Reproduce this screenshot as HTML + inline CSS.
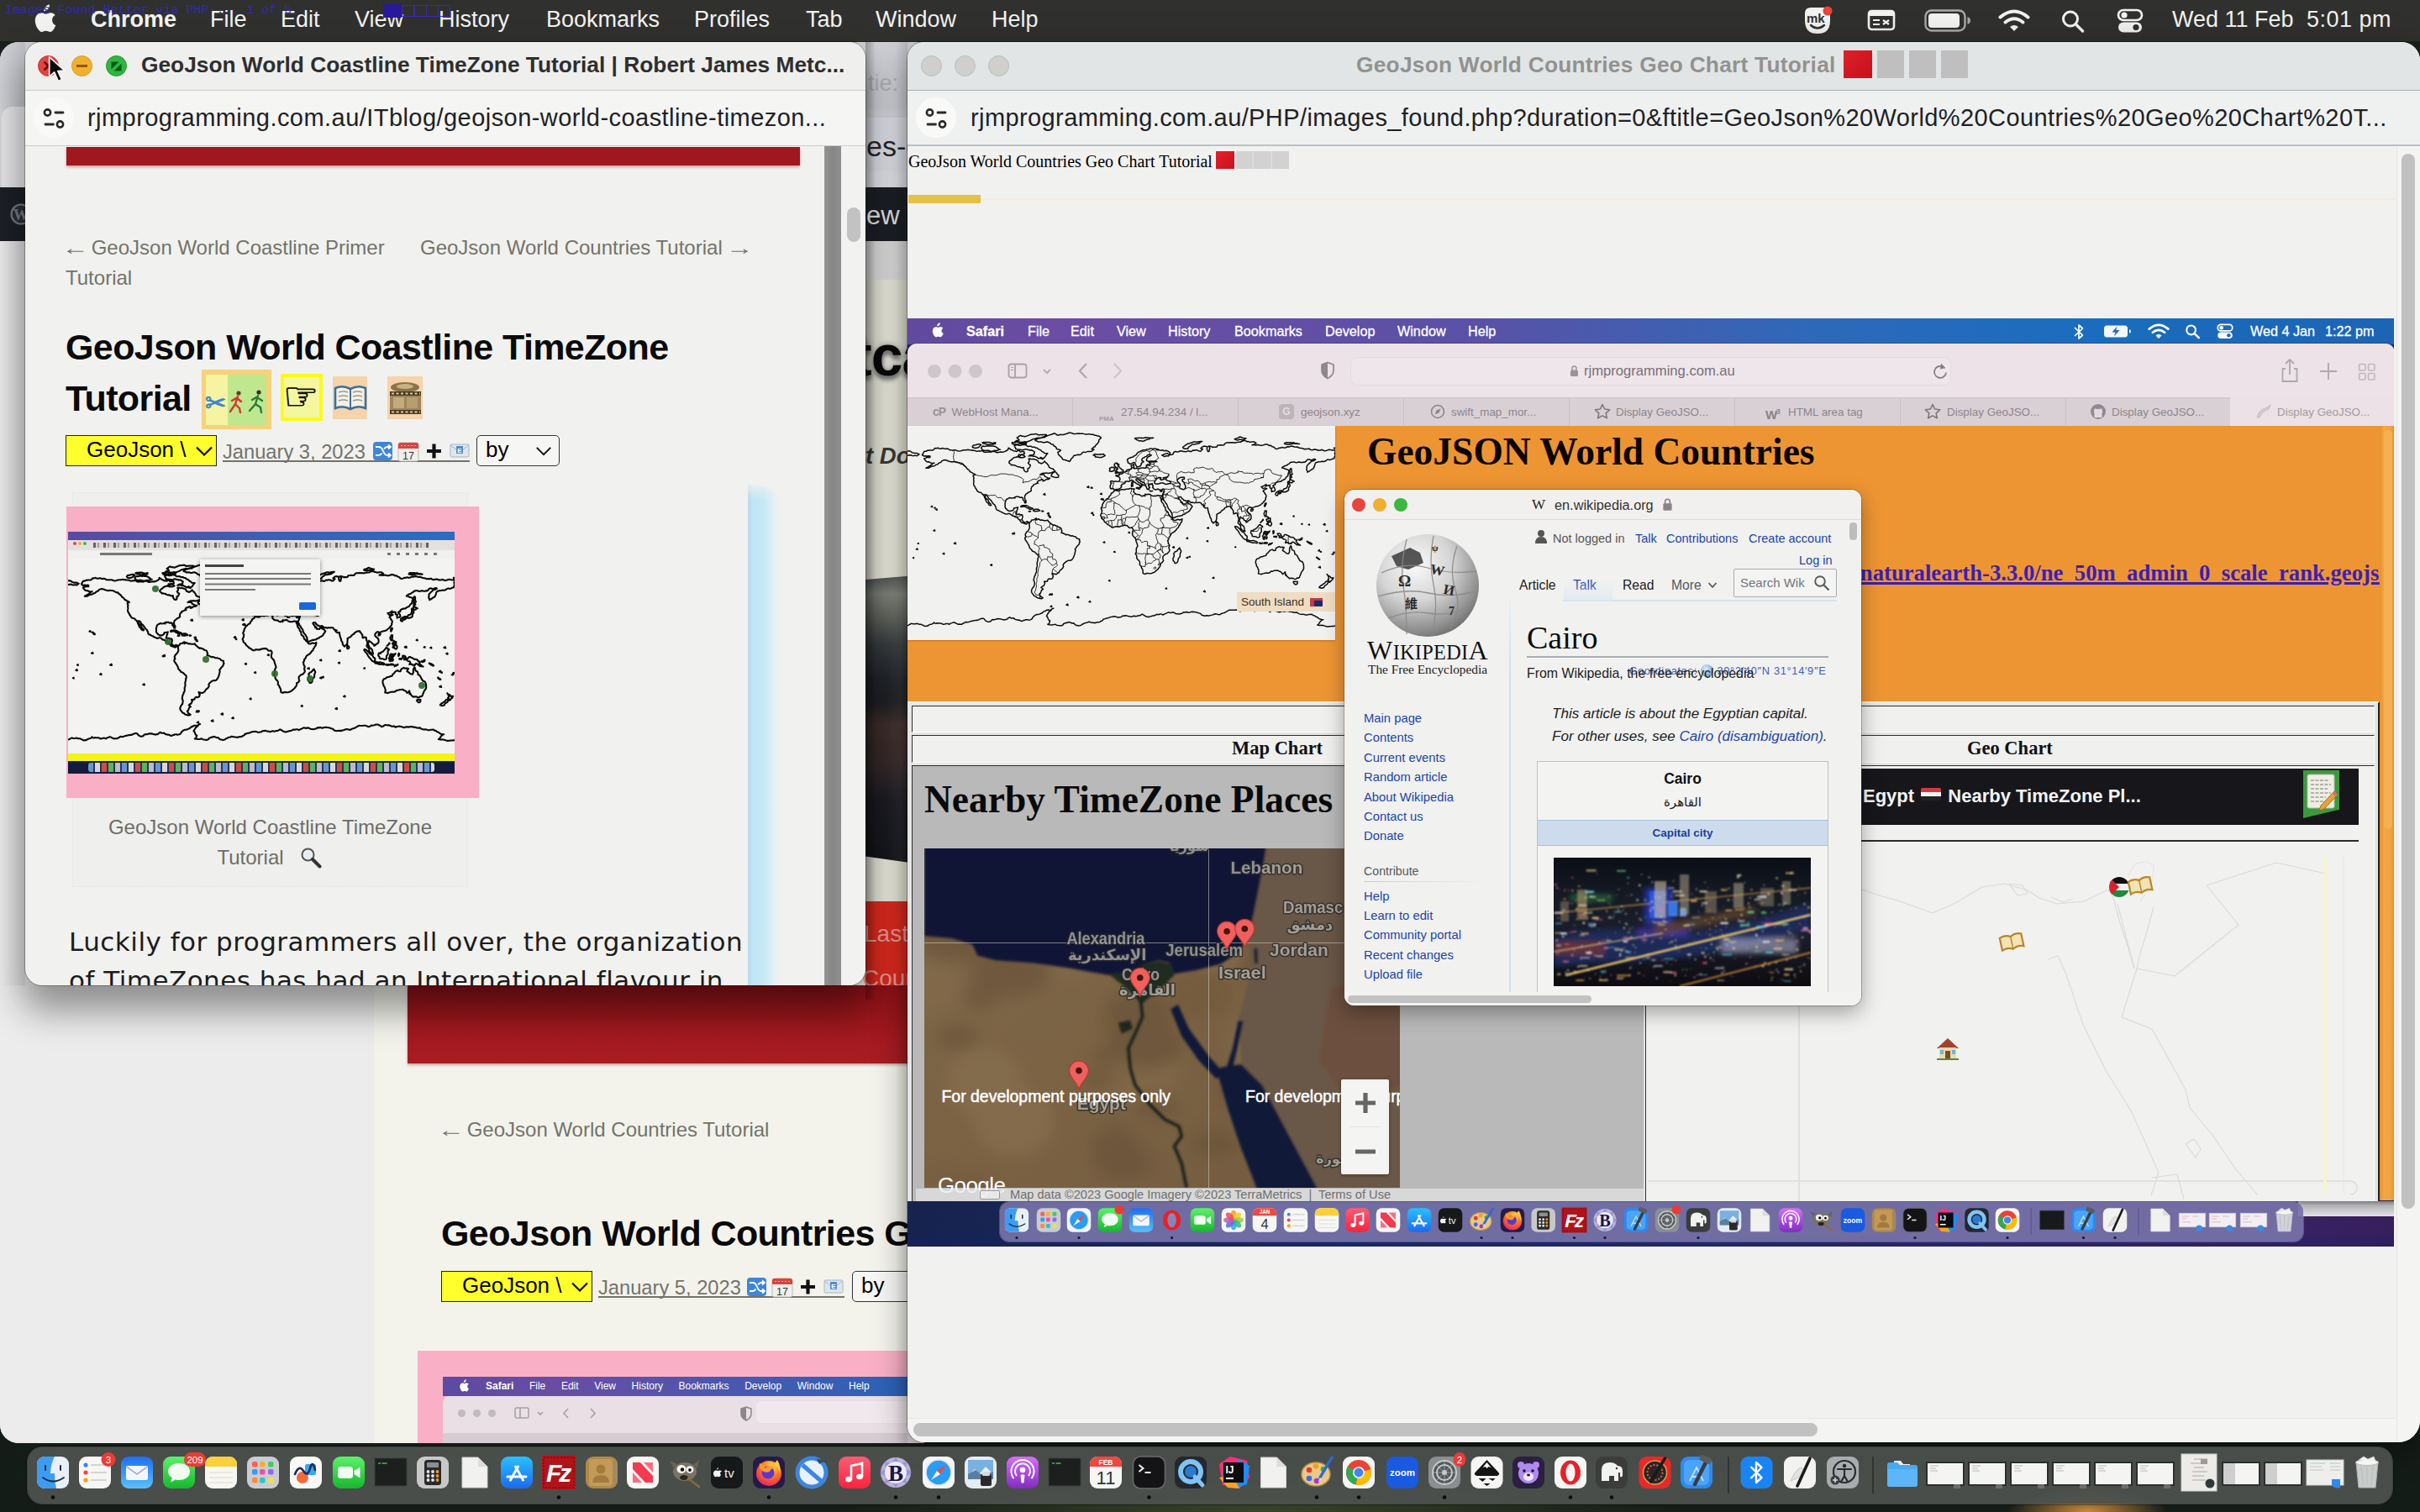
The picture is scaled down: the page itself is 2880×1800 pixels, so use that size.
<!DOCTYPE html>
<html lang="en">
<head>
<meta charset="utf-8">
<title>GeoJson World Coastline TimeZone Tutorial | Robert James Metcalfe Blog</title>
<style>
*{box-sizing:border-box;margin:0;padding:0}
html,body{width:2880px;height:1800px;overflow:hidden;background:#141c17;}
body{font-family:"Liberation Sans",sans-serif;color:#111;position:relative}
.abs{position:absolute}
.nw{white-space:nowrap}
#desk{position:absolute;left:0;top:0;width:2880px;height:1800px;
 background:
 radial-gradient(ellipse 95px 34px at 2484px 1800px,#c98a3c 0%,rgba(150,90,40,0) 100%),
 radial-gradient(ellipse 500px 50px at 1500px 1800px,#3a4428 0%,rgba(40,50,30,0) 100%),
 linear-gradient(#1a211c,#141c17);}
/* ---------- mac menu bar ---------- */
#mbar{position:absolute;left:0;top:0;width:2880px;height:49px;background:#30302e;color:#f2f2f0;font-size:27px;line-height:49px;white-space:nowrap}
#mbar span{position:absolute;top:-1px}
#mbar .b{font-weight:bold}
#ovl{position:absolute;left:6px;top:3px;font-family:"Liberation Mono",monospace;font-size:14.800px;line-height:18px;color:#3029b4;white-space:nowrap;letter-spacing:0.1px}
</style>
</head>
<body>
<div id="desk"></div>
<!-- ================= MENU BAR ================= -->
<div id="mbar">
  <svg class="abs" style="left:39px;top:4px" width="32" height="38" viewBox="0 0 26 31"><path fill="#f2f2f0" d="M18.2 0.3c.2 1.6-.5 3.2-1.4 4.3-1 1.200-2.600 2.100-4.100 2-.2-1.600.6-3.200 1.500-4.200C15.200 1.200 16.900.4 18.200.3zM23.600 10.500c-.3.200-2.800 1.600-2.800 4.800 0 3.700 3.300 5 3.400 5-.1.100-.5 1.800-1.700 3.500-1 1.500-2.100 3-3.800 3-1.600 0-2.100-1-4-1-1.900 0-2.500 1-4 1-1.600.1-2.800-1.600-3.900-3.100C4.700 20.600 3.100 15.100 5.300 11.300c1.100-1.900 3.100-3.100 5.200-3.100 1.600 0 3.100 1.100 4.100 1.100 1 0 2.800-1.300 4.800-1.100.8 0 3.100.3 4.600 2.500z" transform="translate(-2,1)"/></svg>
  <span class="b" style="left:108px">Chrome</span>
  <span style="left:250px">File</span>
  <span style="left:334px">Edit</span>
  <span style="left:422px">View</span>
  <span style="left:522px">History</span>
  <span style="left:650px">Bookmarks</span>
  <span style="left:826px">Profiles</span>
  <span style="left:959px">Tab</span>
  <span style="left:1042px">Window</span>
  <span style="left:1180px">Help</span>
  <!-- right status icons -->
  <svg class="abs" style="left:2145px;top:6px" width="38" height="38" viewBox="0 0 38 38"><path d="M3 10q0-7 7-7h16q7 0 7 7v8q0 16-14 16h-2q-14 0-14-16z" fill="#f2f2f0"/><text x="5" y="21" font-family="Liberation Sans,sans-serif" font-weight="bold" font-size="15" fill="#30302e">mk</text><path d="M10 24q8 7 16 0" stroke="#30302e" stroke-width="2.500" fill="none" stroke-linecap="round"/><circle cx="30" cy="7" r="5.500" fill="#e8443a"/></svg>
  <svg class="abs" style="left:2222px;top:10px" width="34" height="28" viewBox="0 0 34 28"><rect x="2" y="3" width="30" height="22" rx="3.500" fill="none" stroke="#f2f2f0" stroke-width="2.600"/><rect x="2" y="3" width="30" height="6" fill="#f2f2f0"/><path d="M7 14h8M7 19h8M19 14l7 5M26 14l-7 5" stroke="#f2f2f0" stroke-width="2.200"/></svg>
  <svg class="abs" style="left:2290px;top:11px" width="56" height="27" viewBox="0 0 56 27"><rect x="1.500" y="1.500" width="47" height="24" rx="7" fill="none" stroke="#a9a9a6" stroke-width="2.400"/><rect x="5" y="5" width="37" height="17" rx="4" fill="#f2f2f0"/><path d="M51.500 9v9q3.500-1.200 3.500-4.500T51.500 9z" fill="#a9a9a6"/></svg>
  <svg class="abs" style="left:2378px;top:10px" width="38" height="28" viewBox="0 0 38 28"><path d="M2.500 10.500q16.500-14 33 0" fill="none" stroke="#f2f2f0" stroke-width="4" stroke-linecap="round"/><path d="M8.500 16.500q10.500-8.500 21 0" fill="none" stroke="#f2f2f0" stroke-width="4" stroke-linecap="round"/><path d="M14 22q5-4 10 0l-5 5z" fill="#f2f2f0"/></svg>
  <svg class="abs" style="left:2452px;top:11px" width="30" height="28" viewBox="0 0 30 28"><circle cx="12" cy="11.500" r="8.500" fill="none" stroke="#f2f2f0" stroke-width="3"/><path d="M18.500 18l8 8" stroke="#f2f2f0" stroke-width="3.400" stroke-linecap="round"/></svg>
  <svg class="abs" style="left:2519px;top:10px" width="32" height="30" viewBox="0 0 32 30"><rect x="2" y="2" width="28" height="12" rx="6" fill="none" stroke="#f2f2f0" stroke-width="2.600"/><circle cx="9" cy="8" r="3.600" fill="#f2f2f0"/><rect x="2" y="16.500" width="28" height="12" rx="6" fill="#f2f2f0"/><circle cx="23" cy="22.500" r="3.600" fill="#30302e"/></svg>
  <span style="left:2585px">Wed 11 Feb</span>
  <span style="left:2745px;letter-spacing:0.500px">5:01 pm</span>
</div>
<div id="ovl">Images Found Better via PHP ... 1 of 5</div>
<div class="abs" style="left:456px;top:5px;width:22px;height:16px;background:#28189c"></div>
<div class="abs" style="left:478px;top:6px;width:58px;height:14px;border:1px solid #3a2aa8;background:repeating-linear-gradient(90deg,transparent 0 13px,#3a2aa8 13px 14.500px)"></div>
<!-- dock icon symbols -->
<svg width="0" height="0" style="position:absolute"><defs><symbol id="i_finder" viewBox="0 0 40 40" overflow="visible"><defs><clipPath id="cfi"><rect x="1" y="1" width="38" height="38" rx="9"/></clipPath></defs><g clip-path="url(#cfi)"><rect x="1" y="1" width="38" height="38" fill="#e9eff6"/><path d="M1 1h21q-5 10-5 20h5q0 10 2 18H1z" fill="#3d9cf2"/><path d="M11 12v5M29 12v5" stroke="#1a2a44" stroke-width="2" stroke-linecap="round"/><path d="M8 26q12 9 25 0" fill="none" stroke="#1a2a44" stroke-width="1.800" stroke-linecap="round"/></g></symbol><symbol id="i_reminders" viewBox="0 0 40 40" overflow="visible"><rect x="1" y="1" width="38" height="38" rx="9" fill="#f6f6f4"/><circle cx="9" cy="11" r="2.600" fill="#3b82f6"/><circle cx="9" cy="20" r="2.600" fill="#ef4444"/><circle cx="9" cy="29" r="2.600" fill="#f59e0b"/><path d="M15 11h19M15 20h19M15 29h19" stroke="#c9c9c9" stroke-width="1.600"/></symbol><symbol id="i_mail" viewBox="0 0 40 40" overflow="visible"><defs><linearGradient id="gma" x1="0" y1="0" x2="0" y2="1"><stop offset="0" stop-color="#1e6ef0"/><stop offset="1" stop-color="#5ac0fa"/></linearGradient></defs><rect x="1" y="1" width="38" height="38" rx="9" fill="url(#gma)"/><rect x="7" y="12" width="26" height="17" rx="2" fill="#f4f6fa"/><path d="M7.500 13l12.500 9 12.500-9" fill="none" stroke="#9fb4d0" stroke-width="1.600"/></symbol><symbol id="i_messages" viewBox="0 0 40 40" overflow="visible"><defs><linearGradient id="gms" x1="0" y1="0" x2="0" y2="1"><stop offset="0" stop-color="#5ef06a"/><stop offset="1" stop-color="#16b82c"/></linearGradient></defs><rect x="1" y="1" width="38" height="38" rx="9" fill="url(#gms)"/><path d="M20 9c8 0 13 4.500 13 10s-5 10-13 10q-2 0-4-.5l-6 3 1.800-5Q7 23 7 19C7 13.500 12 9 20 9z" fill="#f2fbf2"/></symbol><symbol id="i_notes" viewBox="0 0 40 40" overflow="visible"><rect x="1" y="1" width="38" height="38" rx="9" fill="#f7f7f2"/><path d="M1 13V10a9 9 0 019-9h20a9 9 0 019 9v3z" fill="#fbd03c"/><path d="M6 20h28M6 26h28M6 32h28" stroke="#dedbd0" stroke-width="1.200"/></symbol><symbol id="i_launchpad" viewBox="0 0 40 40" overflow="visible"><rect x="1" y="1" width="38" height="38" rx="9" fill="#c9ccd2"/><rect x="7" y="7" width="6.500" height="6.500" rx="1.800" fill="#ff5e57"/><rect x="16" y="7" width="6.500" height="6.500" rx="1.800" fill="#ffb02e"/><rect x="26" y="7" width="6.500" height="6.500" rx="1.800" fill="#3ecf5a"/><rect x="7" y="16" width="6.500" height="6.500" rx="1.800" fill="#3b9af5"/><rect x="16" y="16" width="6.500" height="6.500" rx="1.800" fill="#f54ea2"/><rect x="26" y="16" width="6.500" height="6.500" rx="1.800" fill="#8e6cf0"/><rect x="7" y="26" width="6.500" height="6.500" rx="1.800" fill="#ff8a3d"/><rect x="16" y="26" width="6.500" height="6.500" rx="1.800" fill="#29c7c7"/><rect x="26" y="26" width="6.500" height="6.500" rx="1.800" fill="#f2e04a"/></symbol><symbol id="i_freeform" viewBox="0 0 40 40" overflow="visible"><rect x="1" y="1" width="38" height="38" rx="9" fill="#f8f8f6"/><circle cx="16" cy="26" r="7" fill="#f26b3a"/><rect x="19" y="10" width="13" height="13" rx="2" fill="#36a8f5"/><path d="M7 22q5-12 10-4t8-3 6 2" fill="none" stroke="#202a5a" stroke-width="2.600" stroke-linecap="round"/></symbol><symbol id="i_facetime" viewBox="0 0 40 40" overflow="visible"><rect x="1" y="1" width="38" height="38" rx="9" fill="url(#gms)"/><rect x="7" y="13" width="18" height="14" rx="3.500" fill="#f2fbf2"/><path d="M26.500 18l7-4.500v13l-7-4.500z" fill="#f2fbf2"/></symbol><symbol id="i_darkterm" viewBox="0 0 40 40" overflow="visible"><rect x="1" y="3" width="38" height="33" fill="#1c1f1e" stroke="#3a3d3c" stroke-width="1"/><path d="M5 9h3M9.500 9h6" stroke="#39c04a" stroke-width="1.600"/></symbol><symbol id="i_calculator" viewBox="0 0 40 40" overflow="visible"><rect x="1" y="1" width="38" height="38" rx="9" fill="#c8c8c8"/><rect x="10" y="5" width="20" height="30" rx="3.500" fill="#2a2a2c"/><rect x="13" y="8" width="14" height="6" rx="1" fill="#8a8e92"/><circle cx="14.5" cy="19.0" r="1.900" fill="#e6e6e6"/><circle cx="14.5" cy="24.0" r="1.900" fill="#e6e6e6"/><circle cx="14.5" cy="29.0" r="1.900" fill="#e6e6e6"/><circle cx="20.0" cy="19.0" r="1.900" fill="#e6e6e6"/><circle cx="20.0" cy="24.0" r="1.900" fill="#e6e6e6"/><circle cx="20.0" cy="29.0" r="1.900" fill="#e6e6e6"/><circle cx="25.5" cy="19.0" r="1.900" fill="#f09a2a"/><circle cx="25.5" cy="24.0" r="1.900" fill="#f09a2a"/><circle cx="25.5" cy="29.0" r="1.900" fill="#f09a2a"/></symbol><symbol id="i_doc" viewBox="0 0 40 40" overflow="visible"><path d="M5 2h19l11 11v25H5z" fill="#f1f1ef" stroke="#d2d2d0" stroke-width="1"/><path d="M24 2v11h11z" fill="#dcdcda"/></symbol><symbol id="i_appstore" viewBox="0 0 40 40" overflow="visible"><defs><linearGradient id="gap" x1="0" y1="0" x2="0" y2="1"><stop offset="0" stop-color="#2ac0fc"/><stop offset="1" stop-color="#1a6af0"/></linearGradient></defs><rect x="1" y="1" width="38" height="38" rx="9" fill="url(#gap)"/><path d="M12.500 29l9-16M27.500 29l-9-16M9 25h22" stroke="#f4f8ff" stroke-width="3" stroke-linecap="round" fill="none"/></symbol><symbol id="i_filezilla" viewBox="0 0 40 40" overflow="visible"><rect x="0" y="0" width="40" height="40" fill="#b0141a"/><rect x="2" y="2" width="36" height="36" fill="none" stroke="#8a0c12" stroke-width="2" stroke-dasharray="2 2"/><text x="5" y="31" font-family="Liberation Sans,sans-serif" font-weight="bold" font-style="italic" font-size="30" fill="#fff" letter-spacing="-3">Fz</text></symbol><symbol id="i_contacts" viewBox="0 0 40 40" overflow="visible"><rect x="1" y="1" width="38" height="38" rx="9" fill="#b08848"/><rect x="5" y="4" width="28" height="32" rx="3" fill="#c39a58"/><circle cx="19" cy="16" r="5.500" fill="#a27c3e"/><path d="M9 32q0-9 10-9t10 9z" fill="#a27c3e"/><path d="M36 8v6M36 17v6M36 26v6" stroke="#8a8a8a" stroke-width="2.500"/></symbol><symbol id="i_news" viewBox="0 0 40 40" overflow="visible"><rect x="1" y="1" width="38" height="38" rx="9" fill="#f6f6f4"/><path d="M8 8h9l15 16v8h-9L8 16z" fill="#f23a50"/><path d="M8 20l11 12H8zM32 20L21 8h11z" fill="#f8707e"/></symbol><symbol id="i_gimp" viewBox="0 0 40 40" overflow="visible"><ellipse cx="20" cy="19" rx="14" ry="11" fill="#7a7264"/><path d="M6 14L2 6l9 4zM30 11l7-6-2 10z" fill="#6a6256"/><ellipse cx="16" cy="16" rx="5.500" ry="5" fill="#f4f4f0"/><ellipse cx="26" cy="16.500" rx="4.500" ry="4.200" fill="#f4f4f0"/><circle cx="17" cy="16.500" r="2.200" fill="#111"/><circle cx="26" cy="17" r="1.900" fill="#111"/><ellipse cx="19" cy="26" rx="5" ry="3" fill="#2a2622"/><path d="M24 27l13 10" stroke="#8a6a3a" stroke-width="2.600" stroke-linecap="round"/></symbol><symbol id="i_appletv" viewBox="0 0 40 40" overflow="visible"><rect x="1" y="1" width="38" height="38" rx="9" fill="#17181a"/><text x="17" y="26" font-family="Liberation Sans,sans-serif" font-size="15" fill="#f2f2f2">tv</text><path d="M12.500 15.500c.2 1-.8 2.200-1.900 2.100-.2-1 .9-2.100 1.900-2.100zM15.400 20.400c-1.200.7-1.400 2.600.1 3.300-.5 1.300-1.400 2.800-2.500 2.800-.8 0-1-.5-2-.5s-1.200.5-2 .5c-1.400 0-3.400-3.800-2.100-6.100.6-1 1.600-1.600 2.600-1.600.9 0 1.500.5 2.200.5.600 0 1.500-.6 2.500-.5.500 0 1.500.2 2.200 1.100z" fill="#f2f2f2" transform="translate(-2.500,-1.200)"/></symbol><symbol id="i_firefox" viewBox="0 0 40 40" overflow="visible"><defs><radialGradient id="gff" cx=".6" cy=".25" r=".9"><stop offset="0" stop-color="#ffe14a"/><stop offset=".4" stop-color="#ff7a1c"/><stop offset=".8" stop-color="#e8305a"/><stop offset="1" stop-color="#8a2ac8"/></radialGradient></defs><rect x="1" y="1" width="38" height="38" rx="9" fill="#241a4a"/><circle cx="20" cy="21" r="15" fill="url(#gff)"/><circle cx="19" cy="20" r="7.500" fill="#5a38d0"/><path d="M9 9q5 1 6 6 5-5 13-1-6 1-7 5-6 2-10-2-3-4-2-8z" fill="#ff9a2a"/><path d="M30 5q5 8 3 16-2-8-7-11z" fill="#ffc83a"/></symbol><symbol id="i_noslash" viewBox="0 0 40 40" overflow="visible"><circle cx="20" cy="20" r="17" fill="#e8f0fa" stroke="#3a86e0" stroke-width="5"/><path d="M9 11l22 19" stroke="#3a86e0" stroke-width="5"/><path d="M26 4q8 0 12 3-6 0-9 3z" fill="#3a4a5a"/></symbol><symbol id="i_music" viewBox="0 0 40 40" overflow="visible"><defs><linearGradient id="gmu" x1="0" y1="0" x2="0" y2="1"><stop offset="0" stop-color="#fb5c74"/><stop offset="1" stop-color="#fa233b"/></linearGradient></defs><rect x="1" y="1" width="38" height="38" rx="9" fill="url(#gmu)"/><path d="M16 28V12l13-3v16" fill="none" stroke="#fff" stroke-width="2.600"/><ellipse cx="13" cy="28" rx="4" ry="3.200" fill="#fff"/><ellipse cx="26" cy="25" rx="4" ry="3.200" fill="#fff"/></symbol><symbol id="i_bbedit" viewBox="0 0 40 40" overflow="visible"><circle cx="20" cy="20" r="18" fill="#b9b2dc"/><path d="M20 2l5 7 8-2-1 8 7 5-7 5 1 8-8-2-5 7-5-7-8 2 1-8-7-5 7-5-1-8 8 2z" fill="#9a8ed0" opacity=".9"/><circle cx="20" cy="20" r="13" fill="#eceaf6"/><text x="20" y="30" text-anchor="middle" font-family="Liberation Serif,serif" font-weight="bold" font-size="27" fill="#1a1446">B</text></symbol><symbol id="i_safari" viewBox="0 0 40 40" overflow="visible"><rect x="1" y="1" width="38" height="38" rx="9" fill="#f4f6f8"/><circle cx="20" cy="20" r="15" fill="#2a9cf4"/><circle cx="20" cy="20" r="15" fill="none" stroke="#dfe6ee" stroke-width="1.600"/><path d="M29 11l-7 11-4-4z" fill="#f2463a"/><path d="M11 29l7-11 4 4z" fill="#f4f6f8"/></symbol><symbol id="i_preview" viewBox="0 0 40 40" overflow="visible"><rect x="1" y="1" width="38" height="38" rx="9" fill="#e4ecf2"/><rect x="5" y="5" width="30" height="23" fill="#7ab0e0"/><path d="M5 24l8-8 6 5 7-8 9 9v6H5z" fill="#e8eef2"/><path d="M5 22l9-5 8 6 13-4v9H5z" fill="#5a7ea0"/><rect x="20" y="22" width="13" height="14" rx="2" fill="#2a2a2c"/><rect x="22" y="19" width="9" height="5" rx="1.500" fill="#d8d8d8"/></symbol><symbol id="i_podcasts" viewBox="0 0 40 40" overflow="visible"><defs><linearGradient id="gpo" x1="0" y1="0" x2="0" y2="1"><stop offset="0" stop-color="#d56efc"/><stop offset="1" stop-color="#832bc1"/></linearGradient></defs><rect x="1" y="1" width="38" height="38" rx="9" fill="url(#gpo)"/><circle cx="20" cy="17" r="3.300" fill="#fff"/><path d="M17.500 23q2.500-1.500 5 0l-1 9q-1.500 1-3 0z" fill="#fff"/><path d="M13 24a9 9 0 1114 0M9.500 27a13.500 13.500 0 1121 0" fill="none" stroke="#fff" stroke-width="2"/></symbol><symbol id="i_calendar" viewBox="0 0 40 40" overflow="visible"><rect x="1" y="1" width="38" height="38" rx="9" fill="#f6f6f4"/><path d="M1 13V10a9 9 0 019-9h20a9 9 0 019 9v3z" fill="#f0473e"/><text x="20" y="10.500" text-anchor="middle" font-family="Liberation Sans,sans-serif" font-weight="bold" font-size="8.500" fill="#fff">FEB</text><text x="20" y="34" text-anchor="middle" font-family="Liberation Sans,sans-serif" font-size="22" fill="#333">11</text></symbol><symbol id="i_calendar4" viewBox="0 0 40 40" overflow="visible"><rect x="1" y="1" width="38" height="38" rx="9" fill="#f6f6f4"/><path d="M1 13V10a9 9 0 019-9h20a9 9 0 019 9v3z" fill="#f0473e"/><text x="20" y="10.500" text-anchor="middle" font-family="Liberation Sans,sans-serif" font-weight="bold" font-size="8.500" fill="#fff">JAN</text><text x="20" y="34" text-anchor="middle" font-family="Liberation Sans,sans-serif" font-size="22" fill="#333">4</text></symbol><symbol id="i_terminal" viewBox="0 0 40 40" overflow="visible"><rect x="1" y="1" width="38" height="38" rx="9" fill="#141416" stroke="#6a6a6c" stroke-width="1.500"/><path d="M8 11l5 4-5 4" fill="none" stroke="#f0f0f0" stroke-width="2"/><path d="M15 20h7" stroke="#f0f0f0" stroke-width="2"/></symbol><symbol id="i_quicktime" viewBox="0 0 40 40" overflow="visible"><rect x="1" y="1" width="38" height="38" rx="9" fill="#23272e"/><circle cx="20" cy="19" r="12" fill="none" stroke="#7fc4f4" stroke-width="6"/><circle cx="20" cy="19" r="7" fill="#2a7ad0"/><path d="M25 25l9 10" stroke="#7fc4f4" stroke-width="5" stroke-linecap="round"/></symbol><symbol id="i_intellij" viewBox="0 0 40 40" overflow="visible"><path d="M3 10L16 1l20 5 3 20-12 13-20-4z" fill="#fc2f7a"/><path d="M26 4l13 8-3 22-14 5z" fill="#1d8cf8"/><path d="M3 26l10 12 14 1-8-16z" fill="#fca31a"/><rect x="8" y="8" width="24" height="24" fill="#0c0c0e"/><text x="10.500" y="21" font-family="Liberation Sans,sans-serif" font-weight="bold" font-size="12" fill="#fff">IJ</text><path d="M11 27h9" stroke="#fff" stroke-width="2"/></symbol><symbol id="i_paintbrush" viewBox="0 0 40 40" overflow="visible"><ellipse cx="19" cy="22" rx="17" ry="14" fill="#e9c888" stroke="#b8924c" stroke-width="1.500"/><circle cx="11" cy="17" r="3.300" fill="#e23a3a"/><circle cx="19" cy="12.500" r="3.300" fill="#f2a020"/><circle cx="28" cy="16" r="3.300" fill="#3aa84a"/><circle cx="11" cy="27" r="3.300" fill="#3a6ae0"/><circle cx="20" cy="30" r="3.300" fill="#9a3ad0"/><path d="M38 2L24 26" stroke="#2a6ad8" stroke-width="3.400" stroke-linecap="round"/><path d="M24 26l-2.500 6 5.500-4z" fill="#e8d8b0"/></symbol><symbol id="i_chrome" viewBox="0 0 40 40" overflow="visible"><rect x="1" y="1" width="38" height="38" rx="9" fill="#f6f6f4"/><circle cx="20" cy="20" r="15" fill="#e94335"/><path d="M20 20L7 12.500A15 15 0 0016.500 34.600z" fill="#34a853"/><path d="M20 20l-3.500 14.600A15 15 0 0034.600 16z" fill="#fbbc05"/><circle cx="20" cy="20" r="7" fill="#f6f6f4"/><circle cx="20" cy="20" r="5.400" fill="#4285f4"/></symbol><symbol id="i_zoom" viewBox="0 0 40 40" overflow="visible"><rect x="1" y="1" width="38" height="38" rx="9" fill="#1a5ae0"/><text x="20" y="24" text-anchor="middle" font-family="Liberation Sans,sans-serif" font-weight="bold" font-size="11.500" fill="#fff">zoom</text></symbol><symbol id="i_sysprefs" viewBox="0 0 40 40" overflow="visible"><rect x="1" y="1" width="38" height="38" rx="9" fill="#8a8e90"/><circle cx="20" cy="20" r="14" fill="#55595c" stroke="#c6c8ca" stroke-width="2"/><circle cx="20" cy="20" r="9" fill="none" stroke="#c6c8ca" stroke-width="2"/><circle cx="20" cy="20" r="3" fill="#c6c8ca"/><path d="M20 6v28M6 20h28M10 10l20 20M30 10L10 30" stroke="#c6c8ca" stroke-width="1" opacity=".6"/></symbol><symbol id="i_inkscape" viewBox="0 0 40 40" overflow="visible"><rect x="1" y="1" width="38" height="38" rx="9" fill="#f6f6f4"/><path d="M20 5l14 15q2 3-2 4H8q-4-1-2-4z" fill="#151515"/><path d="M20 8l5 6-3-1-2 2-2-2-3 1z" fill="#f6f6f4"/><path d="M10 27h9l-4 4zM22 27h8l-3 3zM16 33h8l-4 3z" fill="#151515"/></symbol><symbol id="i_bear" viewBox="0 0 40 40" overflow="visible"><rect x="1" y="1" width="38" height="38" rx="9" fill="#2a2040"/><circle cx="20" cy="21" r="12" fill="#b08af0"/><circle cx="11" cy="11" r="4" fill="#b08af0"/><circle cx="29" cy="11" r="4" fill="#b08af0"/><ellipse cx="20" cy="25" rx="6" ry="5" fill="#f0e8fa"/><circle cx="15" cy="18" r="1.800" fill="#1a1030"/><circle cx="25" cy="18" r="1.800" fill="#1a1030"/><ellipse cx="20" cy="23" rx="2" ry="1.400" fill="#1a1030"/></symbol><symbol id="i_opera" viewBox="0 0 40 40" overflow="visible"><rect x="1" y="1" width="38" height="38" rx="9" fill="#f6f6f4"/><ellipse cx="20" cy="20" rx="12" ry="14.500" fill="#e8202a"/><ellipse cx="20" cy="20" rx="5.500" ry="10.500" fill="#f6f6f4"/></symbol><symbol id="i_operadark" viewBox="0 0 40 40" overflow="visible"><ellipse cx="20" cy="20" rx="14" ry="16" fill="#e8202a"/><ellipse cx="20" cy="20" rx="7" ry="11.500" fill="#8a85b8"/></symbol><symbol id="i_elephant" viewBox="0 0 40 40" overflow="visible"><rect x="1" y="1" width="38" height="38" rx="9" fill="#3a3d3c"/><path d="M8 30V17q0-9 10-9 6 0 9 4 6 0 6 6v5q0 3-3 2v-5h-2v10h-5v-6h-6v6z" fill="#f2f2f0"/><circle cx="26" cy="15" r="1.200" fill="#333"/></symbol><symbol id="i_redcompass" viewBox="0 0 40 40" overflow="visible"><rect x="1" y="1" width="38" height="38" rx="9" fill="#e8282a"/><circle cx="20" cy="20" r="14" fill="#2a2628" stroke="#d8a040" stroke-width="1.500"/><circle cx="20" cy="20" r="9" fill="none" stroke="#e05a4a" stroke-width="2" stroke-dasharray="2 2"/><path d="M32 3L15 31" stroke="#1a1a1a" stroke-width="3.500" stroke-linecap="round"/></symbol><symbol id="i_xcode" viewBox="0 0 40 40" overflow="visible"><rect x="1" y="1" width="38" height="38" rx="9" fill="#2a8af0"/><rect x="5" y="5" width="30" height="30" rx="6" fill="#4aa4f8"/><path d="M12 30l8-16 8 16M14 25h12" stroke="#bfe0ff" stroke-width="1.800" fill="none"/><path d="M33 4L18 34" stroke="#3a3c40" stroke-width="4.500" stroke-linecap="round"/><rect x="24" y="1" width="14" height="7" rx="2" fill="#5a5c60" transform="rotate(25 31 4)"/></symbol><symbol id="i_bluetooth" viewBox="0 0 40 40" overflow="visible"><rect x="1" y="1" width="38" height="38" rx="9" fill="#1a84f4"/><path d="M13 13l13 13-6.500 6V8L26 14 13 27" fill="none" stroke="#fff" stroke-width="2.400" stroke-linejoin="round"/></symbol><symbol id="i_script" viewBox="0 0 40 40" overflow="visible"><rect x="1" y="1" width="38" height="38" rx="9" fill="#f2f2f0"/><path d="M9 30q6-14 12-16 6 3 2 9-6 4-14 7z" fill="#e2e2e0" stroke="#c8c8c6"/><path d="M32 3L17 36" stroke="#1c1c1e" stroke-width="3.600" stroke-linecap="round"/></symbol><symbol id="i_access" viewBox="0 0 40 40" overflow="visible"><rect x="1" y="1" width="38" height="38" rx="9" fill="#a8acae"/><circle cx="22" cy="19" r="13" fill="none" stroke="#2a2c2e" stroke-width="2.200"/><circle cx="22" cy="12" r="2.300" fill="#2a2c2e"/><path d="M14 16h16M22 16v8M22 24l-4 7M22 24l4 7" stroke="#2a2c2e" stroke-width="2.200" stroke-linecap="round" fill="none"/><circle cx="11" cy="29" r="5.500" fill="#3a3c3e"/><path d="M8 29h6M11 26v6" stroke="#ddd" stroke-width="1.500"/></symbol><symbol id="i_folder" viewBox="0 0 40 40" overflow="visible"><path d="M10 6h8l3 4h8v6H10z" fill="#f2f2f0"/><path d="M2 11q0-3 3-3h9l3 3h18q3 0 3 3v20q0 3-3 3H5q-3 0-3-3z" fill="#4aa8f0"/><path d="M2 16h36v18q0 3-3 3H5q-3 0-3-3z" fill="#5cb6f8"/></symbol><symbol id="i_thumb" viewBox="0 0 40 40" overflow="visible"><rect x="-2" y="8" width="44" height="27" fill="#f4f4f2" stroke="#2c2e2e" stroke-width="2"/><path d="M2 12h10M2 15h7M2 18h9" stroke="#b8b8b8" stroke-width="1"/><rect x="30" y="34" width="8" height="5" rx="1" fill="#777" opacity=".8"/></symbol><symbol id="i_thumbp" viewBox="0 0 40 40" overflow="visible"><rect x="-2" y="8" width="44" height="27" fill="#f4f4f2" stroke="#2c2e2e" stroke-width="2"/><path d="M-1 9h14v25H-1z" fill="#cfcfcf"/></symbol><symbol id="i_talldoc" viewBox="0 0 40 40" overflow="visible"><rect x="-1" y="-2" width="42" height="44" fill="#ecebe8" stroke="#cfcfcc"/><path d="M14 4h16M10 9h20M14 14h12M12 19h18M12 24h14M12 29h16" stroke="#b0aaa6" stroke-width="1.200"/><rect x="22" y="4" width="8" height="6" fill="#a09a96"/><circle cx="33" cy="33" r="5.500" fill="#2e3a3a"/></symbol><symbol id="i_docblue" viewBox="0 0 40 40" overflow="visible"><rect x="-2" y="5" width="44" height="30" fill="#eeeeec" stroke="#d0d0ce"/><path d="M2 9h18M2 13h14M2 17h16M26 9h12M26 13h12M26 17h12" stroke="#c2c2c0" stroke-width="1"/><path d="M28 28h10v10q-6 2-10-3z" fill="#2a8af0"/></symbol><symbol id="i_trash" viewBox="0 0 40 40" overflow="visible"><path d="M7 8h26l-3 30H10z" fill="#e6e8e8" opacity=".82" stroke="#c8caca"/><ellipse cx="20" cy="8" rx="13.500" ry="3.500" fill="#f4f6f6" stroke="#b8baba"/><path d="M13 13l2 22M20 13v22M27 13l-2 22" stroke="#bcbebe" stroke-width="1.200"/><path d="M10 5l6-4 5 3 7-3 2 5" fill="#f2f2f0" stroke="#c8c8c8" stroke-width=".8"/></symbol><symbol id="i_photos" viewBox="0 0 40 40" overflow="visible"><rect x="1" y="1" width="38" height="38" rx="9" fill="#f6f6f4"/><ellipse cx="20" cy="12" rx="4.500" ry="8" fill="#f9a01b" opacity=".85" transform="rotate(0 20 20)"/><ellipse cx="20" cy="12" rx="4.500" ry="8" fill="#f2d21c" opacity=".85" transform="rotate(45 20 20)"/><ellipse cx="20" cy="12" rx="4.500" ry="8" fill="#9ccb3c" opacity=".85" transform="rotate(90 20 20)"/><ellipse cx="20" cy="12" rx="4.500" ry="8" fill="#3cb878" opacity=".85" transform="rotate(135 20 20)"/><ellipse cx="20" cy="12" rx="4.500" ry="8" fill="#2aa7de" opacity=".85" transform="rotate(180 20 20)"/><ellipse cx="20" cy="12" rx="4.500" ry="8" fill="#5a6fd6" opacity=".85" transform="rotate(225 20 20)"/><ellipse cx="20" cy="12" rx="4.500" ry="8" fill="#b25fc9" opacity=".85" transform="rotate(270 20 20)"/><ellipse cx="20" cy="12" rx="4.500" ry="8" fill="#ef4b5a" opacity=".85" transform="rotate(315 20 20)"/></symbol><symbol id="i_thumbl" viewBox="0 0 40 40" overflow="visible"><rect x="-1" y="9" width="42" height="22" fill="#f2eef2" stroke="#cfc8d4" stroke-width="1"/><path d="M3 14h12M3 18h8M20 14h10M3 23h14" stroke="#d8b8c8" stroke-width="1.200"/><circle cx="31" cy="33" r="5" fill="#3a8ae0"/></symbol><symbol id="i_darkwin" viewBox="0 0 40 40" overflow="visible"><rect x="1" y="5" width="38" height="30" fill="#17191c" stroke="#3a3c40"/></symbol></defs></svg>
<!-- world outline symbols (hand-authored rough coastline data) -->
<svg width="0" height="0" style="position:absolute"><defs><symbol id="wmc" viewBox="0 0 360 180" preserveAspectRatio="none" overflow="visible"><path d="M12.0 24.5L12.7 23.9L13.2 23.1L13.5 22.3L14.0 21.5L14.8 21.4L15.6 21.4L16.4 21.0L17.0 20.5L17.8 20.7L18.6 20.5L19.4 20.5L20.2 20.5L21.1 20.5L21.9 20.0L22.5 19.4L23.0 18.8L24.3 18.9L25.5 18.5L26.7 19.1L28.0 19.2L28.9 18.9L29.8 18.8L30.6 19.1L31.5 19.3L32.5 19.5L33.4 19.1L34.3 19.4L35.0 20.0L35.9 20.4L37.0 20.4L38.0 20.6L39.0 20.3L40.6 20.4L42.0 21.0L43.5 21.3L45.0 21.0L46.5 20.5L48.0 20.3L49.5 20.3L51.0 20.0L52.0 20.4L53.0 20.2L54.0 20.6L55.0 20.5L55.9 20.7L56.8 20.8L57.6 21.2L58.5 21.4L59.3 21.3L60.2 21.1L61.1 21.2L62.0 21.0L62.8 21.1L63.6 21.3L64.2 21.9L65.0 22.2L66.2 22.1L67.5 22.1L68.8 21.8L70.0 22.2L70.9 21.7L72.0 21.5L73.3 21.5L74.5 22.2L75.7 22.5L77.0 22.2L78.2 21.9L79.5 22.0L80.8 22.0L82.0 21.5L83.0 21.0L84.0 20.5L84.8 19.6L85.0 18.5L86.1 19.1L87.0 20.0L88.1 20.3L89.0 21.0L90.5 21.2L92.0 21.5L92.9 20.8L94.0 20.5L94.4 21.3L95.0 22.0L96.5 21.6L98.0 21.5L98.3 22.5L98.5 23.5L97.3 23.8L96.0 24.0L95.0 25.0L94.0 26.0L93.0 26.2L92.0 26.0L91.1 26.5L90.0 26.5L89.0 27.2L88.0 28.0L87.1 28.9L86.0 29.5L85.5 30.3L85.5 31.2L86.6 32.0L87.5 33.0L88.4 32.8L89.3 33.1L90.2 33.1L91.0 33.5L91.9 34.0L92.9 34.4L94.0 34.4L95.0 34.7L96.3 35.3L97.7 35.0L97.8 36.0L98.0 37.0L98.6 38.0L99.5 38.7L101.0 38.5L101.4 37.3L101.2 36.0L102.3 35.5L103.0 34.5L103.5 33.0L102.3 32.3L101.5 31.2L102.2 30.5L102.5 29.5L102.4 28.6L102.0 27.7L103.0 27.6L104.0 27.9L105.0 28.1L106.0 27.8L106.8 28.1L107.5 28.4L108.3 28.5L109.0 29.0L110.0 29.8L110.5 31.0L111.6 31.2L112.5 31.8L113.9 31.2L115.0 30.2L115.5 29.7L116.0 30.5L116.7 31.2L117.5 31.7L118.0 32.5L118.8 33.4L119.0 34.5L119.7 35.2L120.6 35.6L121.5 36.0L122.5 36.0L123.2 37.1L124.2 38.0L123.0 38.7L121.5 39.2L120.0 39.8L119.0 39.7L118.0 39.9L117.0 39.5L116.0 39.8L114.7 39.8L113.5 40.0L112.4 40.5L111.5 41.2L112.3 40.9L113.2 41.0L114.1 40.9L115.0 41.0L115.5 42.5L116.3 42.8L117.0 43.2L117.8 43.5L118.5 44.0L120.0 44.0L119.0 44.8L118.2 45.0L117.4 44.7L116.8 45.2L116.0 45.5L115.1 46.2L114.0 46.5L114.0 45.2L113.0 45.0L112.3 45.4L111.6 45.9L110.8 46.0L110.0 46.2L109.2 47.5L110.0 48.3L108.9 48.3L108.0 48.8L107.0 49.2L106.0 49.4L105.8 50.5L105.0 50.8L104.5 51.5L104.0 53.0L104.2 54.5L103.0 55.5L101.8 55.8L101.0 56.7L99.8 57.4L99.0 58.5L98.6 60.0L98.7 60.8L98.9 61.6L99.1 62.4L99.8 63.0L99.5 63.9L99.8 64.7L98.8 64.8L98.3 63.3L97.2 62.2L97.2 60.8L96.0 60.0L94.5 60.2L93.6 59.6L92.5 59.6L91.5 59.6L90.5 59.8L90.5 60.8L89.5 60.4L88.5 60.7L87.2 60.8L86.0 60.4L84.8 61.1L83.5 61.7L82.8 62.5L82.6 63.5L82.3 64.3L82.1 65.2L82.1 66.1L82.2 67.0L82.1 68.3L82.7 69.5L83.5 70.1L84.0 71.0L84.9 71.2L85.5 71.8L86.8 71.6L88.0 71.4L89.3 70.5L89.7 69.0L90.6 69.1L91.4 68.8L92.2 68.8L93.0 68.5L92.6 69.5L92.5 70.5L92.0 71.4L91.8 72.5L91.7 73.4L91.2 74.1L92.6 74.5L94.0 74.2L95.2 74.9L96.5 74.8L97.0 76.1L96.7 77.5L96.3 79.0L96.9 79.8L97.5 80.7L99.0 81.2L99.8 81.0L100.5 80.4L101.5 80.9L102.5 81.4L102.5 82.8L102.2 81.8L101.5 81.2L100.8 82.0L100.0 82.7L98.5 82.2L97.0 81.7L95.7 81.2L95.0 80.0L94.2 79.0L93.1 78.2L92.5 77.0L91.5 76.9L90.5 76.5L89.3 75.8L88.0 75.5L87.1 74.6L86.0 73.9L84.7 73.8L83.5 74.3L82.2 74.1L81.0 73.4L80.2 73.2L79.5 72.7L78.8 72.3L78.0 72.0L77.2 71.6L76.6 71.0L75.7 71.0L75.0 70.5L74.5 69.6L74.5 68.5L73.8 67.6L73.5 66.5L72.3 65.7L71.5 64.5L70.9 63.8L70.5 63.0L70.0 62.4L69.4 61.8L68.7 61.3L68.0 61.0L67.8 59.7L67.0 58.8L66.2 58.3L65.2 58.3L65.2 59.2L65.5 60.0L66.2 61.1L67.2 62.0L67.9 62.5L68.3 63.4L68.6 64.2L69.0 65.0L70.0 65.7L70.5 66.8L69.7 67.0L68.4 66.3L67.8 65.0L66.6 64.1L66.0 62.7L65.6 61.6L65.0 60.5L64.8 59.6L64.3 58.8L63.8 58.0L63.0 57.5L62.4 56.6L61.5 56.0L60.5 55.8L59.5 55.5L58.5 54.5L58.0 53.2L57.3 52.6L57.0 51.7L56.4 50.7L55.7 49.7L55.6 48.3L55.8 47.0L55.9 46.2L55.6 45.4L55.7 44.6L56.0 43.8L55.4 42.8L55.3 41.7L56.1 41.3L57.0 41.2L56.5 40.5L55.4 40.2L54.5 39.5L53.5 39.0L52.5 38.5L52.2 37.6L51.5 37.0L50.4 36.3L49.7 35.3L49.2 34.6L48.5 34.0L47.3 33.2L46.5 32.0L45.2 32.1L44.0 31.5L43.0 30.9L42.0 30.5L40.5 30.2L39.0 30.0L37.5 30.4L36.0 30.0L34.4 29.7L33.0 29.0L31.5 28.7L30.0 29.0L28.8 29.6L28.0 30.7L26.9 31.0L26.0 31.7L25.1 32.5L24.0 32.7L22.9 33.6L21.5 34.0L20.2 34.1L19.0 34.7L18.3 35.3L17.3 35.5L16.4 35.6L15.5 35.5L16.8 34.9L18.0 34.0L18.9 33.7L19.5 33.0L20.4 32.7L21.0 32.0L21.6 31.4L22.5 31.2L21.3 31.4L20.0 31.3L19.0 30.8L18.0 30.2L17.0 30.4L16.0 30.1L15.3 29.3L14.5 28.5L14.0 27.5L15.5 27.0L16.3 26.5L17.2 26.3L18.1 26.6L19.0 26.5L19.0 25.5L18.0 25.3L17.0 25.4L15.5 25.3L14.0 25.5L13.1 24.8L12.0 24.5M107.0 11.8L108.3 11.5L109.5 10.8L110.7 10.4L112.0 10.0L112.8 9.8L113.6 9.5L114.4 9.7L115.2 9.8L115.8 9.2L116.6 8.9L117.3 8.6L118.0 8.2L119.5 7.7L121.0 7.2L122.4 6.7L123.9 6.2L124.5 6.8L125.3 7.1L125.9 7.7L126.8 7.8L127.6 7.7L128.4 7.3L129.2 7.4L130.0 7.5L130.9 7.4L131.9 7.2L132.8 6.9L133.7 6.6L134.7 6.5L135.5 5.9L136.5 5.9L137.4 5.9L138.4 6.1L139.2 6.6L140.2 6.7L141.2 6.8L142.1 6.5L143.1 6.6L144.0 6.3L145.0 6.5L146.3 6.5L147.5 6.6L148.8 6.8L150.0 7.0L151.2 7.0L152.5 6.8L153.8 7.0L155.0 7.2L156.3 7.2L157.5 7.9L158.8 8.0L160.0 8.5L160.9 8.5L161.7 8.9L162.3 9.5L163.0 10.0L162.0 11.0L161.0 12.0L161.1 12.8L160.9 13.6L160.3 14.2L160.0 15.0L159.3 15.5L158.7 16.0L158.1 16.7L158.0 17.5L157.1 17.6L156.3 18.3L155.7 18.9L155.0 19.5L156.0 19.6L157.0 20.0L156.0 20.4L155.2 21.3L154.1 21.5L153.0 21.5L151.7 21.5L150.5 22.0L149.3 22.3L148.0 22.0L147.0 22.7L146.3 23.7L145.2 24.3L144.0 24.2L143.0 24.3L142.0 24.5L141.1 25.0L140.0 25.0L139.5 25.7L139.3 26.5L138.6 27.0L138.0 27.5L137.3 28.8L136.5 30.0L135.3 29.5L134.0 29.2L132.6 28.6L131.0 28.5L130.5 27.9L130.1 27.1L129.7 26.4L129.0 26.0L128.0 25.0L127.0 24.0L126.8 23.0L126.5 22.0L128.0 21.6L129.0 20.5L128.1 20.2L127.3 19.8L126.4 19.7L125.5 19.5L125.3 18.4L124.5 17.5L123.2 16.8L122.5 15.5L121.5 15.6L120.6 15.1L119.9 14.3L119.0 14.0L117.8 13.4L116.5 13.6L115.3 14.0L114.0 14.0L113.1 13.5L112.0 13.5L111.0 13.4L110.0 13.5L109.0 12.7L107.9 12.5L107.0 11.8M90.0 16.2L91.3 16.2L92.5 15.8L93.7 16.4L95.0 16.5L96.2 16.1L97.5 15.7L98.8 15.9L100.0 16.3L100.8 17.1L101.9 17.3L102.9 17.1L104.0 17.2L104.9 17.8L106.0 17.9L107.1 17.9L108.0 18.5L109.0 18.6L109.8 19.1L110.5 19.8L111.5 20.0L112.4 20.6L113.0 21.5L114.3 22.0L115.3 23.0L116.6 23.2L118.0 23.2L117.2 24.0L116.5 25.0L115.8 26.0L115.0 27.0L113.4 27.2L112.0 26.5L112.9 27.4L114.0 28.0L113.0 27.7L112.1 27.3L111.0 27.2L110.0 27.5L109.3 26.6L108.2 26.1L107.2 25.6L106.0 25.7L105.0 25.3L104.0 25.2L103.0 25.2L102.0 25.5L102.9 24.8L104.0 24.5L105.3 24.4L106.5 24.0L106.7 23.0L107.0 22.0L106.1 21.3L105.2 20.8L104.1 20.3L103.0 20.5L102.0 20.1L101.0 20.0L99.5 19.5L98.0 20.0L97.0 20.2L96.0 20.3L95.0 20.0L94.0 20.0L92.5 19.7L91.0 19.5L91.0 18.5L90.2 17.5L90.0 16.2M63.0 17.0L63.8 17.0L64.5 17.3L65.3 17.2L66.0 17.0L66.8 16.9L67.5 16.8L68.3 16.9L69.0 17.0L69.7 16.8L70.5 16.9L71.2 17.0L72.0 17.0L72.8 17.1L73.6 17.3L74.3 17.6L75.0 18.0L75.7 18.6L76.5 19.1L77.1 19.7L78.0 20.0L77.2 20.0L76.4 20.2L75.7 20.7L75.0 21.0L74.4 20.7L73.7 20.7L73.1 20.9L72.5 20.9L71.9 21.2L71.3 21.4L70.6 21.3L70.0 21.4L69.4 21.2L68.8 20.9L68.2 20.7L67.5 20.7L66.9 20.6L66.3 20.7L65.6 20.8L65.0 20.7L63.9 20.6L63.0 20.0L62.5 19.3L62.0 18.5L62.6 17.8L63.0 17.0M90.0 13.5L91.0 13.0L91.8 12.3L92.9 12.2L94.0 12.0L93.7 11.4L93.2 10.8L92.6 10.4L92.0 10.0L92.8 9.6L93.5 9.0L94.2 8.5L95.0 8.0L95.6 8.3L96.2 8.6L96.9 8.7L97.5 8.6L98.2 8.9L98.8 9.0L99.5 8.9L100.1 8.7L100.7 8.4L101.3 8.2L101.9 7.9L102.5 7.7L103.1 7.4L103.7 7.2L104.4 7.2L105.0 7.0L105.8 7.0L106.6 7.1L107.3 6.8L108.1 6.7L108.8 7.0L109.4 7.5L110.2 7.5L111.0 7.8L111.7 7.5L112.5 7.4L113.2 7.6L114.0 7.4L114.7 7.4L115.5 7.5L116.2 7.4L117.0 7.5L116.6 8.0L116.1 8.4L115.6 8.7L115.0 9.0L114.2 9.5L113.4 9.9L112.5 10.0L111.6 10.4L110.8 10.1L109.8 10.0L108.9 10.2L108.0 10.5L107.0 10.9L105.9 10.9L104.9 11.5L104.0 12.0L103.0 12.5L102.0 12.9L101.1 13.3L100.0 13.5L99.4 13.5L98.7 13.2L98.1 13.5L97.5 13.6L96.9 13.6L96.2 13.6L95.6 13.7L95.0 13.7L94.4 13.5L93.7 13.5L93.2 13.2L92.5 13.1L91.9 13.2L91.2 13.1L90.6 13.2L90.0 13.5M54.5 18.2L55.2 18.1L55.8 18.4L56.4 18.6L57.0 18.8L57.8 18.6L58.5 18.5L59.2 18.2L60.0 18.0L60.4 17.4L60.9 16.9L61.4 16.4L62.0 16.0L61.3 15.6L60.6 15.4L59.8 15.4L59.0 15.5L58.1 15.7L57.3 16.1L56.4 16.2L55.5 16.2L54.8 17.1L54.5 18.2M88.0 15.0L88.9 15.4L89.9 15.7L91.0 15.5L92.0 15.5L93.0 15.4L94.0 15.1L95.0 15.0L96.0 15.0L97.0 15.1L98.0 15.1L99.0 15.3L100.0 15.2L100.0 14.2L99.0 14.4L97.9 14.1L97.0 14.6L95.9 14.6L95.0 14.1L94.1 13.6L93.0 13.7L92.0 13.5L91.0 13.8L90.1 14.2L89.0 14.0L88.0 14.0L88.0 15.0M64.0 15.0L64.8 15.1L65.6 15.0L66.3 15.3L67.0 15.7L67.7 15.7L68.5 15.8L69.2 15.5L70.0 15.5L71.0 15.4L72.0 15.6L73.0 15.3L74.0 15.0L74.0 14.0L73.2 14.1L72.5 14.4L71.7 14.5L71.0 14.4L70.3 14.1L69.5 14.0L68.8 13.7L68.0 13.7L67.4 13.7L66.7 13.7L66.1 13.7L65.5 13.8L64.9 13.8L64.2 13.8L63.6 14.0L63.0 14.0L63.4 14.6L64.0 15.0M93.0 24.5L93.7 24.2L94.5 24.2L95.2 24.3L96.0 24.2L96.9 24.4L97.7 24.8L98.5 25.3L99.0 26.0L98.0 26.3L97.0 26.8L96.3 26.6L95.5 26.6L94.7 26.7L94.0 26.5L93.5 25.5L93.0 24.5M120.7 42.2L121.5 42.5L122.3 42.8L123.1 43.1L124.0 43.2L124.7 43.5L125.5 43.5L126.2 43.2L127.0 43.2L127.2 42.4L127.2 41.5L126.5 41.1L126.0 40.5L125.7 39.9L125.2 39.4L124.7 38.9L124.2 38.5L123.3 38.9L122.5 39.5L121.8 40.4L121.2 41.3L120.7 42.2M95.0 68.1L95.5 67.6L96.1 67.3L96.8 67.0L97.5 67.0L98.3 66.9L99.0 67.0L99.8 66.9L100.5 67.2L101.2 67.4L101.8 67.8L102.3 68.3L103.0 68.5L103.7 68.8L104.5 69.0L105.2 69.3L105.8 69.8L105.0 69.8L104.2 70.1L103.3 69.9L102.5 70.1L102.0 69.4L101.3 69.1L100.6 69.1L100.1 68.6L99.5 68.2L98.8 67.9L98.0 67.7L97.0 67.9L96.0 68.2L95.0 68.1M105.5 71.6L105.9 71.1L106.4 70.7L107.0 70.5L107.5 70.1L108.1 70.1L108.8 70.1L109.4 70.1L110.0 70.2L110.8 70.8L111.6 71.4L110.5 71.4L109.5 71.8L108.7 71.7L108.0 71.9L107.4 71.9L106.8 71.6L106.1 71.6L105.5 71.6M101.7 71.7L102.7 71.9L103.7 71.8L103.0 72.2L102.3 72.1L101.7 71.7M112.8 71.6L113.6 71.5L114.4 71.7L113.5 72.1L112.8 71.6M156.0 24.5L157.0 24.1L158.0 23.6L159.0 24.0L160.0 24.0L161.0 24.1L162.0 23.8L162.7 24.0L163.5 23.9L164.3 23.9L165.0 23.7L165.6 24.4L166.4 25.0L165.7 25.4L165.0 25.7L164.2 26.2L163.3 26.5L162.4 26.5L161.5 26.6L160.6 26.4L159.8 26.3L158.9 26.1L158.0 26.1L158.0 25.2L157.0 24.8L156.0 24.5M102.5 81.4L103.8 80.6L104.5 79.2L105.8 79.1L107.0 78.7L107.6 78.0L108.5 77.7L108.3 79.2L109.3 78.9L110.0 78.2L111.0 78.8L112.0 79.4L113.0 79.2L114.0 79.4L115.0 79.7L116.0 79.7L117.0 79.6L118.0 79.3L118.8 80.6L120.0 81.5L120.6 82.1L121.2 82.7L122.0 83.0L122.5 83.7L123.4 83.4L124.3 83.6L125.1 84.1L126.0 84.2L127.1 85.2L128.5 85.5L129.2 86.1L129.5 86.9L129.7 87.7L130.0 88.5L129.5 90.0L130.8 90.3L132.0 90.8L132.7 91.3L133.4 91.7L134.2 91.4L135.0 91.6L136.1 91.8L137.0 92.5L138.5 92.4L140.0 92.9L141.5 93.3L142.5 94.5L143.6 95.0L144.8 95.2L144.7 96.4L145.2 97.5L144.6 98.4L144.5 99.5L143.5 100.5L142.5 101.5L141.9 102.6L141.0 103.5L141.4 105.0L141.0 106.5L140.8 107.8L140.3 109.0L139.8 110.5L139.0 111.8L138.0 112.9L136.8 113.3L135.5 113.2L134.5 113.7L133.5 114.2L132.5 115.1L131.5 116.0L131.0 117.2L131.3 118.5L130.6 119.8L129.5 120.8L128.5 121.5L127.8 122.5L127.4 123.4L126.5 124.0L125.8 124.5L125.0 124.9L124.0 124.6L123.0 124.5L121.7 124.0L122.0 125.3L122.8 126.3L122.3 127.2L122.2 128.2L121.3 128.6L120.4 128.8L119.4 128.6L118.5 129.0L117.9 129.8L117.7 130.8L116.4 130.9L115.0 131.0L115.4 131.7L115.7 132.5L115.1 133.5L114.7 134.5L113.5 135.1L112.5 136.0L113.4 136.7L114.2 137.5L113.4 137.9L112.8 138.4L112.5 139.2L112.2 140.0L111.8 140.9L111.0 141.5L111.6 142.5L111.8 143.5L113.0 144.0L114.0 144.8L112.8 145.4L111.5 145.3L110.3 144.9L109.0 144.5L107.9 143.5L106.5 143.0L105.9 141.9L105.0 141.0L104.3 139.6L104.5 138.0L105.1 136.7L106.0 135.5L106.6 134.8L106.7 133.8L106.9 132.9L107.0 132.0L106.5 130.8L106.2 129.5L106.5 128.3L106.7 127.0L107.1 126.3L107.6 125.6L107.6 124.7L108.0 124.0L108.5 123.2L108.6 122.3L108.6 121.4L108.5 120.5L108.6 119.6L108.9 118.8L109.2 117.9L109.2 117.0L109.0 116.0L109.1 115.0L109.4 114.0L109.7 113.0L109.6 111.8L110.2 110.8L110.1 109.6L109.8 108.5L108.7 107.9L108.0 107.0L107.4 106.3L106.6 105.9L105.8 105.7L105.0 105.3L104.5 104.3L103.7 103.5L102.8 102.7L102.5 101.5L102.3 100.7L101.8 100.0L101.5 99.2L101.0 98.5L100.2 97.2L99.2 96.0L98.8 94.5L99.2 93.7L99.8 93.0L99.2 92.1L99.2 91.0L99.8 90.3L100.0 89.5L101.2 88.5L101.9 87.5L102.5 86.5L102.8 85.5L102.7 84.5L102.5 83.0L102.5 81.4M119.0 141.8L119.8 141.7L120.5 141.3L121.2 141.5L122.0 141.4L121.5 142.3L120.5 142.1L119.5 142.3L119.0 141.8M174.2 54.2L175.2 54.2L176.1 54.6L177.1 54.5L178.0 54.8L178.6 54.1L179.4 53.9L180.1 53.5L181.0 53.5L182.0 53.7L183.0 53.6L184.0 53.1L185.0 53.2L186.1 53.2L187.0 52.7L188.0 52.6L189.0 52.8L190.0 53.0L191.0 53.0L190.5 54.2L190.3 55.5L190.8 56.2L191.5 56.8L192.2 57.5L193.2 57.6L194.1 57.8L195.0 57.7L196.2 58.6L197.5 59.2L198.7 58.7L200.0 59.0L200.0 57.5L201.5 57.8L203.0 57.4L204.1 57.6L205.0 58.4L205.9 58.9L206.9 59.1L208.0 58.9L209.0 59.1L209.9 58.6L211.0 58.5L212.5 58.8L213.4 58.8L214.2 58.7L214.2 59.7L214.8 60.5L214.5 61.3L214.2 62.2L213.5 61.5L213.1 60.8L212.6 60.1L213.3 61.0L213.5 62.2L213.7 63.3L214.1 64.3L215.0 65.0L215.5 66.0L215.9 67.5L217.0 68.5L217.1 69.9L217.3 71.2L218.6 72.0L219.5 73.2L219.8 74.7L220.8 75.5L221.5 76.5L222.2 77.2L223.2 77.5L223.3 78.5L224.5 79.5L225.9 79.5L227.0 78.8L228.1 78.7L229.2 79.1L230.3 78.8L231.2 78.2L231.0 79.6L230.9 80.5L230.5 81.2L229.9 81.8L229.5 82.5L229.2 83.3L228.5 83.9L228.3 84.7L228.0 85.5L226.8 86.4L226.0 87.7L225.4 88.2L224.9 88.9L224.1 89.2L223.5 89.7L222.2 90.4L221.5 91.8L220.9 93.0L220.0 94.0L219.8 95.4L219.0 96.5L219.4 97.7L219.5 99.0L220.3 99.9L220.5 101.0L220.1 101.8L220.0 102.8L220.3 103.6L220.6 104.5L220.3 105.7L219.5 106.5L218.5 107.6L217.0 108.0L215.9 108.9L215.0 110.0L214.9 110.9L215.0 111.8L215.2 112.6L215.5 113.5L214.9 114.1L214.5 114.8L213.8 115.3L213.0 115.5L213.1 116.5L212.8 117.5L212.4 118.6L211.5 119.5L210.9 120.5L210.0 121.3L209.3 121.8L208.8 122.4L208.1 122.8L207.5 123.3L206.5 123.6L205.5 124.0L204.0 124.3L202.5 124.0L201.1 124.1L200.0 124.8L199.3 124.3L198.4 124.2L198.1 123.1L198.2 122.0L197.8 120.7L197.0 119.5L196.6 118.0L195.5 117.0L195.5 115.9L195.6 114.9L195.2 113.9L194.5 113.0L193.7 112.5L193.3 111.7L192.9 110.9L193.0 110.0L192.6 108.7L191.8 107.5L192.4 106.8L192.6 105.8L192.6 104.9L192.5 104.0L192.7 103.2L192.9 102.4L193.4 101.8L193.7 101.0L193.4 99.7L193.0 98.5L192.5 97.3L192.2 96.0L191.8 94.5L191.0 93.9L190.4 93.1L189.7 92.4L189.3 91.5L189.3 90.2L189.5 89.0L189.9 87.9L189.7 86.7L188.7 85.5L187.6 85.8L186.5 85.7L185.6 84.6L184.5 83.7L183.2 83.8L182.0 83.7L181.1 84.1L180.2 84.2L179.3 84.4L178.5 85.0L177.3 84.7L176.0 84.8L175.1 84.7L174.2 84.9L173.4 85.5L172.5 85.6L171.5 85.0L170.5 84.2L169.6 83.5L168.5 83.1L167.7 82.2L166.8 81.4L165.7 80.6L165.2 79.2L164.2 78.5L163.3 77.7L163.1 76.4L162.5 75.3L162.8 74.3L163.5 73.5L163.5 72.2L163.8 71.0L163.1 70.1L163.0 69.0L163.9 67.7L164.0 66.2L164.6 65.2L165.2 64.2L165.9 63.1L167.0 62.3L168.1 61.2L169.5 60.7L169.6 59.6L170.3 58.8L171.2 57.9L171.5 56.7L172.6 56.2L173.5 55.5L174.2 54.2M229.3 102.2L229.2 103.1L229.4 104.0L230.1 104.6L230.3 105.5L230.0 106.5L229.5 107.5L229.4 108.4L229.5 109.4L229.2 110.3L228.5 111.0L227.9 111.9L227.7 113.0L227.5 114.0L227.0 115.0L226.1 115.5L225.0 115.5L224.6 114.3L223.7 113.5L223.5 112.5L223.5 111.5L223.9 110.6L224.4 109.8L224.4 108.6L224.0 107.5L224.6 106.8L225.0 106.0L226.1 105.7L227.0 105.0L227.6 104.3L228.0 103.5L228.8 103.0L229.3 102.2M171.0 53.0L170.7 52.2L170.5 51.3L170.7 50.1L171.2 49.0L171.2 47.9L170.8 46.8L172.0 46.3L172.8 46.7L173.7 47.0L174.6 46.7L175.5 46.6L176.8 46.9L178.2 46.6L178.8 45.4L178.8 44.0L177.8 42.8L176.7 42.4L175.5 42.2L175.4 41.5L176.9 41.7L178.4 41.3L178.2 40.3L178.8 40.5L180.2 40.5L180.8 40.0L181.6 39.7L181.6 39.1L182.5 38.8L183.5 38.6L184.2 37.8L184.8 37.0L186.0 37.1L187.0 36.5L188.5 36.2L188.6 34.7L188.1 33.2L189.4 33.1L190.5 32.3L190.3 33.5L190.8 34.5L189.8 35.2L191.0 36.0L192.5 35.6L193.3 35.9L194.2 36.1L195.3 35.8L196.5 35.5L197.5 35.3L198.5 35.3L199.8 35.6L201.0 34.7L201.2 33.9L201.0 33.0L201.8 32.8L202.5 32.3L204.0 32.8L204.3 31.7L203.5 30.8L204.7 30.4L206.0 30.4L207.0 30.4L208.0 30.3L209.0 30.3L210.0 30.1L209.3 29.7L208.5 29.4L207.3 29.9L206.0 29.6L205.2 29.7L204.4 29.7L203.6 29.8L202.8 30.1L202.1 29.6L201.3 29.2L201.2 28.3L201.4 27.5L202.1 26.7L202.6 25.9L203.6 25.7L204.5 25.2L205.3 24.5L204.4 24.5L203.5 24.2L202.0 24.5L201.2 25.7L200.0 26.0L199.0 26.8L197.9 27.2L197.3 28.2L197.2 29.3L198.1 29.5L198.8 30.2L197.8 30.8L196.8 31.4L196.8 32.2L196.5 33.0L196.0 33.8L195.1 34.1L194.3 34.5L193.0 34.6L192.8 33.7L192.1 33.0L191.8 32.0L191.0 31.0L190.5 30.7L189.5 31.2L188.5 31.8L187.0 32.0L186.4 31.3L185.5 31.0L185.6 29.9L185.0 29.0L185.2 28.0L186.1 27.5L187.0 27.0L188.4 26.5L189.8 26.2L190.5 25.4L191.5 25.0L192.4 24.4L193.0 23.5L193.7 22.7L194.5 22.0L195.5 21.7L196.5 21.2L197.5 20.7L198.5 20.3L200.1 20.4L201.5 19.8L202.4 19.7L203.3 19.6L204.1 19.1L205.0 19.0L206.5 19.4L208.0 19.0L209.5 19.4L211.0 19.7L210.0 20.3L211.5 20.2L213.0 20.6L213.9 20.6L214.8 20.3L215.6 20.8L216.5 21.0L217.7 20.7L219.0 21.1L220.0 21.8L221.0 22.5L221.0 23.8L219.7 23.8L218.5 23.1L217.2 23.4L216.0 23.8L215.1 24.4L214.0 24.5L215.1 25.1L216.0 25.8L216.9 25.7L217.7 25.2L218.6 25.2L219.5 25.4L220.5 24.2L222.0 24.3L223.5 23.8L223.9 22.9L224.2 22.0L225.3 21.6L226.5 21.8L227.4 21.9L228.2 21.7L229.0 21.4L229.7 21.0L230.5 21.2L231.4 21.2L232.1 21.6L233.0 21.5L234.0 21.7L235.0 21.5L236.0 21.1L237.0 21.2L238.0 21.6L239.0 21.5L239.7 21.0L240.5 20.5L241.5 20.7L242.5 20.3L243.6 20.3L244.5 20.8L245.7 21.3L247.0 21.2L247.7 20.3L248.5 19.5L247.6 19.3L246.8 19.0L247.6 18.2L248.5 17.5L250.0 17.0L251.2 17.4L252.5 17.5L252.0 19.0L252.3 20.3L252.8 21.5L253.8 21.5L254.1 20.0L254.5 18.5L254.0 17.7L253.5 17.0L255.0 17.2L256.0 17.5L257.0 18.0L257.9 17.9L258.8 17.8L259.7 17.9L260.5 17.5L260.8 16.5L262.2 16.3L263.6 16.1L265.1 16.3L266.5 16.1L267.0 15.0L267.8 14.6L268.6 14.1L269.5 14.2L270.4 13.9L271.3 14.2L272.2 14.0L273.1 14.2L274.0 14.0L275.3 14.3L276.5 13.9L277.8 13.8L279.0 13.6L280.3 13.6L281.5 12.9L282.7 12.5L284.0 12.3L284.8 12.6L285.4 13.2L286.2 13.1L287.0 13.3L288.2 13.7L289.5 13.4L290.8 13.4L292.0 13.5L292.7 14.1L293.5 14.5L292.6 14.9L292.0 15.8L291.0 16.1L290.0 16.0L291.5 15.7L293.0 16.3L294.4 15.9L295.8 16.0L297.1 16.5L298.5 16.5L299.9 16.0L301.2 15.6L302.7 15.5L304.0 16.3L304.8 16.6L305.7 16.5L306.4 16.9L307.0 17.5L308.5 17.9L309.5 19.0L310.5 19.4L311.5 19.2L312.3 18.9L313.0 18.5L314.0 18.6L315.0 18.2L316.0 18.1L317.0 18.5L318.6 18.2L320.0 17.5L321.6 17.6L323.0 17.0L324.5 17.3L326.0 17.7L327.1 17.8L328.1 17.6L329.0 18.2L330.0 18.5L331.5 18.8L333.0 19.1L334.2 19.6L335.5 19.4L336.8 19.5L338.0 19.1L339.1 20.0L340.5 20.4L341.6 20.0L342.8 19.8L344.0 19.9L345.0 20.5L345.9 20.4L346.8 20.6L347.7 20.5L348.5 20.0L349.8 20.5L351.0 21.0L352.3 20.8L353.5 20.4L354.7 20.0L356.0 20.2L357.0 20.3L358.0 20.5L359.1 20.5L360.0 21.0L360.1 22.1L359.5 23.0L359.8 24.0L360.0 25.0L359.4 26.2L359.0 27.5L357.7 27.7L356.6 28.3L355.3 28.7L354.0 28.2L353.1 28.6L352.3 29.2L351.5 29.7L350.5 30.0L349.4 29.8L348.2 30.0L347.1 30.3L346.0 30.2L345.2 30.6L344.2 30.7L343.5 31.2L343.0 32.0L342.8 33.0L342.5 34.0L342.1 34.9L341.7 35.8L340.9 36.4L340.0 36.8L339.1 37.4L338.3 38.2L337.4 38.3L336.7 39.0L336.5 37.9L335.8 37.0L336.2 35.5L336.0 34.0L336.9 32.8L338.0 31.7L338.6 31.2L339.3 30.7L339.8 29.9L340.5 29.5L341.3 29.5L342.1 29.3L342.8 28.7L343.5 28.3L342.6 27.9L341.6 28.1L340.8 28.5L340.0 29.0L339.2 28.6L338.3 28.3L337.4 28.2L336.5 28.5L335.6 29.6L334.5 30.5L333.6 30.4L332.8 30.7L331.9 30.8L331.0 30.7L329.8 30.4L328.5 30.6L327.2 31.0L326.0 30.6L325.0 30.3L324.0 30.5L322.9 30.5L322.0 31.0L321.2 31.9L320.1 32.4L319.2 33.2L318.0 33.5L317.2 33.8L316.5 34.3L315.7 34.6L315.2 35.3L316.6 35.6L318.0 36.2L319.3 36.6L320.5 37.0L321.2 38.0L320.8 39.0L320.5 40.0L320.4 41.0L320.2 42.0L319.3 42.7L318.5 43.5L318.1 44.3L317.6 44.9L316.7 45.2L316.0 45.7L315.0 46.0L314.4 46.8L313.5 46.9L312.5 47.0L311.6 47.2L310.8 47.5L310.1 47.9L309.5 48.5L309.5 49.5L308.4 49.7L307.5 50.5L308.5 51.5L309.2 52.7L309.5 54.0L309.0 54.9L307.6 54.9L306.5 55.6L306.4 54.6L306.3 53.5L306.8 52.5L305.8 52.5L305.0 52.0L305.2 50.5L304.2 50.0L302.7 50.2L301.5 51.0L301.8 50.1L301.8 49.2L301.1 49.7L300.5 50.1L299.8 50.5L299.0 50.8L297.7 51.2L298.4 51.7L298.8 52.5L299.8 52.6L300.8 52.2L301.6 52.6L302.5 52.8L301.4 53.2L300.5 53.8L299.7 54.2L299.3 55.0L300.3 55.8L300.8 57.0L301.4 57.6L301.8 58.3L301.9 59.1L301.8 60.0L301.4 60.8L301.5 61.7L300.9 62.8L300.0 63.5L299.4 64.5L298.5 65.3L297.7 65.9L297.0 66.5L295.7 67.3L294.2 67.6L293.1 67.9L292.0 68.3L290.5 68.8L289.8 69.7L290.5 69.8L289.6 68.9L288.5 68.3L287.4 68.7L286.7 69.5L286.1 70.2L285.8 71.0L286.1 72.2L287.0 73.0L287.8 73.8L288.7 74.5L289.2 75.7L289.3 77.0L289.0 78.5L288.1 79.2L287.0 79.6L286.2 80.7L285.0 81.3L285.0 80.0L284.2 79.8L283.5 79.4L283.1 78.6L282.5 78.0L281.7 77.7L281.0 77.3L280.3 76.5L280.0 77.7L279.6 78.6L279.3 79.5L279.8 80.7L280.3 81.5L280.5 82.5L281.7 83.5L282.4 84.0L283.0 84.5L283.5 86.0L283.7 87.4L284.2 88.6L283.4 88.7L282.3 88.0L281.3 87.2L280.4 86.0L280.4 84.5L280.1 83.7L279.5 83.0L278.3 82.0L278.2 81.0L278.5 80.0L278.9 79.0L278.7 78.0L278.4 76.7L277.7 75.5L277.8 74.5L277.6 73.5L276.8 73.5L276.0 73.3L275.3 73.9L274.5 74.0L274.2 72.8L274.3 71.5L273.7 70.9L273.4 70.1L272.9 69.5L272.2 69.0L271.8 67.6L270.5 67.7L269.5 67.8L268.5 68.2L267.9 68.8L267.0 69.0L266.5 70.0L265.7 70.6L264.8 71.0L264.3 71.7L263.7 72.3L263.1 73.0L262.3 73.3L261.2 73.9L260.2 74.5L260.4 75.6L260.2 76.7L260.2 78.2L259.8 79.6L259.0 80.7L258.0 81.1L257.5 81.9L256.5 81.0L255.8 79.8L255.7 78.5L255.3 77.7L254.8 77.0L254.4 76.0L254.3 75.0L253.7 73.8L253.3 72.5L253.2 71.6L252.8 70.8L252.9 69.8L252.6 68.8L252.0 69.0L250.8 69.2L249.8 68.5L249.0 67.7L250.3 67.1L249.5 66.6L248.5 66.6L247.7 66.1L247.3 65.3L246.5 64.6L245.2 64.4L244.0 64.7L242.7 64.4L241.5 64.9L240.2 64.4L238.8 64.5L237.8 64.1L237.2 63.2L236.3 62.9L235.4 63.1L234.5 63.4L233.6 62.7L232.5 62.5L231.9 61.6L231.0 61.2L230.7 60.4L230.0 59.8L228.7 59.7L228.0 60.4L228.7 61.7L229.4 62.4L230.0 63.3L230.2 64.5L231.0 64.0L231.6 65.0L231.5 65.7L232.8 65.7L234.0 65.9L234.9 64.8L236.0 64.0L236.5 65.5L237.7 65.8L238.7 66.5L239.1 67.3L239.8 67.7L239.2 68.7L238.5 69.6L238.0 70.3L237.7 71.0L237.2 71.7L236.5 72.1L235.8 72.7L235.0 73.0L234.2 73.4L233.7 74.1L232.9 74.4L232.0 74.4L231.5 75.2L230.6 75.6L229.6 75.6L228.7 76.0L227.7 75.9L226.7 76.3L225.7 76.5L225.0 77.2L223.5 77.3L222.9 76.3L222.8 75.2L222.5 74.4L222.6 73.5L221.7 72.3L221.0 71.0L219.9 70.0L219.2 68.7L218.8 67.6L218.5 66.5L218.0 65.6L217.2 64.8L216.6 63.4L215.5 62.5L215.4 61.5L214.9 60.6L214.4 59.7L214.3 58.7L214.8 57.9L215.0 57.0L215.5 56.0L215.8 55.0L215.9 54.1L216.0 53.2L214.9 53.1L214.0 53.7L212.5 53.9L211.6 53.4L210.6 53.2L209.8 53.3L209.0 53.7L208.1 53.5L207.3 53.1L206.9 52.4L206.3 51.7L206.8 50.5L206.2 49.8L206.2 49.1L205.1 49.0L204.0 49.1L203.5 49.8L202.8 49.5L203.0 50.8L204.0 52.0L203.0 52.5L203.2 53.5L202.0 53.4L201.3 52.3L201.0 51.0L200.0 50.5L199.5 49.5L199.5 48.2L198.5 47.5L197.2 47.0L196.0 46.5L195.0 45.5L194.0 44.8L193.7 44.4L192.4 44.7L192.4 45.8L193.7 46.5L194.5 47.8L196.0 48.1L196.2 48.6L197.5 48.9L198.5 49.8L198.3 50.2L197.0 49.5L196.6 50.4L197.1 51.0L196.1 52.0L195.7 52.0L196.0 51.0L195.6 50.0L194.3 49.2L193.4 48.9L192.5 48.4L191.9 47.7L191.0 47.5L190.3 46.5L189.6 46.0L188.8 45.6L187.5 46.2L186.2 46.9L185.4 46.7L184.5 46.6L183.2 46.8L183.2 48.0L182.1 48.7L180.8 49.0L180.2 49.7L179.7 50.5L180.2 51.2L179.3 52.3L178.6 52.8L177.8 53.2L176.7 53.3L175.5 53.4L174.5 54.0L173.7 53.3L173.0 52.8L172.0 52.7L171.0 53.0M0.0 21.0L0.8 21.2L1.6 21.1L2.3 21.3L3.0 21.7L3.8 22.4L4.9 22.7L5.9 23.0L7.0 23.0L7.8 22.9L8.6 23.2L9.2 23.7L10.0 23.8L9.5 24.1L9.0 24.5L8.5 24.9L8.0 25.2L7.3 25.1L6.5 25.0L5.7 25.0L5.0 25.2L3.9 25.0L3.0 24.5L2.2 24.7L1.5 24.6L0.7 24.7L0.0 25.0M209.0 48.8L210.2 49.0L211.3 48.8L212.3 48.3L213.5 48.0L215.0 48.0L215.7 48.4L216.5 48.7L217.5 49.1L218.5 49.0L220.0 48.6L221.5 48.5L221.5 47.2L220.6 46.4L219.5 46.2L218.4 45.9L217.5 45.2L217.6 44.3L218.0 43.5L219.2 42.8L218.4 43.2L217.5 43.2L216.4 43.5L215.2 43.7L215.8 44.3L216.5 44.7L215.3 45.0L214.4 45.2L213.5 45.5L212.5 44.5L213.5 43.8L212.5 43.5L211.5 43.4L210.8 44.0L210.0 44.2L209.6 44.8L208.7 46.0L207.8 47.3L208.2 48.4L209.0 48.8M230.0 53.0L230.9 53.0L231.8 53.5L232.7 53.5L233.5 53.0L234.0 51.8L234.0 50.5L233.6 49.7L233.0 49.0L233.0 48.0L232.5 47.2L231.5 46.7L231.2 45.3L232.0 44.8L233.0 44.7L233.0 43.3L231.7 43.3L230.5 43.2L229.5 43.5L228.5 44.0L227.9 44.8L227.0 45.2L227.1 46.1L227.5 47.0L228.3 47.8L229.2 48.5L229.5 49.7L229.0 51.0L229.0 52.3L230.0 53.0M174.5 39.9L175.5 39.8L176.5 39.7L177.7 39.3L179.0 39.3L180.1 38.9L181.3 38.8L181.7 37.3L180.3 37.0L179.8 36.0L179.1 35.6L178.5 35.0L178.0 34.0L177.0 34.0L177.6 33.2L178.0 32.4L176.5 32.3L176.8 31.4L175.9 31.3L175.0 31.4L174.0 32.5L174.4 33.7L175.2 34.5L175.1 35.2L176.0 35.3L176.8 35.1L177.0 36.2L176.7 36.7L175.5 36.7L175.8 37.5L174.8 38.2L175.7 38.2L176.5 38.5L177.0 38.8L175.7 38.9L174.5 39.9M170.0 38.4L171.0 38.3L172.0 38.3L172.8 38.0L173.7 37.8L174.0 37.2L174.0 36.5L174.5 35.5L174.0 35.1L173.5 34.8L172.7 34.9L171.8 34.8L170.9 35.3L170.0 35.8L170.5 36.8L170.1 37.6L170.0 38.4M191.0 10.5L192.0 10.2L193.0 10.3L194.0 10.3L195.0 10.0L195.6 10.1L196.3 10.2L196.9 10.1L197.5 10.2L198.2 10.3L198.8 10.2L199.4 10.0L200.0 9.7L200.9 9.9L201.7 9.9L202.6 10.1L203.5 10.1L204.4 10.0L205.3 10.3L206.1 10.1L207.0 10.0L206.3 10.1L205.7 10.4L205.0 10.3L204.4 10.3L203.9 10.8L203.3 11.2L202.7 11.4L202.0 11.5L200.9 11.7L200.0 12.2L199.0 12.7L198.0 13.0L197.3 12.7L196.5 12.6L195.8 12.6L195.0 12.7L194.1 12.0L193.0 11.8L192.0 11.1L191.0 10.5M231.5 18.5L232.1 17.6L233.0 17.0L233.7 16.4L234.4 15.9L235.2 15.4L236.0 15.0L237.1 14.9L238.0 14.4L239.0 14.1L240.0 13.8L241.0 13.4L242.0 13.5L243.0 13.6L244.0 13.6L245.0 13.3L246.0 13.2L247.0 13.1L248.0 13.0L246.9 13.5L246.0 14.2L245.4 14.7L244.6 15.0L243.9 15.1L243.1 15.2L242.3 15.4L241.6 15.6L240.8 15.6L240.0 15.5L239.2 15.9L238.5 16.5L237.8 17.0L237.0 17.5L236.3 18.3L236.0 19.2L235.4 19.3L234.8 19.2L234.1 19.2L233.5 19.2L232.5 18.9L231.5 18.5M275.0 11.0L275.7 10.9L276.3 10.7L277.0 10.5L277.6 10.4L278.2 10.1L278.8 9.9L279.3 9.4L280.0 9.2L280.6 9.3L281.2 9.6L281.8 10.0L282.4 10.2L283.1 10.2L283.7 10.4L284.3 10.6L285.0 10.5L284.0 11.1L283.0 11.7L282.4 11.9L281.7 11.7L281.1 11.6L280.5 11.4L279.8 11.5L279.2 11.5L278.6 11.8L278.0 12.0L277.2 11.8L276.4 11.7L275.7 11.4L275.0 11.0M317.0 14.5L317.6 14.4L318.2 14.2L318.8 13.9L319.5 13.9L320.1 13.9L320.7 14.1L321.4 14.1L322.0 14.0L322.8 14.0L323.5 14.3L324.3 14.2L325.0 14.0L325.7 14.4L326.4 14.7L327.2 14.7L328.0 14.7L328.9 15.2L330.0 15.2L329.1 15.2L328.3 15.1L327.4 15.0L326.5 15.1L325.6 14.9L324.7 14.9L323.9 15.2L323.0 15.2L322.4 15.3L321.8 15.5L321.2 15.7L320.5 15.8L319.9 15.5L319.3 15.5L318.6 15.3L318.0 15.3L317.4 15.0L317.0 14.5M358.5 18.8L359.2 18.5L360.0 18.5L360.0 19.1L359.2 19.0L358.5 18.8M192.5 52.0L193.2 51.9L194.0 51.9L194.8 52.0L195.5 51.8L195.5 52.5L195.2 53.2L194.5 53.0L193.9 52.7L193.2 52.7L192.5 52.4L192.5 52.0M188.3 49.0L188.9 48.9L189.6 49.0L189.6 49.9L189.6 50.8L188.5 51.0L188.5 50.0L188.3 49.0M188.6 47.5L189.5 47.0L189.5 47.8L189.5 48.5L188.7 48.4L188.6 47.5M203.6 54.5L204.3 54.6L204.9 54.9L205.5 54.9L206.2 54.8L205.4 55.0L204.5 55.0L203.6 54.5M212.3 55.0L213.4 54.8L214.5 54.4L213.8 55.3L213.1 55.1L212.3 55.0M310.2 58.7L311.5 58.5L311.8 57.7L311.8 56.8L312.5 55.8L313.8 55.7L315.0 55.4L315.9 55.6L316.8 55.5L317.8 55.7L318.8 55.3L320.0 54.8L320.8 54.0L320.7 52.9L321.0 51.8L321.6 51.1L322.0 50.2L321.8 49.4L321.3 48.7L320.2 49.0L320.0 50.0L319.8 51.2L319.1 51.9L318.5 52.7L317.0 52.8L316.5 53.7L315.8 54.4L314.4 54.4L313.0 54.5L312.0 55.0L311.0 55.6L310.0 56.5L309.8 57.3L310.2 58.7M312.5 56.2L313.5 55.9L314.5 55.8L314.3 56.6L313.7 56.9L313.0 57.2L312.5 56.2M320.0 48.5L320.6 48.1L321.2 47.7L322.2 47.6L323.2 48.0L323.8 47.7L324.2 47.2L324.8 46.8L325.5 46.7L324.8 46.5L324.3 46.0L323.5 45.8L322.8 45.3L322.4 44.9L321.8 44.6L321.8 45.6L321.5 46.5L320.9 46.7L320.3 46.8L320.0 47.6L320.0 48.5M322.0 44.0L322.8 43.8L323.5 43.2L323.0 42.2L323.0 41.0L324.0 40.7L323.5 39.6L323.2 38.5L323.3 37.8L323.3 37.0L323.2 36.3L322.8 35.7L322.0 36.5L321.7 37.5L321.8 38.5L321.9 39.3L321.8 40.0L321.9 40.8L322.2 41.5L322.2 42.1L321.9 42.7L322.0 43.4L322.0 44.0M300.2 67.0L300.8 66.1L301.0 65.0L302.0 65.0L301.9 65.8L301.5 66.5L301.2 67.3L300.8 68.0L300.2 67.0M288.7 70.8L289.4 70.2L290.3 69.9L291.0 70.3L290.7 70.9L290.3 71.5L289.3 71.8L288.7 70.8M259.8 80.4L260.5 80.8L261.0 81.5L261.5 82.0L261.8 82.7L261.3 83.7L260.2 84.0L259.9 83.3L259.8 82.5L260.0 81.5L259.8 80.4M300.5 71.5L301.4 71.4L302.2 71.5L302.1 72.5L302.0 73.5L301.9 74.6L301.5 75.7L302.2 75.9L302.7 76.4L303.4 76.7L304.0 77.0L303.5 77.3L303.1 76.7L302.5 76.2L301.7 76.2L301.0 76.3L300.7 75.7L300.3 75.2L300.2 74.5L300.0 73.8L300.3 73.3L300.5 72.7L300.6 72.1L300.5 71.5M302.0 78.2L302.6 78.4L303.2 78.5L303.8 78.2L304.4 78.0L304.9 77.7L305.5 77.5L305.3 78.5L305.5 79.5L304.8 79.8L304.0 79.8L303.5 80.3L303.0 80.8L302.6 80.2L302.3 79.5L302.1 78.9L302.0 78.2M297.2 81.6L297.7 80.9L298.2 80.2L298.8 79.7L299.5 79.2L299.3 78.7L298.7 79.4L298.4 80.2L297.7 80.7L297.0 81.2L297.2 81.6M302.0 83.0L302.7 82.2L303.5 81.5L304.6 81.1L305.4 80.3L306.0 81.1L306.5 82.0L306.4 82.9L306.2 83.7L305.5 84.2L304.7 84.0L304.0 83.5L303.8 82.9L303.5 82.4L302.8 82.9L302.0 83.0M289.0 88.5L289.5 88.0L291.0 88.4L291.5 87.2L293.0 86.8L293.7 86.0L294.5 85.3L295.3 84.3L296.0 83.2L297.0 83.0L297.5 84.0L298.4 84.2L299.0 84.8L298.0 85.7L297.8 87.0L298.0 88.5L297.5 89.5L296.7 90.4L296.5 91.5L296.5 92.5L296.3 93.5L295.4 93.8L294.5 94.0L293.8 93.5L293.0 93.2L291.5 93.2L290.2 92.8L290.0 91.3L289.3 90.8L289.0 90.0L289.0 88.5M275.3 84.4L276.4 84.7L277.5 84.8L278.1 85.4L278.7 86.0L279.5 86.5L280.0 87.2L280.7 88.1L281.5 88.9L282.5 89.5L283.5 90.0L284.0 91.0L284.5 92.0L285.4 92.4L286.0 93.2L285.7 94.5L285.8 95.8L284.5 95.8L283.2 95.1L282.2 94.0L281.4 92.9L280.5 92.0L279.7 90.9L279.0 89.7L278.3 88.3L277.2 87.2L276.5 86.6L276.2 85.8L275.7 85.1L275.3 84.4M285.2 96.8L285.9 96.3L286.8 96.0L287.6 96.4L288.5 96.6L289.7 96.6L290.8 96.4L291.8 96.7L292.8 96.9L293.7 97.3L294.5 97.8L294.3 98.6L293.6 98.7L292.9 98.5L292.2 98.3L291.5 98.3L290.7 98.4L290.0 98.2L289.2 98.0L288.5 97.8L287.5 97.4L286.5 97.4L285.9 97.0L285.2 96.8M295.5 98.3L296.2 98.5L297.0 98.4L298.0 98.6L299.0 98.5L299.0 98.8L298.4 99.0L297.8 99.2L297.1 99.1L296.5 99.0L296.0 98.7L295.5 98.3M299.8 98.5L300.5 98.3L301.3 98.1L302.0 98.2L302.8 98.3L303.0 98.7L302.3 98.9L301.5 98.9L300.8 98.9L300.0 98.9L299.8 98.5M303.5 100.3L304.2 99.6L305.0 99.0L306.1 98.9L307.2 98.4L306.6 99.0L306.0 99.5L305.0 99.9L304.0 100.3L303.5 100.3M299.5 95.5L299.3 94.5L299.5 93.5L298.8 92.7L299.7 91.4L299.8 89.8L300.8 88.7L301.9 89.1L303.0 89.0L304.1 89.0L305.0 88.4L304.3 89.6L303.5 90.0L302.6 89.9L301.8 89.8L301.0 89.6L300.4 90.2L300.0 90.9L301.5 91.0L302.4 90.7L303.3 90.8L302.7 91.5L301.8 91.9L302.3 92.9L302.8 94.0L302.2 95.2L301.3 94.0L300.8 92.8L300.4 94.2L300.4 95.6L299.5 95.5M307.5 88.0L308.5 88.5L308.4 89.2L308.5 90.0L307.8 90.8L307.7 90.0L307.6 89.2L307.6 88.6L307.5 88.0M308.0 93.0L308.7 93.0L309.4 93.0L310.1 92.9L310.8 93.0L310.5 93.8L309.5 93.4L308.5 93.5L308.0 93.0M311.0 90.8L312.5 90.4L314.0 90.9L314.6 92.1L315.0 93.3L315.9 93.3L316.7 92.8L317.1 92.0L317.8 91.5L318.7 91.5L319.4 92.0L320.2 92.3L321.0 92.6L321.7 93.2L322.6 93.7L323.5 93.7L324.5 93.8L325.5 94.4L326.0 95.5L327.0 95.6L327.8 96.2L327.0 96.9L327.7 98.0L328.5 99.0L329.6 99.8L330.7 100.5L329.4 100.0L328.0 100.2L326.9 99.4L326.0 98.5L325.1 97.9L324.0 97.7L323.3 98.3L323.0 99.2L322.0 98.8L321.0 99.1L320.4 98.4L319.5 98.1L318.0 98.4L318.3 97.7L318.8 97.0L318.6 96.2L318.0 95.5L316.6 95.3L315.5 94.4L314.3 93.9L313.0 94.0L312.8 92.8L314.0 92.5L313.0 92.5L312.0 92.1L311.7 91.3L311.0 90.8M328.5 95.6L329.5 95.7L330.5 95.4L331.3 94.7L332.3 94.2L332.1 94.8L332.0 95.5L331.0 96.0L330.0 96.3L329.3 95.8L328.5 95.6M336.0 96.8L336.9 97.5L338.0 97.8L338.7 98.1L339.4 98.5L340.0 98.9L340.5 99.5L339.5 99.6L338.9 99.1L338.2 98.9L337.6 98.5L337.0 98.0L336.4 97.5L336.0 96.8M344.0 110.2L344.7 110.5L345.2 111.0L345.8 111.5L346.5 111.8L347.0 112.4L345.9 112.2L345.0 111.5L344.4 110.9L344.0 110.2M357.3 107.5L358.0 107.7L358.7 107.6L358.3 108.2L357.3 108.0L357.3 107.5M293.7 112.5L294.2 111.8L295.7 111.5L296.7 110.5L297.8 110.1L299.0 110.0L300.2 109.3L301.5 109.2L302.1 108.5L302.3 107.5L303.1 107.1L303.7 106.5L304.5 105.4L305.5 104.5L307.0 104.0L307.7 104.6L308.5 104.9L309.7 104.8L309.9 103.5L310.7 102.5L311.7 102.0L312.7 101.5L314.0 102.1L315.5 102.0L317.0 102.3L316.2 103.5L315.7 104.8L316.6 105.4L317.5 106.0L318.3 106.7L319.2 107.4L320.0 107.4L320.8 107.5L321.5 106.1L321.6 104.5L321.5 103.5L321.8 102.5L322.2 101.7L322.5 100.8L323.0 101.6L323.3 102.5L323.4 103.4L323.7 104.3L324.5 104.7L325.3 105.0L325.9 106.4L326.0 108.0L326.8 108.2L327.6 108.7L328.1 109.5L328.5 110.2L329.0 111.3L329.7 112.3L330.1 113.2L331.0 113.8L332.3 114.3L333.0 115.5L333.4 117.0L333.5 118.5L333.5 120.1L332.8 121.5L331.9 122.6L331.3 123.8L330.8 125.2L330.2 126.5L329.9 127.5L328.9 128.1L327.8 128.0L327.2 128.7L326.3 129.0L325.4 128.7L324.5 128.2L323.0 128.1L321.5 128.4L320.7 127.7L319.8 127.0L319.2 126.3L319.0 125.5L318.0 125.7L318.2 124.2L317.8 122.8L317.0 124.0L315.8 124.8L315.1 123.7L314.2 122.8L312.8 122.3L311.5 121.5L310.0 121.7L308.5 121.8L307.3 122.4L306.0 122.3L305.0 123.3L303.7 123.9L302.4 123.7L301.0 123.8L299.5 124.3L298.5 124.4L297.8 125.0L296.6 124.5L295.2 124.3L295.5 123.1L295.7 121.8L295.1 120.4L294.7 119.0L294.0 118.4L293.7 117.6L293.7 116.8L293.3 116.0L293.0 115.1L293.1 114.2L293.2 113.3L293.7 112.5M324.7 130.8L325.6 130.9L326.5 131.1L327.4 131.1L328.2 130.9L328.3 131.9L328.0 132.8L327.5 133.3L326.8 133.6L326.1 133.3L325.5 132.8L324.9 131.9L324.7 130.8M352.7 124.5L353.5 125.4L354.5 126.2L355.8 126.8L356.2 127.6L357.0 128.0L358.5 127.7L358.2 128.5L357.8 129.2L356.8 130.0L356.2 130.9L355.3 131.6L354.8 130.5L353.8 129.3L354.7 128.5L354.3 127.0L353.7 125.6L352.7 124.5M352.8 130.5L353.6 130.9L354.2 131.5L353.9 132.0L353.7 132.6L353.3 133.1L352.8 133.5L352.1 134.0L351.3 134.3L350.9 135.1L350.5 136.0L349.5 136.2L348.5 136.6L347.5 136.2L346.5 136.0L346.9 135.3L347.5 134.8L348.0 134.4L348.4 134.0L349.0 133.9L349.5 133.5L350.3 132.8L351.2 132.3L351.6 131.8L351.9 131.3L352.3 130.9L352.8 130.5M0.0 168.0L0.9 167.6L1.8 167.1L2.7 166.6L3.6 166.2L4.5 166.7L5.6 166.7L6.6 166.7L7.6 166.3L8.5 166.5L9.5 166.8L10.4 166.9L11.4 166.9L12.2 167.5L13.2 167.7L14.0 168.4L15.0 168.5L16.0 168.3L17.0 168.3L17.8 167.6L18.8 167.2L19.7 166.9L20.7 166.7L21.6 166.1L22.3 165.4L23.0 166.1L24.1 166.3L25.1 165.9L26.1 166.1L27.2 166.1L28.2 166.1L29.1 166.5L30.0 167.0L31.3 166.8L32.6 166.5L33.9 166.4L35.1 167.0L36.2 166.2L37.4 165.8L38.7 165.3L40.0 165.5L40.8 166.2L41.7 166.5L42.7 167.0L43.7 166.8L44.8 166.9L45.8 166.9L46.6 166.2L47.6 165.9L48.4 165.2L49.4 165.0L50.3 165.3L51.3 165.1L52.3 164.8L53.1 164.4L54.1 164.4L55.0 164.0L56.0 163.8L57.0 163.7L57.9 163.4L58.9 163.6L59.8 163.2L60.7 162.6L61.6 162.4L62.6 162.0L63.7 162.0L64.6 162.5L65.2 163.4L66.0 164.1L66.9 164.6L67.9 164.9L69.0 164.8L70.0 164.5L70.9 163.4L72.1 162.9L73.5 163.0L74.8 162.5L76.1 162.2L77.5 162.3L78.8 162.5L80.0 163.0L80.8 163.0L81.6 163.3L82.4 162.9L83.3 162.9L84.0 162.5L84.5 161.9L85.2 161.5L86.0 161.1L86.7 161.5L87.5 161.8L88.4 161.8L89.2 161.6L89.8 162.1L90.4 162.6L91.2 163.0L92.0 163.0L92.8 163.4L93.7 163.3L94.5 163.6L95.2 164.0L96.1 164.4L96.9 164.1L97.7 163.6L98.6 163.6L99.3 163.1L100.2 163.0L101.1 163.0L101.9 163.4L102.8 163.2L103.6 163.0L104.4 162.7L105.0 162.0L105.5 161.1L106.2 160.2L107.1 159.6L108.0 159.0L109.0 158.7L110.0 158.7L111.0 158.4L112.0 158.0L113.4 157.4L114.4 156.3L115.8 155.9L117.0 155.0L117.8 154.9L118.6 154.8L119.4 155.1L120.2 155.1L120.9 154.6L121.4 154.0L122.2 153.8L123.0 153.5L122.0 153.8L121.2 154.4L120.8 155.3L120.0 156.0L118.9 156.7L118.3 157.8L117.6 158.9L117.0 160.0L117.9 160.9L118.3 162.2L118.9 163.3L120.0 164.0L119.5 164.8L119.5 165.8L118.9 166.6L118.0 167.0L119.5 167.3L121.0 167.5L122.6 167.4L124.1 166.9L125.4 167.6L126.9 167.9L128.5 168.1L130.0 168.0L130.9 167.4L131.4 166.4L132.4 166.1L133.4 165.6L134.5 165.7L135.4 165.1L136.5 165.2L137.5 165.6L138.5 166.1L139.6 165.9L140.5 166.5L141.1 167.3L142.0 167.8L143.0 167.9L144.0 168.2L145.0 168.0L146.3 167.6L147.3 166.8L148.6 166.3L149.7 165.7L151.1 165.5L152.3 164.9L153.7 165.1L155.0 165.5L156.4 165.5L157.7 165.9L159.0 165.3L160.3 165.2L161.8 165.1L162.9 164.3L164.2 163.7L165.0 162.5L166.3 162.3L167.5 161.8L168.8 161.7L169.9 161.2L171.2 160.7L172.4 160.6L173.7 160.3L175.0 160.5L176.0 160.7L176.8 161.2L177.8 161.1L178.8 160.9L179.8 160.8L180.6 160.1L181.5 159.8L182.5 159.9L183.4 159.5L184.4 159.7L185.3 160.0L186.2 160.3L187.3 160.3L188.2 160.7L189.1 160.4L190.0 160.0L191.0 159.9L192.0 160.3L193.0 160.1L193.9 159.7L194.9 159.7L195.9 159.4L196.7 158.9L197.5 158.4L198.4 158.9L199.3 159.4L200.1 160.0L201.0 160.5L202.0 160.6L203.0 160.9L203.9 160.4L205.0 160.3L206.2 159.8L207.5 159.7L208.7 159.2L209.8 158.5L211.2 158.8L212.5 158.3L213.8 158.4L215.0 159.0L216.2 158.4L217.4 157.9L218.6 157.3L219.8 156.8L221.0 157.3L222.4 157.1L223.8 156.9L225.0 157.5L226.2 158.2L227.5 158.2L228.8 158.3L230.1 157.9L231.4 157.6L232.4 156.7L233.7 156.9L235.0 156.5L236.2 157.1L237.5 156.9L238.8 156.6L240.1 156.4L241.3 156.6L242.6 156.8L243.8 157.0L245.0 157.5L246.0 157.7L246.8 158.1L247.4 158.9L248.2 159.4L249.2 159.6L250.1 159.9L251.1 159.7L252.0 159.5L253.5 159.8L255.1 159.4L256.6 159.1L258.0 158.5L259.3 158.2L260.6 158.4L261.9 158.8L263.2 158.7L264.3 157.9L265.6 157.5L266.9 157.2L268.0 156.5L269.4 155.8L270.8 154.9L272.4 155.0L273.9 155.0L275.5 154.9L277.1 154.8L278.5 155.5L280.0 156.0L281.5 155.5L282.8 154.6L283.6 154.8L284.5 154.7L285.2 154.5L286.0 154.3L286.8 153.9L287.6 153.9L288.5 153.9L289.3 154.2L290.0 154.7L290.8 154.8L291.4 155.4L292.0 156.0L292.8 155.7L293.7 155.4L294.3 154.8L295.1 154.3L295.9 154.3L296.8 154.5L297.7 154.6L298.6 154.3L299.3 154.9L300.2 154.9L300.9 155.4L301.7 155.6L302.6 155.4L303.5 155.5L304.4 155.8L305.0 156.5L306.1 155.8L307.4 155.7L308.7 155.4L310.0 155.8L311.3 156.1L312.5 156.7L313.8 156.5L315.0 156.0L316.3 156.1L317.5 156.3L318.7 155.8L320.1 155.9L321.3 156.3L322.6 156.3L323.8 156.6L325.0 157.0L326.3 157.1L327.7 156.9L328.7 157.7L330.0 158.2L331.2 158.6L332.5 158.4L333.8 158.6L335.0 159.0L336.3 159.1L337.6 158.7L339.0 158.7L340.3 158.5L341.3 159.4L342.7 159.7L343.7 160.6L345.0 161.0L346.0 161.9L347.3 162.6L348.6 162.9L350.0 163.0L349.1 163.2L348.4 163.7L347.8 164.3L347.2 164.9L346.8 165.7L346.4 166.4L345.7 167.0L345.0 167.5L345.9 167.6L346.8 167.9L347.7 167.8L348.5 167.7L349.4 167.8L350.3 168.0L351.1 168.3L352.0 168.5L353.0 168.9L354.0 168.9L355.0 168.8L356.0 168.7L357.0 168.6L358.0 168.5L359.1 168.6L360.0 168.0" fill="none" vector-effect="non-scaling-stroke" stroke-linejoin="round"/><path d="M22.5 69.0l0.7 -0.4l0.2 0.7zM23.8 70.4l0.9 -0.5l0.2 0.9zM19.9 68.0l0.8 -0.5l0.2 0.8zM29.8 107.6l1.0 -0.6l0.2 0.9zM7.3 103.8l1.0 -0.6l0.2 0.9zM4.6 111.0l0.6 -0.3l0.1 0.6zM347.6 106.0l0.6 -0.3l0.1 0.5zM345.7 105.0l1.1 -0.7l0.2 1.1zM358.5 106.5l0.7 -0.4l0.2 0.7zM324.5 76.0l0.7 -0.4l0.2 0.7zM313.6 82.5l1.3 -0.7l0.3 1.2zM118.4 75.5l0.9 -0.5l0.2 0.8zM117.7 73.8l1.1 -0.7l0.2 1.1zM119.4 76.8l0.9 -0.5l0.2 0.8zM234.8 111.0l1.0 -0.6l0.2 0.9zM237.0 110.2l0.7 -0.4l0.1 0.6zM154.3 52.2l1.0 -0.6l0.2 0.9zM151.2 51.5l1.2 -0.7l0.3 1.1zM162.8 61.7l0.9 -0.5l0.2 0.9zM163.7 62.0l1.1 -0.6l0.2 1.0zM162.3 57.3l1.0 -0.6l0.2 1.0zM156.1 75.0l0.6 -0.3l0.1 0.6zM154.7 73.5l1.1 -0.6l0.2 1.0zM252.3 86.0l1.0 -0.6l0.2 0.9zM251.9 97.0l0.8 -0.4l0.2 0.7zM275.6 102.0l0.6 -0.3l0.1 0.5zM88.7 90.5l1.2 -0.7l0.2 1.1zM88.1 90.8l0.9 -0.5l0.2 0.8zM69.8 117.1l1.1 -0.6l0.2 1.0zM142.7 144.3l1.2 -0.7l0.3 1.1zM249.2 139.3l1.1 -0.6l0.2 1.0zM114.4 57.7l1.2 -0.7l0.3 1.1zM186.0 89.8l0.8 -0.5l0.2 0.8zM223.2 102.2l1.1 -0.6l0.2 1.0zM234.8 94.6l0.9 -0.5l0.2 0.8zM346.1 119.0l1.2 -0.7l0.3 1.1zM39.2 98.9l1.2 -0.7l0.3 1.1zM8.6 99.0l0.6 -0.4l0.1 0.6zM331.5 82.6l0.7 -0.4l0.1 0.6zM337.5 83.1l0.7 -0.4l0.2 0.7zM350.1 83.0l1.2 -0.7l0.3 1.1zM352.4 88.6l0.9 -0.5l0.2 0.8zM21.9 88.1l1.0 -0.6l0.2 0.9zM173.7 106.0l0.8 -0.4l0.2 0.7zM164.9 98.0l0.9 -0.5l0.2 0.8zM169.4 130.3l0.8 -0.5l0.2 0.8zM217.2 136.9l0.8 -0.5l0.2 0.7zM256.8 128.0l1.0 -0.6l0.2 0.9zM152.8 148.0l1.0 -0.6l0.2 0.9zM133.6 150.6l1.2 -0.7l0.3 1.1zM120.3 152.0l1.0 -0.6l0.2 1.0z" vector-effect="non-scaling-stroke" stroke-linejoin="round"/></symbol><symbol id="wmb" viewBox="0 0 360 180" preserveAspectRatio="none" overflow="visible"><path d="M39.0 20.3L39.0 21.5L39.2 22.8L39.0 24.0L38.7 25.2L38.6 26.4L38.8 27.6L39.2 28.8L39.0 30.0M49.7 35.3L48.7 34.4L48.0 33.2L47.2 32.2L46.0 31.5L44.6 30.9L43.0 31.0L40.9 30.9L39.0 30.0M57.0 41.0L58.7 41.6L60.4 42.0L62.2 42.1L64.0 42.7L65.8 42.9L67.6 42.7L69.2 41.7L71.0 41.4L72.8 41.6L74.6 41.5L76.3 41.1L78.0 40.4L79.7 40.3L81.5 40.4L83.3 40.4L85.0 41.0L86.5 41.0L88.1 41.0L89.6 41.4L91.0 42.0L92.2 42.1L93.3 42.5L94.4 43.0L95.5 43.5L96.6 44.1L97.5 45.0L97.4 46.5L97.0 48.0L98.9 47.1L101.0 47.0L102.3 46.7L103.5 46.0L105.3 45.0L106.9 44.7L108.5 45.0L110.0 44.1L111.0 42.7L112.2 43.0L113.0 45.0M63.0 57.5L64.5 57.5L66.1 57.7L67.5 58.2L69.0 58.7L70.5 58.3L72.0 58.5L73.5 58.2L74.8 59.3L76.0 60.5L77.3 60.4L78.5 60.2L79.7 61.2L80.5 62.5L81.7 63.1L82.6 64.0M88.0 75.5L89.0 74.0L89.5 72.2L91.0 72.2L91.2 74.1M90.8 72.2L91.7 71.5M90.5 76.5L91.5 75.2L92.5 77.0M92.5 77.0L94.0 76.0L95.2 75.4L96.5 75.0M94.2 79.0L96.3 79.0M97.0 81.7L97.2 80.5M102.5 82.0L102.8 82.8M108.5 78.0L107.9 79.0L107.5 80.0L107.7 81.3L108.0 82.5L110.0 83.0L111.2 83.5L112.5 84.0L113.0 86.0L113.0 88.0L111.7 88.4L110.5 89.0L110.3 90.2L110.1 91.5L110.0 92.7L110.0 94.0M113.0 88.0L114.5 88.1L116.0 88.0L116.4 86.9L117.0 86.0L118.2 85.3L119.5 85.0L119.8 83.4L120.0 81.7M119.5 85.0L120.7 86.5L122.0 88.0L124.0 88.0L126.0 87.7L128.0 87.5L128.5 85.7M122.5 84.0L121.9 86.0L122.0 88.0M126.0 84.2L125.8 86.0L126.0 87.7M101.2 88.6L102.5 89.4L104.0 89.7L104.8 90.5L104.5 92.5L103.3 92.9L102.0 93.3L100.9 93.4L99.8 93.4M104.8 90.5L105.7 91.6L107.0 92.3L108.7 93.0L110.0 94.3L108.4 95.5L107.0 97.0L107.0 98.3L106.5 99.5L108.1 100.0L109.5 101.0L111.0 102.5L111.0 103.8L110.5 105.0L110.3 106.2L110.5 107.5L109.7 108.3M110.5 101.0L112.6 100.6L114.7 100.0L115.0 102.0L116.2 102.5L117.4 102.4L118.3 103.3L119.5 103.7L119.8 104.9L120.0 106.2L121.0 106.9L122.0 107.5L122.3 109.5L121.8 110.0L119.9 110.4L118.0 110.0L117.9 111.2L117.5 112.3L116.2 112.2L115.0 112.0L114.1 112.7L113.0 113.0L112.2 111.8L111.5 110.5L111.0 109.0L110.5 107.5M121.8 110.0L122.1 111.1L122.2 112.2L123.3 112.3L124.5 112.3L125.5 114.0L125.4 115.6L123.9 116.4L122.5 117.3L121.5 117.3L120.5 116.0L119.4 114.9L118.2 113.8L117.5 112.3M125.4 115.6L126.3 117.2L125.4 118.0L124.5 118.9L123.4 119.3L122.5 120.2L122.1 121.6L121.8 123.0L121.7 124.0M122.5 120.2L123.5 121.1L124.4 122.0L125.5 122.8L126.5 123.7M113.0 113.0L112.4 114.1L111.5 115.0L111.4 116.3L111.4 117.6L110.8 118.8L110.2 120.0L110.1 121.8L109.7 123.5L109.7 124.7L109.9 125.8L109.5 126.9L109.0 128.0L108.8 129.3L109.0 130.6L108.6 131.7L108.3 133.0L108.6 135.0L108.0 137.0L107.7 138.6L107.0 140.0L107.5 141.0L108.0 142.0L109.7 142.5L111.5 142.4M111.4 142.7L111.4 144.9M167.0 62.3L169.2 61.9L171.3 62.3L171.3 61.0M171.3 62.7L172.4 63.0L173.4 63.7L174.4 64.1L175.2 65.0L176.8 65.7L178.5 66.4L179.5 67.8L181.0 68.8L182.0 70.0L183.3 71.0L184.2 70.8L186.0 70.0L187.5 69.1L189.0 68.2L190.6 67.6L192.0 66.5L193.5 67.0L195.0 67.0L196.1 67.4L197.3 67.6L198.6 67.8L199.6 68.5L200.6 69.2L201.9 69.3L202.9 70.0L204.0 70.5L203.8 69.2L204.0 68.0L205.0 68.0L205.3 66.8L205.0 65.6L205.3 64.4L205.4 63.2L205.1 62.0L204.8 60.8L204.8 59.6L205.0 58.4M163.0 69.0L165.0 69.1L167.0 68.7L167.0 66.5L167.5 65.3L168.0 64.0L169.7 64.0L171.3 64.0L171.3 62.7M178.0 55.0L178.3 56.3L178.8 57.5L177.7 58.3L176.5 59.0L175.4 59.9L173.9 60.2L172.6 60.8L171.3 61.3M191.5 56.8L190.4 58.2L189.5 59.7L189.3 61.6L189.8 63.5L190.7 65.2L192.0 66.5M188.5 53.1L188.5 54.6L188.2 56.0L187.5 56.5L189.0 58.0L189.5 59.7M163.3 74.0L164.5 73.9L165.5 73.4L166.5 74.5L167.8 75.2L168.0 76.5L168.5 77.6L167.4 77.5L166.3 77.4L164.8 77.7L163.3 77.6M163.2 76.5L164.7 76.4L166.2 76.5M167.8 75.2L168.5 74.5L170.0 74.6L171.5 74.1L172.9 74.6L174.5 74.5L174.7 73.7L174.4 72.6L174.3 71.5L174.0 70.4L173.5 69.4L173.8 68.3L173.9 67.2L173.9 66.1L173.5 65.0M175.2 65.0L173.5 65.0M165.0 79.0L166.3 77.4M166.8 81.0L167.8 80.3L169.0 80.0L169.5 81.5L168.5 83.0M169.0 80.0L170.2 79.7L171.5 79.5L172.0 81.5L172.1 83.6L172.5 85.6M171.5 79.5L172.7 79.6L174.0 79.7L174.5 78.5L175.7 77.5L175.9 76.3L176.0 75.0L178.1 75.4L180.2 75.0L181.7 74.5L183.3 74.5L184.2 73.2L184.2 72.0L184.2 70.8M177.0 84.9L176.9 83.8L176.7 82.7L176.9 81.6L177.3 80.5L177.0 79.0L178.2 79.2L179.5 79.0L180.3 77.1L180.2 75.0M181.2 83.9L180.5 82.8L180.2 81.6L180.3 80.3L180.2 79.0L181.0 78.5L182.3 77.7L183.6 78.3L183.5 79.7L182.8 81.0L183.0 82.4L182.7 83.7M180.2 79.0L179.5 79.0M181.6 83.8L181.5 82.6L181.5 81.4L180.9 80.3L180.9 79.1M183.6 78.3L184.0 76.5L185.5 76.8L187.0 77.0L188.5 76.5L190.0 76.7L191.8 76.7L193.5 76.3L194.2 77.5L194.6 78.5L193.3 80.0L192.3 81.7L191.5 83.5L190.2 84.6L188.7 85.4M193.5 76.3L194.5 74.8L195.0 73.0L195.6 71.4L195.8 69.7L195.2 68.4L195.0 67.0M194.2 77.5L194.8 78.8L195.5 80.0L194.9 81.1L194.0 82.0L195.0 82.7L194.6 84.1L194.5 85.5L195.1 86.8L196.0 87.8L194.7 87.7L193.3 87.8L191.3 87.8L189.8 87.7M195.5 80.0L196.9 80.7L198.5 81.0L199.5 80.4L200.3 79.5L201.4 79.2L202.5 79.0L203.2 76.9L204.0 74.9L204.1 72.7L204.0 70.5M202.5 79.0L203.2 80.2L204.0 81.3L204.5 82.5L205.3 83.4L206.4 83.9L207.3 84.8L209.0 85.7L210.8 86.4L212.3 86.3L213.8 85.8L215.8 85.2L215.4 83.3L214.5 81.5L213.0 80.0L213.0 77.8L214.6 77.6L216.2 77.0L216.5 75.2L217.7 73.7L218.5 72.0M204.0 81.3L203.1 83.0L203.0 85.0L201.0 85.7L199.0 86.0L198.5 86.5L197.9 87.5L197.6 88.7L197.4 89.9L197.0 91.0L196.1 91.7L195.4 92.7L195.1 93.8L194.5 94.8L193.3 95.1L192.2 95.8M191.3 87.8L191.3 89.0L192.2 89.7L192.8 90.6L193.7 91.3L194.4 92.2L193.0 92.9L191.8 94.0M194.5 85.5L196.5 86.1L198.5 86.5M189.8 88.9L191.3 89.0M192.3 96.0L194.1 95.8L196.0 95.9L196.4 97.0L197.0 98.0L198.3 97.8L199.4 97.2L200.8 97.1L202.0 97.5L202.0 99.2L202.0 101.0L204.0 101.0L204.0 103.0L202.0 103.0L201.8 104.1L201.7 105.2L201.7 106.4L202.0 107.5L203.3 107.7L202.2 108.0L201.0 108.0L200.3 109.9L200.0 112.0L200.4 113.6L200.6 115.2L200.2 116.9L200.0 118.5L198.5 118.2L197.0 118.2L196.5 118.6M191.8 107.2L192.9 107.2L194.0 107.4L195.2 107.4L196.2 107.7L197.4 107.8L198.5 107.4L199.7 107.4L200.9 107.5L202.1 107.7L203.3 107.7M202.0 101.0L203.4 101.2L204.8 101.3L206.2 101.7L207.5 102.3L209.0 103.5L208.5 101.5L209.6 99.8L210.8 98.2L210.3 96.3L209.5 94.5L209.3 93.0L209.0 91.5L209.7 90.6L210.6 89.3L211.0 87.7L210.8 86.4M209.7 90.6L210.5 91.1L212.3 91.3L214.0 91.0L216.0 91.8L217.7 93.2L219.2 94.7M214.0 91.0L214.0 89.7L214.2 88.4L214.4 87.1L214.0 85.8L215.8 85.2M214.0 85.8L216.0 85.6L217.2 85.8L218.5 85.8L219.8 85.9L221.0 86.1L220.6 87.5L220.7 88.9L220.7 90.3L221.0 91.7M221.0 86.1L223.0 85.5L225.0 85.0L226.7 83.7L228.0 82.0L226.1 81.1L224.0 81.0L223.4 79.9L223.0 78.6M216.5 75.2L218.0 75.3L220.0 75.5L221.1 76.6L222.4 77.5L223.2 77.5M222.4 77.5L221.8 79.0L223.0 78.6M210.8 98.2L211.9 98.9L213.0 99.5L213.7 100.4L214.0 101.5L214.9 101.6L216.2 101.5L217.5 101.7L218.9 100.9L220.5 100.7M213.0 99.5L213.0 100.7L213.5 101.7L213.2 102.9L213.2 104.0L211.6 104.2L210.2 105.0L210.4 105.6L211.6 104.7L213.0 104.0L214.1 105.3L215.0 106.8L215.3 107.2L214.9 105.8L214.3 104.5L214.7 103.1L214.9 101.6M210.2 105.0L208.7 106.6L207.0 107.9L205.3 107.8L203.3 107.7M210.4 105.6L211.9 107.2L213.0 109.0L212.6 110.1L212.5 111.3L211.3 112.4L209.4 112.2L208.3 113.1L207.0 113.7L206.1 114.6L205.3 115.7L204.1 115.6L203.0 115.3L201.8 115.9L200.8 116.9L200.6 115.8L200.0 114.8M205.3 107.8L206.4 109.0L207.0 110.5L208.3 111.2L209.4 112.2M211.3 112.4L211.8 113.4L212.0 114.5L211.8 115.9L212.9 116.8M211.8 115.9L210.8 116.7L211.3 117.3L212.1 116.8M207.0 119.6L208.6 118.6L209.4 119.6L208.0 120.6L207.0 119.6M171.2 48.0L172.3 48.3L173.5 48.0L173.8 48.5L173.0 50.0L172.8 52.0L172.6 52.8M178.2 46.6L179.4 47.2L180.7 47.3L181.9 47.6L183.2 47.5M182.5 38.9L184.2 40.0L186.0 40.5L187.1 40.9L188.2 41.0L187.5 42.4L186.0 43.7L187.0 44.1L187.0 45.8L187.5 46.2M183.4 38.6L184.7 38.5L186.0 38.2L186.0 39.3L186.2 40.5M187.0 36.7L187.0 37.8L186.0 38.2M186.0 43.7L187.2 43.8L188.5 43.7L190.5 43.1L189.5 42.5L187.5 42.4M188.6 35.1L189.8 35.2M194.2 36.1L194.2 37.6L194.8 39.0L193.5 39.2L192.2 39.7L193.1 40.4L193.8 41.3L193.0 42.5L191.7 42.6L190.5 43.1M194.8 39.0L196.9 39.4L198.8 40.5L200.7 40.7L202.5 41.0L203.2 40.1L204.0 39.3L203.6 37.5L203.5 36.0L202.8 35.6L201.3 35.4L199.8 35.6M193.8 41.3L195.4 41.3L197.0 41.2L198.8 40.5M197.0 41.2L197.0 42.0L196.3 43.1L195.0 43.4L193.7 43.5L193.7 44.4M197.0 42.0L199.0 42.2L200.6 42.0L202.2 41.6L202.5 41.0M196.3 43.1L196.5 43.6L197.7 44.1L199.0 44.0L200.3 43.8L201.0 42.9L202.0 42.2L202.2 41.6M193.7 43.5L192.5 43.3L190.5 43.1M196.5 43.6L195.3 44.5L193.6 44.5M199.0 44.0L199.0 45.1L197.4 45.2L195.8 44.8L196.0 46.5M199.0 45.1L199.5 46.5L198.5 47.5M200.3 43.8L201.5 45.2L202.6 45.7L202.4 47.2L202.9 48.7L201.7 48.7L200.6 49.0L199.5 48.2M200.6 49.0L200.7 50.0L200.0 50.3M202.9 48.7L204.6 48.9L206.3 48.3L206.2 49.1M202.6 45.7L202.7 46.2L204.1 46.0L205.5 46.3L207.2 45.9L208.6 46.3M202.2 41.6L203.5 41.8L204.7 42.2L206.6 41.7L207.2 42.7L208.2 43.4L208.2 44.5L209.6 44.7M206.6 41.7L207.9 41.9L209.2 41.8L210.0 43.6L208.2 44.5M204.0 39.3L203.6 38.5L205.3 38.7L207.0 38.3L208.8 38.2L210.6 38.6L211.8 37.8L213.0 38.2L214.2 38.2L215.5 39.6L216.8 39.6L218.0 40.1L220.0 40.4L219.7 42.1L218.2 42.8M203.5 36.0L205.5 35.7L206.6 34.3L208.2 33.8L209.6 33.9L210.9 34.3L210.8 35.2L211.6 36.1L212.7 36.6L211.3 37.0L211.8 37.8M201.0 33.9L202.5 33.6L204.0 33.6L205.3 34.0L206.6 34.3M202.8 35.6L202.8 35.0L201.0 34.7M204.3 32.1L205.9 32.1L207.4 32.5L208.2 33.8M207.4 32.5L207.8 30.6L208.0 30.3M208.5 29.4L210.0 28.0L211.5 27.1L210.5 25.8L209.9 24.3L209.6 23.0L209.0 21.8L208.5 21.0L209.0 20.3L210.0 20.3M208.5 21.0L207.3 20.3L206.0 20.1L205.7 20.8L203.7 21.3L202.5 21.3L201.5 20.8L200.5 21.0M203.7 21.3L203.8 22.7L204.0 24.0L204.2 24.2M200.5 21.0L199.3 21.5L198.0 21.5L197.1 22.3L196.0 23.0L195.3 23.9L194.5 24.7L193.5 26.0L192.2 27.7L192.3 29.0L192.5 29.8L191.5 31.0L191.2 30.9M220.0 40.4L220.0 42.2M218.2 42.8L219.7 42.1M219.9 46.6L221.5 46.6L223.0 47.0L224.8 47.4L226.5 48.1L228.5 48.1M221.5 48.5L223.5 48.9L225.0 48.7L226.5 48.1M223.5 48.9L224.8 50.3L226.5 51.1L228.5 51.5L228.9 51.6M224.8 50.3L224.0 50.6L223.3 49.5L222.5 48.5M216.0 53.2L218.0 53.2L219.1 53.2L220.2 53.5L221.3 53.2L222.3 52.8L223.6 52.8L224.8 52.8L224.3 51.8L224.2 50.6M224.8 52.8L225.5 54.0L226.0 55.0L225.5 56.0L226.4 57.7L227.8 59.0L228.0 60.0M222.3 52.8L221.9 54.1L221.2 55.3L219.9 55.7L218.8 56.6L217.9 57.2L216.8 57.7L215.8 57.3L215.6 56.7L216.5 55.5L216.0 54.2M215.1 56.9L215.6 56.7M214.3 58.7L214.9 60.5M215.5 58.5L215.5 57.5L215.0 57.5L215.0 58.6L215.5 58.5M215.5 57.3L215.5 59.0L215.0 60.5M216.8 57.7L217.9 57.7L219.0 58.0L217.0 58.5L218.0 59.5L217.5 60.0L216.0 60.8L215.0 60.5M218.8 56.6L219.0 58.0L220.4 58.6L222.0 58.9L223.4 59.8L224.7 60.8L226.5 60.9L227.5 60.0L228.0 60.0M226.5 60.9L227.7 61.5L228.5 61.5M224.7 60.8L226.7 61.0L228.5 62.0M231.6 65.4L232.5 67.0L233.9 67.1L235.2 67.3L235.5 68.6L235.7 70.0L233.8 70.3L232.0 71.0L230.3 71.1L228.8 71.8L227.0 73.0L225.5 72.7L224.0 72.6L223.0 73.5L222.8 73.6M232.0 71.0L232.4 72.2L233.0 73.4M236.0 65.2L235.4 66.2L235.2 67.3M231.2 65.4L230.8 65.2M228.9 51.6L227.9 50.3L226.5 51.1M233.9 52.7L235.2 52.4L236.5 51.8L238.0 52.4L239.5 53.2L241.2 53.4L241.0 55.5L240.6 56.8L241.0 58.5L241.8 59.0L240.9 60.1L242.5 60.6L243.0 61.7L243.2 62.8L242.5 63.9L241.6 64.8M241.2 53.4L241.2 54.4L242.9 54.3L244.5 53.7L245.6 53.3L246.5 52.6L248.0 53.0L250.0 52.4L251.5 53.3L253.0 53.0L254.5 52.8L254.9 52.8M240.9 60.1L242.3 59.9L243.6 60.2L245.0 60.2L246.3 60.1L246.5 59.0L247.9 58.7L249.3 58.1L250.0 56.5L251.0 55.5L251.6 53.6M232.5 48.2L234.0 47.7L235.1 48.0L236.0 48.7L237.0 48.7L236.8 46.8L236.0 45.0L237.2 44.7L238.5 44.5L239.7 45.2L241.0 45.7L242.0 46.5L243.4 46.2L244.9 46.3L246.0 47.6L246.5 48.8L248.0 48.8L249.2 48.4L250.5 48.0L251.0 47.7L252.2 47.2L253.5 47.0L255.0 47.1L256.4 47.3L257.8 47.0L259.0 47.3L260.2 47.8M236.0 48.7L237.2 47.9L238.5 47.3L240.0 47.8L240.0 48.8L241.0 49.4L242.0 50.0L243.2 50.4L244.2 51.1L245.5 51.7L246.5 52.6M246.5 48.8L248.0 49.8L247.8 50.7L247.7 51.9L248.0 53.0M248.0 49.8L249.2 49.9L250.5 49.8L252.1 50.3L253.7 50.5L253.9 51.5L254.9 52.8M250.5 48.0L251.0 49.7L252.3 50.3L253.7 50.5M260.2 47.8L259.0 48.2L258.0 49.0L256.8 49.4L255.8 50.0L254.9 50.9L253.9 51.5M260.2 47.8L260.3 46.4L260.3 45.0L261.4 45.1L262.5 44.7L263.0 42.8L264.5 42.3L265.8 41.6L267.3 40.8M227.0 45.2L226.8 43.3L226.5 41.5L227.5 39.7L229.0 39.1L230.5 38.3L231.5 39.0L232.7 39.2L233.8 39.5L235.0 39.3L236.1 38.9L237.3 38.9L238.3 39.4L239.5 39.5L241.5 39.0L241.1 37.6L241.0 36.1L242.2 35.6L243.4 35.1L244.7 35.5L246.0 35.3L247.5 35.0L249.0 34.7L250.0 35.3L251.0 35.8L252.5 36.3L254.0 36.4L255.2 36.0L256.5 35.7L257.4 36.6L257.8 37.9L259.0 38.5L260.0 39.2L261.3 38.7L262.6 38.7L264.0 38.5L265.3 38.5L266.2 39.8L267.3 40.8M267.3 40.8L268.4 40.8L269.5 40.4L270.6 40.2L271.5 39.5L273.3 39.5L275.0 40.0L276.6 39.5L278.2 39.5L278.0 38.0L280.1 38.5L282.2 38.6L282.3 39.4L283.4 39.6L284.5 39.9L285.6 39.6L286.7 39.7L287.8 39.9L289.0 39.8L290.0 40.1L291.0 40.7L292.4 40.0L294.0 39.8L295.4 39.8L296.7 40.2L298.3 40.2L299.9 40.0L299.6 41.5L299.7 43.0L298.6 43.4L297.4 43.4L298.7 43.5L299.9 43.3L297.9 43.7L296.0 44.3L294.0 44.7L291.9 45.0L291.4 46.5L290.3 47.0L289.1 47.2L288.0 47.6L287.0 48.2L285.8 47.9L284.5 48.2L283.4 48.1L282.2 47.8L281.1 47.7L280.0 47.3L278.2 47.5L276.4 47.3L274.9 47.3L273.5 46.6L272.2 45.7L271.0 44.8L270.9 43.6L270.7 42.5L269.4 41.5L267.8 40.9M299.9 40.0L300.4 38.8L300.7 37.5L302.1 36.9L303.6 36.5L305.7 37.0L306.3 38.8L307.5 40.2L309.1 40.5L310.7 41.1L312.8 41.7L315.0 41.6L314.1 43.2L313.2 44.9L311.3 46.0L311.2 47.1L310.6 47.6M310.6 47.6L308.5 48.0L306.9 48.2L305.8 49.3L304.4 49.9M306.7 52.2L308.4 51.4M254.9 52.8L255.9 53.5L257.8 54.5L259.0 55.7L258.9 57.5L258.8 58.8L259.8 59.5L261.0 59.8L260.2 61.2L261.5 62.2L263.0 62.5L264.4 63.0L265.8 63.4L266.9 63.7L268.1 63.6L268.2 62.1L268.8 62.7L269.0 63.2L270.5 63.0L272.0 63.1L272.1 62.2L273.7 61.8L275.0 60.8L276.2 61.1L277.3 61.7L277.5 62.1M261.0 59.8L262.5 60.0L263.9 60.7L265.0 61.2L266.0 62.0L267.1 62.1L268.2 62.1M268.8 62.7L269.7 61.8L271.6 62.2L272.1 62.2M257.8 54.5L255.9 54.7L254.0 55.3L254.5 57.2L255.4 57.7L254.4 59.1L253.0 60.1L251.8 61.1L250.5 62.0L249.5 63.2L250.2 64.3L251.1 65.6L250.0 65.7L248.8 65.7L248.2 66.4M268.1 63.6L268.1 65.0L268.4 66.6L268.9 68.2M269.0 64.0L270.7 64.6L272.4 65.0L271.2 66.4L272.3 66.3L272.4 67.5L272.6 68.7L272.2 69.0M272.4 65.0L272.0 63.1M272.6 68.7L273.2 67.7L273.3 66.0L274.7 64.6L275.9 63.0L277.3 61.7M277.5 62.1L278.7 62.5L278.3 64.0L277.5 65.3L278.7 66.0L279.2 67.8L281.1 68.5L281.8 67.5L282.2 67.6L283.0 67.5L284.1 66.9L285.3 66.7L286.7 67.2L288.0 68.5M279.2 67.8L280.1 69.7L280.6 70.5L281.2 70.5L281.1 68.5M280.1 69.7L278.0 70.3L277.7 72.0L278.9 73.6L278.2 75.0L278.5 76.3L279.2 77.4L279.0 79.0L278.7 79.8M281.2 70.5L281.3 72.2L283.3 71.6L284.7 72.5L284.8 73.7L285.6 74.4L285.6 75.6L285.2 75.7L284.1 75.6L283.0 75.8L282.4 76.4L282.9 78.3M282.2 67.6L283.0 68.4L283.9 69.2L284.8 70.2L283.9 70.7L285.2 71.5L286.5 73.1L287.6 74.8L287.5 75.3L285.6 75.6M287.5 75.3L287.6 76.5L287.6 77.7L285.9 78.3L286.2 79.2L284.4 79.6M281.0 83.7L280.2 83.4M289.6 88.1L290.5 89.1L292.0 88.6L293.3 88.7L294.6 88.6L295.5 87.2L295.9 85.7L297.6 85.8M321.0 92.6L320.5 94.2L320.4 95.8L320.6 97.5L321.0 99.1M304.9 99.0L305.1 99.4" fill="none" vector-effect="non-scaling-stroke"/></symbol></defs></svg>
<!-- ================= BACK (MAIN) CHROME WINDOW ================= -->
<style>
.win{position:absolute;overflow:hidden}
.pc{position:absolute;width:2880px;height:1800px}
.nav{font-size:24px;line-height:36px;color:#73736a;white-space:nowrap;position:absolute}
.h1{font-weight:bold;font-size:43px;line-height:60px;color:#0a0a0a;white-space:nowrap;position:absolute;letter-spacing:-0.600px}
.ysel{position:absolute;height:37px;background:#ffff2e;border:1.500px solid #222;font-size:26px;line-height:33px;color:#000;white-space:nowrap;padding-left:24px}
.bsel{position:absolute;height:37px;background:#f6f6f4;border:1.500px solid #333;border-radius:5px;font-size:26px;line-height:32px;color:#000;white-space:nowrap;padding-left:10px}
.date{position:absolute;font-size:23.700px;line-height:36px;color:#73736a;white-space:nowrap}
.chev{position:absolute;width:22px;height:12px}
.arr{display:inline-block;transform:translateX(4px) scaleX(1.350)}
</style>
<div id="bw" class="win" style="isolation:isolate;left:0;top:50px;width:1100px;height:1668px;border-radius:22px 0 0 22px;background:#ebebeb">
 <div class="pc" style="left:0;top:-50px">
  <!-- tab strip + toolbar (only slivers visible) -->
  <div class="abs" style="left:0;top:50px;width:1100px;height:80px;background:#cfd1d6"></div>
  <div class="abs" style="left:2px;top:127px;width:40px;height:100px;background:#e6e6e8;border-radius:13px 0 0 0;z-index:1"></div>
  <div class="abs nw" style="left:1033px;top:84px;font-size:27px;color:#b0b3ba">tie:</div>
  <div class="abs" style="left:0;top:130px;width:1100px;height:94px;background:#d4d6dc"></div>
  <div class="abs" style="left:1030px;top:140px;width:60px;height:64px;background:#dfe1e8"></div>
  <div class="abs nw" style="left:1031px;top:154px;font-size:34px;line-height:40px;color:#26262a">es-c</div>
  
  <!-- wp admin bar -->
  <div class="abs" style="left:0;top:223px;width:1100px;height:64px;background:#1c2026;z-index:2"></div>
  <svg class="abs" style="left:11px;top:241px;z-index:3" width="28" height="28" viewBox="0 0 28 28"><circle cx="14" cy="14" r="11.500" fill="#2a2e34" stroke="#777b80" stroke-width="2.200"/><text x="14" y="20.500" text-anchor="middle" font-family="Liberation Serif,serif" font-weight="bold" font-size="18" fill="#777b80">W</text></svg>
  <div class="abs" style="left:1030px;top:204px;width:60px;height:19px;background:#e4e5ea"></div>
  <div class="abs nw" style="left:1031px;top:237px;font-size:31px;line-height:40px;color:#e6e6e6;z-index:3">ew</div>
  <!-- page body -->
  <div class="abs" style="left:0;top:287px;width:445px;height:1440px;background:#ececec"></div>
  <div class="abs" style="left:445px;top:287px;width:660px;height:1440px;background:#f3f3ec"></div>
  <div class="abs" style="left:1030px;top:287px;width:60px;height:46px;background:#dedede"></div>
  <div class="abs" style="left:1030px;top:333px;width:60px;height:760px;background:linear-gradient(90deg,#dcdccf,#ecece0 40%,#e4e4d6)"></div>
  <div class="abs nw" style="left:1015px;top:375px;font-size:68px;line-height:96px;font-weight:bold;color:#0a0a0a;text-shadow:0 5px 5px rgba(110,110,110,.9),0 0 6px rgba(130,130,130,.8);letter-spacing:-1px">tca</div>
  <div class="abs nw" style="left:1030px;top:523px;font-size:27.500px;line-height:40px;font-weight:bold;font-style:italic;color:#3c3c38">t Do</div>
  <!-- photo sliver -->
  <div class="abs" style="left:1030px;top:683px;width:60px;height:345px;background:linear-gradient(90deg,rgba(0,0,0,.12),rgba(0,0,0,0) 40%,rgba(255,255,255,.05) 70%,rgba(0,0,0,.1)),linear-gradient(#4c504c 0,#80847c 7%,#666a62 14%,#3a3e40 24%,#22252a 36%,#1e2024 44%,#3e2e2a 52%,#36292a 66%,#1c1c22 78%,#15161b 100%);clip-path:polygon(0 7px,100% 2px,100% 100%,0 97.5%)"></div>
  <!-- red button sliver -->
  <div class="abs" style="left:1030px;top:1073px;width:60px;height:110px;background:#dc2a1e"></div>
  <div class="abs nw" style="left:1028px;top:1094px;font-size:28px;line-height:36px;color:#eb9a94">Last</div>
  <div class="abs nw" style="left:1026px;top:1147px;font-size:28px;line-height:36px;color:#eb9a94">Cour</div>
  <!-- lower part, below front window -->
  <div class="abs" style="left:485px;top:1173px;width:620px;height:93px;background:linear-gradient(#8c1117,#a51a20 70%,#a81c22);box-shadow:0 2px 3px rgba(120,20,20,.35)"></div>
  <div class="nav" style="left:525px;top:1327px" id="b_nav"><span class="arr" style="transform-origin:100% 50%">←</span> GeoJson World Countries Tutorial</div>
  <div class="h1" style="left:525px;top:1438px" id="b_h1">GeoJson World Countries Geo Chart</div>
  <div class="ysel" style="left:525px;top:1513px;width:180px">GeoJson \<svg class="chev" style="left:153px;top:12px" viewBox="0 0 22 12"><path d="M2 1.500l9 9 9-9" fill="none" stroke="#111" stroke-width="2.200"/></svg></div>
  <div class="date" style="left:712px;top:1515px" id="b_date">January 5, 2023</div><div class="abs" style="left:712px;top:1543px;width:293px;height:1.600px;background:#73736a"></div>
  <svg class="abs" style="left:889px;top:1517px" width="116" height="30" viewBox="0 0 116 30"><rect x="0" y="4" width="23" height="22" rx="4" fill="#3f86d6"/><path d="M3 10h4q3 0 5 5t5 5h3M3 20h4q2 0 3.500-2.500M13 12.500Q14.500 10 17 10h3M18 7.500l3 2.500-3 2.500M18 17.500l3 2.500-3 2.500" fill="none" stroke="#fff" stroke-width="1.800"/><rect x="30" y="5" width="24" height="22" rx="2.500" fill="#f0f0ee" stroke="#b9b9b7" stroke-width="1"/><path d="M30 7.500q0-2.500 2.500-2.500h19q2.500 0 2.500 2.500V12H30z" fill="#d8453e"/><path d="M33 8.500h18" stroke="#f3b0aa" stroke-width="1.200" stroke-dasharray="2 2"/><text x="42" y="25" text-anchor="middle" font-family="Liberation Sans,sans-serif" font-size="12.500" fill="#333">17</text><path d="M72.500 6.500v17M64 15h17" stroke="#111" stroke-width="4.200"/><rect x="92" y="7" width="22" height="15" rx="1.500" fill="#dfe7ee" stroke="#a9b4bf" stroke-width="1"/><path d="M92 8l11 8 11-8" fill="none" stroke="#a9b4bf" stroke-width="1"/><rect x="99" y="9" width="8" height="9" fill="#4f8fd0"/><text x="103" y="16.500" text-anchor="middle" font-family="Liberation Sans,sans-serif" font-weight="bold" font-size="8" fill="#fff">E</text></svg><div class="bsel" style="left:1014px;top:1513px;width:98px">by</div>
  <!-- pink figure with safari screenshot -->
  <div class="abs" style="left:497px;top:1608px;width:620px;height:130px;background:#f9b0c6"></div>
  <div class="abs" style="left:527px;top:1639px;width:600px;height:23px;background:linear-gradient(90deg,#5d4aa2 0,#694ca4 22%,#4e56ae 52%,#2e62b8 88%,#2a64ba)"></div>
  <div class="abs nw" style="left:545px;top:1640px;font-size:12px;line-height:21px;color:#fff;word-spacing:0"><b style="margin-left:33px">Safari</b><span style="margin-left:18.600px">File</span><span style="margin-left:18.600px">Edit</span><span style="margin-left:18.600px">View</span><span style="margin-left:18.600px">History</span><span style="margin-left:18.600px">Bookmarks</span><span style="margin-left:18.600px">Develop</span><span style="margin-left:18.600px">Window</span><span style="margin-left:18.600px">Help</span></div>
  <svg class="abs" style="left:545px;top:1642px" width="14" height="17" viewBox="0 0 26 31"><path fill="#fff" d="M18.2 0.3c.2 1.6-.5 3.2-1.400 4.300-1 1.200-2.600 2.100-4.100 2-.2-1.600.6-3.200 1.500-4.200C15.200 1.200 16.900.4 18.200.3zM23.600 10.500c-.3.200-2.800 1.600-2.800 4.800 0 3.700 3.300 5 3.400 5-.1.100-.5 1.800-1.700 3.500-1 1.500-2.100 3-3.800 3-1.600 0-2.100-1-4-1-1.900 0-2.500 1-4 1-1.600.1-2.800-1.600-3.900-3.100C4.700 20.600 3.100 15.100 5.300 11.300c1.100-1.900 3.100-3.100 5.200-3.100 1.600 0 3.100 1.100 4.100 1.100 1 0 2.800-1.300 4.800-1.100.8 0 3.100.3 4.600 2.500z"/></svg>
  <div class="abs" style="left:527px;top:1662px;width:600px;height:44px;background:#e9dfe4;border-radius:8px 0 0 0"></div>
  <div class="abs" style="left:527px;top:1706px;width:600px;height:30px;background:#d6ccd2"></div>
  <div class="abs" style="left:545px;top:1678px;width:9px;height:9px;border-radius:50%;background:#c3babf;box-shadow:18px 0 #c3babf,36px 0 #c3babf"></div>
  <svg class="abs" style="left:612px;top:1674px" width="100" height="18" viewBox="0 0 100 18"><rect x="1" y="2" width="16" height="12" rx="2" fill="none" stroke="#a9a0a6" stroke-width="1.500"/><path d="M7 2v12M28 7l3 3 3-3M64 3l-5 5.500 5 5.500M91 3l5 5.500-5 5.500" fill="none" stroke="#a9a0a6" stroke-width="1.600"/></svg>
  <svg class="abs" style="left:880px;top:1674px" width="16" height="18" viewBox="0 0 16 18"><path d="M8 1l6 2v6q0 5-6 8-6-3-6-8V3z" fill="none" stroke="#8d858a" stroke-width="1.500"/><path d="M8 1v16q-6-3-6-8V3z" fill="#8d858a"/></svg>
  <div class="abs" style="left:900px;top:1668px;width:230px;height:26px;border-radius:6px;background:#f0e8ec"></div>
  <!-- shadows cast by front window onto back window -->
  
  <div class="abs" style="left:0;top:50px;width:30px;height:1123px;background:linear-gradient(90deg,rgba(0,0,0,0),rgba(0,0,0,.07))"></div>
  <div class="abs" style="left:1030px;top:50px;width:12px;height:1140px;background:linear-gradient(90deg,rgba(0,0,0,.26),rgba(0,0,0,0))"></div>
  <div class="abs" style="left:1066px;top:50px;width:14px;height:1700px;background:linear-gradient(90deg,rgba(0,0,0,0),rgba(0,0,0,.10))"></div>
 </div>
</div>
<!-- ================= FRONT LEFT CHROME POPUP WINDOW ================= -->
<style>
#fw{left:30px;top:50px;width:1000px;height:1123px;border-radius:20px;background:#f1f1ef;box-shadow:0 0 0 1px rgba(0,0,0,.28),0 26px 44px 4px rgba(0,0,0,.40)}
.tl{position:absolute;width:25px;height:25px;border-radius:50%}
.wtitle{position:absolute;font-weight:bold;font-size:26.300px;line-height:57px;white-space:nowrap}
.url{position:absolute;font-size:29px;line-height:66px;white-space:nowrap;color:#202124;letter-spacing:0.450px}
.para{position:absolute;font-family:"DejaVu Sans","Liberation Sans",sans-serif;font-size:31px;line-height:46px;color:#1c1c1c;white-space:nowrap;letter-spacing:0.480px}
</style>
<div id="fw" class="win">
 <div class="pc" style="left:-30px;top:-50px">
  <!-- title bar -->
  <div class="abs" style="left:30px;top:50px;width:1000px;height:57px;background:#efefed"></div>
  <div class="tl" style="left:45px;top:66px;background:#e0443e;border:1px solid #c33"></div>
  <div class="tl" style="left:85px;top:66px;background:#f1b12f;border:1px solid #d89a20"></div>
  <div class="tl" style="left:126px;top:66px;background:#2fb540;border:1px solid #1f9a30"></div>
  <svg class="abs" style="left:45px;top:66px" width="110" height="26" viewBox="0 0 110 26"><path d="M7.500 7.500l10 10M17.500 7.500l-10 10" stroke="#6a0d09" stroke-width="2.600"/><path d="M46 12.500h13" stroke="#8f5a00" stroke-width="3"/><path d="M87.500 7.500h9l-9 9zM99.500 18.500h-9l9-9z" fill="#0b5a14"/></svg>
  <div class="wtitle" style="left:168px;top:49px;color:#2e2e2e" id="f_title">GeoJson World Coastline TimeZone Tutorial | Robert James Metc...</div>
  <!-- url bar -->
  <div class="abs" style="left:30px;top:107px;width:1000px;height:67px;background:#f5f5f3;border-top:1.500px solid #c6c8d2;border-bottom:1.500px solid #c9ccd6"></div>
  <div class="abs" style="left:40px;top:116px;width:48px;height:48px;border-radius:50%;background:#f9f9f8"></div>
  <svg class="abs" style="left:50px;top:128px" width="30" height="26" viewBox="0 0 30 26"><circle cx="6.500" cy="6" r="3.600" fill="none" stroke="#2a2a2a" stroke-width="2.600"/><path d="M16 6h9" stroke="#2a2a2a" stroke-width="2.800" stroke-linecap="round"/><circle cx="21.500" cy="20" r="3.600" fill="none" stroke="#2a2a2a" stroke-width="2.600"/><path d="M4 20h9.500" stroke="#2a2a2a" stroke-width="2.800" stroke-linecap="round"/></svg>
  <div class="url" style="left:104px;top:107px" id="f_url">rjmprogramming.com.au/ITblog/geojson-world-coastline-timezon...</div>
  <!-- page -->
  <div class="abs" style="left:79px;top:175px;width:873px;height:22px;background:#9f181e;box-shadow:0 2px 3px rgba(120,20,20,.35)"></div>
  <div class="nav" style="left:78px;top:277px" id="f_nav1"><span class="arr" style="transform-origin:100% 50%">←</span> GeoJson World Coastline Primer</div>
  <div class="nav" style="left:78px;top:313px">Tutorial</div>
  <div class="nav" style="left:500px;top:277px" id="f_nav2">GeoJson World Countries Tutorial <span class="arr" style="transform-origin:0 50%;transform:translateX(-2px) scaleX(1.350)">→</span></div>
  <div class="h1" style="left:78px;top:383px" id="f_h1">GeoJson World Coastline TimeZone</div>
  <div class="h1" style="left:78px;top:444px" id="f_h1b">Tutorial</div>
  <!-- heading icons -->
  <div class="abs" style="left:240px;top:440px;width:83px;height:71px;background:#f7d27c"></div>
  <div class="abs" style="left:245px;top:446px;width:26px;height:60px;background:#f6f4a2"></div>
  <div class="abs" style="left:271px;top:446px;width:46px;height:60px;background:#bfe88e"></div>
  <div class="abs nw" style="left:244px;top:463px;font-size:30px;line-height:34px;color:#3a86d4;-webkit-text-stroke:0.900px #3a86d4;font-family:'DejaVu Sans',sans-serif">✂</div>
  <svg class="abs" style="left:268px;top:462px" width="52" height="34" viewBox="0 0 52 34"><g fill="none" stroke-linecap="round" stroke-width="2.400"><circle cx="16" cy="6" r="2.600" fill="#6b3a20" stroke="none"/><path d="M15 10l-3 9M13 12l-5 3M14 12l5 4M12 19l-6 9M12 19l5 5 1 5" stroke="#d03a30"/><circle cx="40" cy="5" r="2.600" fill="#3a2a20" stroke="none"/><path d="M39 9l-3 10M37 11l-5 3M38 11l6 4M36 19l-7 8M36 19l6 4 1 6" stroke="#2c7a3c"/></g></svg>
  <div class="abs" style="left:334px;top:445px;width:50px;height:56px;background:#f5f79e;border:4px solid #fbfb18"></div>
  <div class="abs nw" style="left:337px;top:447px;font-size:47px;line-height:50px;color:#111;-webkit-text-stroke:0.800px #111;font-family:'DejaVu Sans',sans-serif">☞</div>
  <div class="abs" style="left:396px;top:448px;width:41px;height:51px;background:#f4d3ad"></div>
  <svg class="abs" style="left:397px;top:456px" width="40" height="36" viewBox="0 0 40 36"><path d="M2 6q9-4 18 1 9-5 18-1v24q-9-4-18 1-9-5-18-1z" fill="#f4f1e6" stroke="#3f6f9c" stroke-width="2.600"/><path d="M20 7v24" stroke="#3f6f9c" stroke-width="2"/><path d="M6 11q6-2 11 0M6 16q6-2 11 0M6 21q6-2 11 0M23 11q6-2 11 0M23 16q6-2 11 0M23 21q6-2 11 0" stroke="#9a9a90" stroke-width="1.400" fill="none"/></svg>
  <div class="abs" style="left:461px;top:448px;width:42px;height:51px;background:#f4d3ad"></div>
  <svg class="abs" style="left:462px;top:452px" width="41" height="44" viewBox="0 0 41 44"><ellipse cx="20" cy="9" rx="17" ry="6" fill="#8d7348"/><ellipse cx="20" cy="8" rx="10" ry="3" fill="#c8b386"/><rect x="2" y="14" width="37" height="27" fill="#a2865a"/><rect x="2" y="14" width="37" height="5" fill="#4a3a24"/><rect x="2" y="36" width="37" height="5" fill="#4a3a24"/><path d="M4 16.500h34M4 38.500h34" stroke="#d9cba6" stroke-width="2" stroke-dasharray="3 2.500"/><rect x="6" y="21" width="13" height="13" fill="#c2ab7c"/><rect x="22" y="21" width="13" height="13" fill="#b79e6e"/></svg>
  <!-- meta row -->
  <div class="ysel" style="left:78px;top:518px;width:180px">GeoJson \<svg class="chev" style="left:153px;top:12px" viewBox="0 0 22 12"><path d="M2 1.500l9 9 9-9" fill="none" stroke="#111" stroke-width="2.200"/></svg></div>
  <div class="date" style="left:265px;top:520px" id="f_date">January 3, 2023</div><div class="abs" style="left:265px;top:548px;width:294px;height:1.600px;background:#73736a"></div><svg class="abs" style="left:444px;top:522px" width="116" height="30" viewBox="0 0 116 30"><rect x="0" y="4" width="23" height="22" rx="4" fill="#3f86d6"/><path d="M3 10h4q3 0 5 5t5 5h3M3 20h4q2 0 3.500-2.500M13 12.500Q14.500 10 17 10h3M18 7.500l3 2.500-3 2.500M18 17.500l3 2.500-3 2.500" fill="none" stroke="#fff" stroke-width="1.800"/><rect x="30" y="5" width="24" height="22" rx="2.500" fill="#f0f0ee" stroke="#b9b9b7" stroke-width="1"/><path d="M30 7.500q0-2.500 2.500-2.500h19q2.500 0 2.500 2.500V12H30z" fill="#d8453e"/><path d="M33 8.500h18" stroke="#f3b0aa" stroke-width="1.200" stroke-dasharray="2 2"/><text x="42" y="25" text-anchor="middle" font-family="Liberation Sans,sans-serif" font-size="12.500" fill="#333">17</text><path d="M72.500 6.500v17M64 15h17" stroke="#111" stroke-width="4.200"/><rect x="92" y="7" width="22" height="15" rx="1.500" fill="#dfe7ee" stroke="#a9b4bf" stroke-width="1"/><path d="M92 8l11 8 11-8" fill="none" stroke="#a9b4bf" stroke-width="1"/><rect x="99" y="9" width="8" height="9" fill="#4f8fd0"/><text x="103" y="16.500" text-anchor="middle" font-family="Liberation Sans,sans-serif" font-weight="bold" font-size="8" fill="#fff">E</text></svg>
  <div class="bsel" style="left:567px;top:518px;width:99px">by<svg class="chev" style="left:69px;top:12px;width:20px" viewBox="0 0 22 12"><path d="M2 1.500l9 9 9-9" fill="none" stroke="#111" stroke-width="2.200"/></svg></div>
  <!-- figure -->
  <div class="abs" style="left:86px;top:586px;width:471px;height:470px;background:#efefed;border:1px dotted #e4e4e2"></div>
  <div class="abs" style="left:79px;top:603px;width:491px;height:347px;background:#f9afc6"></div>
  <div class="abs" id="f_shot" style="left:81px;top:633px;width:460px;height:288px;background:#f3f3f1;overflow:hidden">
   <svg class="abs" style="left:0;top:30.700px" width="460" height="232.200" viewBox="0 0 360 180" preserveAspectRatio="none"><use href="#wmc" width="360" height="180" stroke="#0a0a0a" stroke-width="2.100" fill="#0a0a0a"/></svg>
   <div class="abs" style="left:0;top:0;width:460px;height:10px;background:linear-gradient(90deg,#5a4aa0,#3a62b4 55%,#2a6cc0)"></div>
   <div class="abs" style="left:0;top:10px;width:460px;height:12px;background:#e6dfe2"></div>
   <div class="abs" style="left:30px;top:13px;width:400px;height:6px;background:repeating-linear-gradient(90deg,#3a3a3a 0 3px,#d6cfd2 3px 5px,#8a8a8a 5px 7px,#d6cfd2 7px 12px);opacity:.75"></div>
   <div class="abs" style="left:6px;top:12px;width:4px;height:4px;border-radius:50%;background:#e0443e;box-shadow:6px 0 #e8b030,12px 0 #3cb83e"></div>
   <div class="abs" style="left:0;top:22px;width:460px;height:10px;background:#f0f0ee"></div>
   <div class="abs" style="left:38px;top:25px;width:62px;height:3px;background:#777"></div>
   <div class="abs" style="left:380px;top:25px;width:64px;height:3px;background:repeating-linear-gradient(90deg,#777 0 4px,transparent 4px 11px)"></div>
   <div class="abs" style="left:157px;top:33px;width:143px;height:67px;background:#f4f4f2;box-shadow:0 1px 5px rgba(0,0,0,.45)"></div>
   <div class="abs" style="left:163px;top:39px;width:46px;height:2.500px;background:#444"></div>
   <div class="abs" style="left:163px;top:49px;width:126px;height:2px;background:#777;box-shadow:0 6px #777,0 12.500px #777"></div>
   <div class="abs" style="left:163px;top:68px;width:60px;height:2px;background:#777"></div>
   <div class="abs" style="left:275px;top:84px;width:20px;height:9px;background:#1a66e0;border-radius:1.500px"></div>
   <div class="abs" style="left:100px;top:64px;width:8px;height:8px;border-radius:50%;background:#2c6a2a;box-shadow:15px 63px #2c6a2a,60px 84px #2c6a2a,142px 101px #2c6a2a,184px 107px #2c6a2a,317px 115px #2c6a2a;opacity:.9"></div>
   <div class="abs" style="left:0;top:264px;width:460px;height:9px;background:#f4f416"></div>
   <div class="abs" style="left:0;top:273px;width:460px;height:15px;background:#141b3c"></div>
   <div class="abs" style="left:24px;top:275px;width:412px;height:11px;border-radius:3px;background:repeating-linear-gradient(90deg,#6fa0e0 0 6px,#2a3560 6px 8px,#e8e8e8 8px 14px,#2a3560 14px 16px,#e05040 16px 22px,#2a3560 22px 24px,#60c060 24px 30px,#2a3560 30px 32px,#c8c8d8 32px 38px,#2a3560 38px 40px);opacity:.92"></div>
  </div>
  <div class="abs nw" style="left:86px;top:967px;width:471px;text-align:center;font-size:24px;line-height:36px;color:#6d6d68" id="f_cap">GeoJson World Coastline TimeZone</div>
  <div class="abs nw" style="left:86px;top:1003px;width:424px;text-align:center;font-size:24px;line-height:36px;color:#6d6d68">Tutorial</div>
  <svg class="abs" style="left:357px;top:1008px" width="26" height="26" viewBox="0 0 26 26"><circle cx="9.500" cy="9.500" r="7" fill="#e8eef2" stroke="#555" stroke-width="2"/><path d="M15 15l8.500 8.500" stroke="#333" stroke-width="4" stroke-linecap="round"/></svg>
  <!-- light blue stripe -->
  <div class="abs" style="left:890px;top:577px;width:42px;height:620px;background:linear-gradient(90deg,#b7d8ee 0,#bfe4f5 12%,#c7e9f7 48%,rgba(226,241,247,.6) 78%,rgba(241,241,239,0));border-radius:0 34px 0 0;-webkit-mask-image:linear-gradient(rgba(0,0,0,.2),#000 18px)"></div>
  <div class="para" style="left:82px;top:1098px" id="f_p1">Luckily for programmers all over, the organization</div>
  <div class="para" style="left:82px;top:1144px" id="f_p2">of TimeZones has had an International flavour in</div>
  <!-- inner scrollbar/shadow column -->
  <div class="abs" style="left:981px;top:174px;width:20px;height:1010px;background:linear-gradient(90deg,#949494,#868686 50%,#8f8f8f)"></div>
  <div class="abs" style="left:1001px;top:174px;width:29px;height:1010px;background:#f2f2f0"></div>
  <div class="abs" style="left:1008px;top:247px;width:16px;height:41px;border-radius:8px;background:#c2c2c2"></div>
 </div>
</div>
<!-- mouse cursor -->
<svg class="abs" style="left:57px;top:66px" width="22" height="34" viewBox="0 0 26 40"><path d="M2 2v28l7-6.500 5.500 12.500 5-2.200-5.500-12 9.500-.5z" fill="#0b0b0b" stroke="#f4f4f4" stroke-width="2" stroke-linejoin="round"/></svg>
<!-- ================= RIGHT CHROME POPUP WINDOW ================= -->
<style>
#rw{left:1080px;top:50px;width:1800px;height:1667px;border-radius:20px 22px 26px 20px;background:#f1f1ef;box-shadow:0 0 0 1px rgba(0,0,0,.3),0 10px 40px rgba(0,0,0,.4)}
.gsq{position:absolute;top:60px;width:32px;height:33px;background:#bfbfbf}
</style>
<div id="rw" class="win">
 <div class="pc" style="left:-1080px;top:-50px">
  <div class="abs" style="left:1080px;top:50px;width:1800px;height:57px;background:#e2e5e6"></div>
  <div class="tl" style="left:1096px;top:66px;background:#cfcfcd;border:1px solid #bdbdbb"></div>
  <div class="tl" style="left:1136px;top:66px;background:#cfcfcd;border:1px solid #bdbdbb"></div>
  <div class="tl" style="left:1176px;top:66px;background:#cfcfcd;border:1px solid #bdbdbb"></div>
  <div class="wtitle" style="left:1614px;top:49px;color:#929290;letter-spacing:0.250px" id="r_title">GeoJson World Countries Geo Chart Tutorial</div>
  <div class="gsq" style="left:2194px;width:34px;background:linear-gradient(135deg,#e0202a,#c4101a)"></div>
  <div class="gsq" style="left:2234px"></div><div class="gsq" style="left:2272px"></div><div class="gsq" style="left:2310px"></div>
  <div class="abs" style="left:1080px;top:107px;width:1800px;height:67px;background:#eff1f1;border-top:1.500px solid #a9abae;border-bottom:2px solid #b9c1c6"></div>
  <div class="abs" style="left:1090px;top:116px;width:48px;height:48px;border-radius:50%;background:#f9f9f8"></div>
  <svg class="abs" style="left:1100px;top:128px" width="30" height="26" viewBox="0 0 30 26"><circle cx="6.500" cy="6" r="3.600" fill="none" stroke="#2a2a2a" stroke-width="2.600"/><path d="M16 6h9" stroke="#2a2a2a" stroke-width="2.800" stroke-linecap="round"/><circle cx="21.500" cy="20" r="3.600" fill="none" stroke="#2a2a2a" stroke-width="2.600"/><path d="M4 20h9.500" stroke="#2a2a2a" stroke-width="2.800" stroke-linecap="round"/></svg>
  <div class="url" style="left:1155px;top:107px;letter-spacing:0.400px" id="r_url">rjmprogramming.com.au/PHP/images_found.php?duration=0&amp;ftitle=GeoJson%20World%20Countries%20Geo%20Chart%20T...</div>
  <!-- page content -->
  <div class="abs nw" style="left:1081px;top:179px;font-family:'Liberation Serif',serif;font-size:20px;line-height:26px;color:#000" id="r_cap">GeoJson World Countries Geo Chart Tutorial</div>
  <div class="abs" style="left:1447px;top:180px;width:22px;height:21px;background:linear-gradient(135deg,#e2222c,#c8121c)"></div>
  <div class="abs" style="left:1471px;top:180px;width:63px;height:21px;background:linear-gradient(90deg,#d2d2d2 0 19px,#dcdcdc 19px 21px,#d2d2d2 21px 41px,#dcdcdc 41px 43px,#d2d2d2 43px)"></div>
  <div class="abs" style="left:1081px;top:236px;width:1770px;height:2px;background:#f5e9df"></div>
  <div class="abs" style="left:1081px;top:232px;width:86px;height:10px;background:#e4c046"></div>
  <!-- embedded screenshot goes here (part 50) -->
  <div id="shot" class="abs" style="left:1080px;top:379px;width:1769px;height:1105px;overflow:hidden;background:#1b2a5c">
  <div class="pc" style="left:-1080px;top:-379px">
<!-- ======== embedded Safari screenshot ======== -->
<style>
.smb{position:absolute;top:379px;font-size:16.200px;line-height:30px;color:#fff;white-space:nowrap;font-weight:500;-webkit-text-stroke:0.300px #fff}
.stab{position:absolute;top:474px;height:33px;font-size:13.400px;line-height:33px;color:#8d858b;white-space:nowrap}
.tbl{position:absolute;background:#f0f0ee;border-top:1.600px solid #2e2e2e;border-left:1.600px solid #2e2e2e;border-right:1.500px solid #fbfbfb;border-bottom:1.500px solid #fbfbfb}
.tms{font-family:"Liberation Serif",serif;font-weight:bold;white-space:nowrap;position:absolute}
</style>
<div class="abs" style="left:1080px;top:379px;width:1770px;height:31px;background:linear-gradient(90deg,#5f4a9e,#6b4da3 10%,#5a51a6 38%,#2f68b8 60%,#1a6dbe 80%,#1c64b4)"></div>
<svg class="abs" style="left:1107px;top:384px" width="17" height="20" viewBox="0 0 26 31"><path fill="#fff" d="M18.2 0.3c.2 1.6-.5 3.2-1.400 4.300-1 1.200-2.600 2.100-4.100 2-.2-1.600.6-3.200 1.500-4.200C15.200 1.200 16.900.4 18.200.3zM23.600 10.500c-.3.200-2.800 1.600-2.800 4.800 0 3.700 3.300 5 3.400 5-.1.100-.5 1.800-1.700 3.500-1 1.500-2.100 3-3.800 3-1.600 0-2.100-1-4-1-1.900 0-2.500 1-4 1-1.600.1-2.800-1.600-3.900-3.100C4.700 20.600 3.100 15.100 5.300 11.300c1.100-1.900 3.100-3.100 5.200-3.100 1.600 0 3.100 1.100 4.100 1.100 1 0 2.800-1.300 4.800-1.100.8 0 3.100.3 4.600 2.500z"/></svg>
<div class="smb" style="left:1150px;font-weight:bold" id="s_saf">Safari</div>
<div class="smb" style="left:1223px">File</div>
<div class="smb" style="left:1274px">Edit</div>
<div class="smb" style="left:1329px">View</div>
<div class="smb" style="left:1390px">History</div>
<div class="smb" style="left:1469px" id="s_bm">Bookmarks</div>
<div class="smb" style="left:1577px">Develop</div>
<div class="smb" style="left:1663px">Window</div>
<div class="smb" style="left:1747px">Help</div>
<!-- status icons -->
<svg class="abs" style="left:2466px;top:384px" width="16" height="22" viewBox="0 0 16 22"><path d="M3 6l9.500 9L8 19V3l4.500 4L3 16" fill="none" stroke="#fff" stroke-width="1.700" stroke-linejoin="round"/></svg>
<svg class="abs" style="left:2503px;top:386px" width="34" height="17" viewBox="0 0 34 17"><rect x="1" y="1.500" width="28" height="14" rx="3.500" fill="#fff" opacity=".95"/><path d="M31 6v5q2-.8 2-2.500T31 6z" fill="#fff"/><path d="M16.500 2.500l-6 7h4l-1.500 5 6.500-7.500h-4.200z" fill="#2b63b6"/></svg>
<svg class="abs" style="left:2556px;top:384px" width="26" height="20" viewBox="0 0 38 28"><path d="M2.500 10.500q16.500-14 33 0" fill="none" stroke="#fff" stroke-width="4" stroke-linecap="round"/><path d="M8.500 16.500q10.500-8.500 21 0" fill="none" stroke="#fff" stroke-width="4" stroke-linecap="round"/><path d="M14 22q5-4 10 0l-5 5z" fill="#fff"/></svg>
<svg class="abs" style="left:2600px;top:385px" width="19" height="19" viewBox="0 0 30 28"><circle cx="12" cy="11.500" r="8.500" fill="none" stroke="#fff" stroke-width="3.400"/><path d="M18.500 18l8 8" stroke="#fff" stroke-width="3.800" stroke-linecap="round"/></svg>
<svg class="abs" style="left:2638px;top:385px" width="20" height="19" viewBox="0 0 32 30"><rect x="2" y="2" width="28" height="12" rx="6" fill="none" stroke="#fff" stroke-width="2.800"/><circle cx="9" cy="8" r="3.600" fill="#fff"/><rect x="2" y="16.500" width="28" height="12" rx="6" fill="#fff"/><circle cx="23" cy="22.500" r="3.600" fill="#2b63b6"/></svg>
<div class="smb" style="left:2678px" id="s_dt">Wed 4 Jan</div>
<div class="smb" style="left:2767px">1:22 pm</div>
<!-- safari window -->
<div class="abs" style="left:1080px;top:409px;width:1770px;height:1020px;background:#ece2e7;border-radius:11px 11px 10px 0;box-shadow:0 0 0 1px rgba(60,40,80,.35)"></div>
<div class="abs" style="left:1104px;top:434px;width:16px;height:16px;border-radius:50%;background:#cfc6cb;box-shadow:24.500px 0 #cfc6cb,49px 0 #cfc6cb"></div>
<svg class="abs" style="left:1198px;top:428px" width="160" height="28" viewBox="0 0 160 28"><rect x="2.500" y="5.500" width="21" height="16" rx="3" fill="none" stroke="#aaa1a7" stroke-width="1.800"/><path d="M10 5.500v16" stroke="#aaa1a7" stroke-width="1.800"/><path d="M5 9.500h3M5 12.500h3" stroke="#aaa1a7" stroke-width="1.200"/><path d="M44 12l4 4 4-4" fill="none" stroke="#b5acb2" stroke-width="2"/><path d="M95 5l-8 8.500 8 8.500" fill="none" stroke="#b0a7ad" stroke-width="2.200"/><path d="M128 5l8 8.500-8 8.500" fill="none" stroke="#cdc4ca" stroke-width="2.200"/></svg>
<svg class="abs" style="left:1571px;top:430px" width="18" height="22" viewBox="0 0 18 22"><path d="M9 1.500l7 2.500v7q0 6-7 9.500Q2 17 2 11V4z" fill="none" stroke="#8f878d" stroke-width="1.700"/><path d="M9 1.500v19Q2 17 2 11V4z" fill="#8f878d"/></svg>
<div class="abs" style="left:1608px;top:426px;width:713px;height:32px;border-radius:8px;background:#efe6eb;box-shadow:0 0 0 1px #e2d9de"></div>
<svg class="abs" style="left:1868px;top:434px" width="11" height="15" viewBox="0 0 11 15"><rect x="1" y="6.500" width="9" height="7.500" rx="1.500" fill="#9a9298"/><path d="M3 7V4.500a2.500 2.500 0 015 0V7" fill="none" stroke="#9a9298" stroke-width="1.500"/></svg>
<div class="abs nw" style="left:1885px;top:426px;font-size:16.600px;line-height:32px;color:#777077" id="s_url">rjmprogramming.com.au</div>
<svg class="abs" style="left:2299px;top:431px" width="20" height="22" viewBox="0 0 20 22"><path d="M15.500 7.500A7 7 0 1017 12.500" fill="none" stroke="#857d83" stroke-width="1.700"/><path d="M11 1.500l5 5.500-6 1.500z" fill="#857d83"/></svg>
<svg class="abs" style="left:2712px;top:426px" width="120" height="32" viewBox="0 0 120 32"><path d="M8 13H4.500v15h17V13H18M13 20V2.500M8 7l5-5 5 5" fill="none" stroke="#b0a7ad" stroke-width="1.800"/><path d="M59 6v20M49 16h20" stroke="#b0a7ad" stroke-width="1.800"/><rect x="95.500" y="7.500" width="7.500" height="7.500" rx="1.500" fill="none" stroke="#c0b7bd" stroke-width="1.600"/><rect x="106.500" y="7.500" width="7.500" height="7.500" rx="1.500" fill="none" stroke="#c0b7bd" stroke-width="1.600"/><rect x="95.500" y="18.500" width="7.500" height="7.500" rx="1.500" fill="none" stroke="#c0b7bd" stroke-width="1.600"/><rect x="106.500" y="18.500" width="7.500" height="7.500" rx="1.500" fill="none" stroke="#c0b7bd" stroke-width="1.600"/></svg>
<!-- tab bar -->
<div class="abs" style="left:1080px;top:473px;width:1574px;height:34px;background:#d9d0d6;border-top:1px solid #cfc6cc;background-image:repeating-linear-gradient(90deg,transparent 0 196px,#c9c0c6 196px 197px)"></div>
<div class="abs" style="left:2654px;top:473px;width:196px;height:34px;background:#ebe1e6"></div>
<div class="stab" style="left:1110px"><b style="font-size:14px;letter-spacing:-1px;color:#9a9298">cP</b>&nbsp; WebHost Mana...</div>
<div class="stab" style="left:1308px"><span style="font-size:8px;font-weight:bold;vertical-align:-6px;color:#a59ca2">PMA</span></div>
<div class="stab" style="left:1334px">27.54.94.234 / l...</div>
<div class="abs" style="left:1522px;top:481px;width:18px;height:18px;border-radius:4px;background:#bdb4ba;color:#e6dde2;font-size:12px;font-weight:bold;line-height:18px;text-align:center">G</div>
<div class="stab" style="left:1548px">geojson.xyz</div>
<svg class="abs" style="left:1702px;top:481px" width="18" height="18" viewBox="0 0 18 18"><circle cx="9" cy="9" r="7.500" fill="none" stroke="#8d858b" stroke-width="1.600"/><path d="M12.500 5.500l-2 5-5 2 2-5z" fill="#8d858b"/></svg>
<div class="stab" style="left:1727px">swift_map_mor...</div>
<svg class="abs" style="left:1897px;top:480px" width="20" height="19" viewBox="0 0 20 19"><path d="M10 1.500l2.600 5.500 6 .8-4.400 4.100 1.100 5.900L10 14.900l-5.300 2.900 1.100-5.900L1.400 7.800l6-.8z" fill="none" stroke="#7f777d" stroke-width="1.600" stroke-linejoin="round"/></svg>
<div class="stab" style="left:1923px" id="s_tab">Display GeoJSO...</div>
<div class="stab" style="left:2101px;font-weight:bold;font-size:15px;letter-spacing:-1.500px;color:#8a8288">W<span style="font-size:9px;vertical-align:6px">3</span></div>
<div class="stab" style="left:2128px">HTML area tag</div>
<svg class="abs" style="left:2290px;top:480px" width="20" height="19" viewBox="0 0 20 19"><path d="M10 1.500l2.600 5.500 6 .8-4.400 4.100 1.100 5.900L10 14.900l-5.300 2.900 1.100-5.900L1.400 7.800l6-.8z" fill="none" stroke="#7f777d" stroke-width="1.600" stroke-linejoin="round"/></svg>
<div class="stab" style="left:2317px">Display GeoJSO...</div>
<svg class="abs" style="left:2487px;top:480px" width="20" height="20" viewBox="0 0 20 20"><circle cx="10" cy="10" r="9" fill="#918990"/><path d="M5.500 17v-5q-1.500-3 .5-5.500 1-.5 2 .5 2-.5 4 0 1-1 2-.5 2 2.500.5 5.500v5z" fill="#e2d9de"/></svg>
<div class="stab" style="left:2513px">Display GeoJSO...</div>
<svg class="abs" style="left:2683px;top:480px" width="22" height="20" viewBox="0 0 22 20"><path d="M3 17q2-9 12-12l4-3-2 5q-4 1-7 4-3 3-4 6z" fill="#d5ccd2" stroke="#c3bac0" stroke-width="1"/></svg>
<div class="stab" style="left:2710px;color:#a39ba1">Display GeoJSO...</div>
<!-- web page -->
<div class="abs" style="left:1080px;top:507px;width:1770px;height:922px;background:#ee9533"></div>
<div class="abs" id="wmap2" style="left:1080px;top:507px;width:509px;height:255px;background:#f1f1ef;overflow:hidden;box-shadow:0 1px 2px rgba(120,60,0,.4)">
 <svg class="abs" style="left:0;top:0" width="509" height="254.700" viewBox="0 0 360 180" preserveAspectRatio="none"><use href="#wmb" width="360" height="180" stroke="#1a1a1a" stroke-width="0.900"/><use href="#wmc" width="360" height="180" stroke="#0c0c0c" stroke-width="1.500" fill="#0c0c0c"/></svg>
</div>
<div class="tms" style="left:1627px;top:509px;font-size:45.500px;line-height:58px;color:#0c0505" id="s_h1">GeoJSON World Countries</div>
<div class="tms" style="left:2197.500px;top:664px;font-size:26.700px;line-height:36px;color:#3b1fb4;text-decoration:underline;text-decoration-thickness:2.500px" id="s_link">:/<span id="s_lk2">naturalearth-3.3.0/ne_50m_admin_0_scale_rank.geojs</span>on</div>
<div class="abs nw" style="left:1472px;top:705px;width:117px;height:23px;background:#efdcc3;font-size:13.500px;line-height:23px;color:#3a3026;padding-left:5px">South Island <span style="display:inline-block;width:15px;height:10px;background:#1d2a6c;vertical-align:-1px;margin-left:3px;box-shadow:inset 6px 4px 0 -1px #c03a4a"></span></div>
<!-- page inner scrollbar -->
<div class="abs" style="left:2832px;top:507px;width:18px;height:922px;background:linear-gradient(90deg,#e98f2c,#f2a847 30%,#f0a23e 75%,#e58a28)"></div>
<div class="abs" style="left:2836.500px;top:512px;width:10px;height:475px;border-radius:5px;background:#f4b052"></div>
<!-- table -->
<div class="abs" style="left:1078px;top:835px;width:1754px;height:600px;background:#e6e6e6;border-top:2px solid #f2f2f2;border-right:2px solid #222;border-bottom:2px solid #222"></div>
<div class="tbl" style="left:1085px;top:840px;width:1741px;height:32px"></div>
<div class="tbl" style="left:1085px;top:874.500px;width:871px;height:33px"></div>
<div class="tbl" style="left:1958px;top:874.500px;width:868px;height:33px"></div>
<div class="tms" style="left:1466px;top:877px;font-size:22.500px;line-height:28px;color:#111" id="s_mc">Map Chart</div>
<div class="tms" style="left:2341px;top:877px;font-size:22.500px;line-height:28px;color:#111">Geo Chart</div>
<div class="tbl" style="left:1085px;top:910.500px;width:871px;height:524px;background:#b9b9b9"></div>
<div class="tbl" style="left:1958px;top:910.500px;width:868px;height:524px;background:#f1f1ef"></div>
<div class="tms" style="left:1100px;top:922px;font-size:45.500px;line-height:60px;color:#0a0a0a" id="s_ntp">Nearby TimeZone Places</div>
<!-- google satellite map -->
<svg class="abs" style="left:1100px;top:1010px" width="566" height="404" viewBox="0 0 566 404">
<defs><linearGradient id="gland" x1="0" y1="0" x2="1" y2="1"><stop offset="0" stop-color="#a88a62"/><stop offset=".5" stop-color="#a4835a"/><stop offset="1" stop-color="#9a7a56"/></linearGradient><filter id="gblur" x="-5%" y="-5%" width="110%" height="110%"><feGaussianBlur stdDeviation="1.700"/></filter><filter id="gblur2"><feGaussianBlur stdDeviation="9"/></filter><g id="pin"><path d="M0 0C-1-9-11.500-14-11.500-23a11.500 11.500 0 0123 0C11.500-14 1-9 0 0z" fill="#f0605c" stroke="#b03a34" stroke-width="1.200"/><circle cx="0" cy="-23" r="3.800" fill="#4a1512"/></g></defs>
<rect width="566" height="404" fill="url(#gland)"/>
<g filter="url(#gblur2)" opacity=".55"><ellipse cx="256" cy="270" rx="48" ry="35" fill="#b09066"/><ellipse cx="484" cy="158" rx="44" ry="36" fill="#b09066"/><ellipse cx="449" cy="129" rx="28" ry="21" fill="#8a6c48"/><ellipse cx="504" cy="293" rx="37" ry="36" fill="#b09066"/><ellipse cx="370" cy="287" rx="23" ry="21" fill="#8a6c48"/><ellipse cx="36" cy="111" rx="46" ry="24" fill="#86694a"/><ellipse cx="263" cy="234" rx="45" ry="28" fill="#86694a"/><ellipse cx="166" cy="101" rx="21" ry="13" fill="#a07c54"/><ellipse cx="565" cy="403" rx="45" ry="28" fill="#a07c54"/><ellipse cx="429" cy="256" rx="19" ry="17" fill="#86694a"/><ellipse cx="227" cy="357" rx="30" ry="28" fill="#8a6c48"/><ellipse cx="0" cy="164" rx="47" ry="32" fill="#b09066"/><ellipse cx="401" cy="228" rx="36" ry="32" fill="#b89a6e"/><ellipse cx="153" cy="126" rx="29" ry="25" fill="#b09066"/><ellipse cx="67" cy="175" rx="21" ry="16" fill="#8a6c48"/><ellipse cx="276" cy="307" rx="24" ry="14" fill="#86694a"/><ellipse cx="414" cy="140" rx="39" ry="27" fill="#8a6c48"/><ellipse cx="560" cy="100" rx="46" ry="30" fill="#86694a"/><ellipse cx="501" cy="164" rx="31" ry="25" fill="#86694a"/><ellipse cx="57" cy="401" rx="25" ry="13" fill="#94744e"/><ellipse cx="345" cy="352" rx="30" ry="17" fill="#8a6c48"/><ellipse cx="330" cy="174" rx="37" ry="30" fill="#94744e"/><ellipse cx="72" cy="279" rx="45" ry="42" fill="#b89a6e"/><ellipse cx="103" cy="147" rx="47" ry="29" fill="#86694a"/><ellipse cx="107" cy="325" rx="48" ry="41" fill="#b89a6e"/><ellipse cx="220" cy="247" rx="21" ry="11" fill="#8a6c48"/><ellipse cx="22" cy="393" rx="26" ry="18" fill="#a07c54"/><ellipse cx="238" cy="375" rx="34" ry="20" fill="#86694a"/><ellipse cx="408" cy="121" rx="25" ry="21" fill="#86694a"/><ellipse cx="349" cy="123" rx="25" ry="22" fill="#b89a6e"/><ellipse cx="39" cy="225" rx="26" ry="15" fill="#8a6c48"/><ellipse cx="209" cy="274" rx="22" ry="13" fill="#94744e"/><ellipse cx="255" cy="201" rx="41" ry="33" fill="#86694a"/><ellipse cx="79" cy="111" rx="19" ry="16" fill="#94744e"/><ellipse cx="545" cy="106" rx="38" ry="20" fill="#b09066"/><ellipse cx="176" cy="142" rx="20" ry="16" fill="#b09066"/><ellipse cx="417" cy="374" rx="42" ry="23" fill="#a07c54"/><ellipse cx="545" cy="204" rx="21" ry="20" fill="#b09066"/></g>
<g filter="url(#gblur)"><path d="M408.1 -9.3L568.2 -9.3L568.2 406.9L469.2 406.9L448.8 369.0L425.6 325.4L402.3 281.7L377.5 257.0L373.2 204.6L390.6 142.0L384.8 107.1L392.1 78.0L397.9 48.9L403.7 19.8Z" fill="#8c755e"/><path d="M483.8 165.3L568.2 153.7L568.2 281.7L512.9 310.8L469.2 252.6Z" fill="#9a5a3c" opacity=".35"/><path d="M0.1 -9.3L408.1 -9.3L403.7 19.8L397.9 48.9L392.1 78.0L384.8 107.1L373.2 124.6L352.8 137.7L323.7 144.9L297.5 149.3L291.7 136.2L280.0 133.3L262.6 137.7L250.9 144.9L236.4 153.7L210.2 149.3L169.4 142.0L128.7 136.2L85.0 133.3L63.2 127.5L57.4 114.4L32.7 107.1L0.1 104.2Z" fill="#121d48"/><path d="M218.9 149.3L236.4 147.9L262.6 137.7L280.0 133.9L293.1 137.7L298.1 150.2L285.9 162.4L268.4 177.0L258.2 185.7L250.9 177.0L239.3 165.3Z" fill="#2a3a2c"/><path d="M257.3 179.9L259.7 200.2L250.9 220.6L242.8 238.1L245.1 261.4L250.9 281.7L268.4 305.0L285.9 322.5L303.3 331.2L306.2 342.9L297.5 354.5L306.2 374.9L312.1 404.0" fill="none" stroke="#1f2a20" stroke-width="3.600" stroke-linejoin="round"/><path d="M230.6 207.5L245.1 204.6L248.0 214.8L234.9 220.6Z" fill="#2a3626"/><path d="M293.1 191.5L301.9 185.7L315.0 214.8L338.2 246.8L356.3 267.2L347.6 274.5L326.6 252.6L306.2 223.5Z" fill="#16224c"/><path d="M373.7 204.6L379.6 206.1L372.6 238.1L366.2 264.3L359.2 262.8L366.8 238.1Z" fill="#16224c"/><path d="M347.6 262.8L356.3 259.9L377.5 257.0L402.3 281.7L425.6 325.4L448.8 369.0L469.2 406.9L396.5 406.9L376.1 354.5L361.5 310.8Z" fill="#14204c"/><path d="M392.1 118.8L396.5 118.8L397.0 136.2L393.0 137.7Z" fill="#1a2748"/></g>
<rect width="566" height="404" fill="#000" opacity=".25"/>
<path d="M338.500 0v404M0 112.500h566" stroke="#cfc8bc" stroke-width="1" opacity=".6"/>
<g fill="#b2b2ac" stroke="#2a2a2a" stroke-width="3" paint-order="stroke" stroke-linejoin="round" font-weight="bold" opacity=".78"><text x="364.4" y="30.0" font-size="20.5" font-family="Liberation Sans,sans-serif" textLength="85.9" lengthAdjust="spacingAndGlyphs">Lebanon</text><text x="427.0" y="76.6" font-size="20.5" font-family="Liberation Sans,sans-serif" textLength="71.3" lengthAdjust="spacingAndGlyphs">Damasc</text><text x="431.4" y="96.9" font-size="18" font-family="DejaVu Sans,sans-serif">دمشق</text><text x="411.0" y="127.5" font-size="20.5" font-family="Liberation Sans,sans-serif" textLength="69.8" lengthAdjust="spacingAndGlyphs">Jordan</text><text x="349.9" y="155.1" font-size="20.5" font-family="Liberation Sans,sans-serif" textLength="56.8" lengthAdjust="spacingAndGlyphs">Israel</text><text x="287.3" y="127.5" font-size="20.5" font-family="Liberation Sans,sans-serif" textLength="91.7" lengthAdjust="spacingAndGlyphs">Jerusalem</text><text x="169.4" y="113.5" font-size="20.5" font-family="Liberation Sans,sans-serif" textLength="93.1" lengthAdjust="spacingAndGlyphs">Alexandria</text><text x="170.9" y="132.7" font-size="18" font-family="DejaVu Sans,sans-serif">الإسكندرية</text><text x="234.9" y="156.6" font-size="20.5" font-family="Liberation Sans,sans-serif" textLength="45.1" lengthAdjust="spacingAndGlyphs">Cairo</text><text x="232.0" y="174.6" font-size="18" font-family="DejaVu Sans,sans-serif">القاهرة</text><text x="181.7" y="310.8" font-size="20.5" font-family="Liberation Sans,sans-serif" textLength="58.2" lengthAdjust="spacingAndGlyphs">Egypt</text><text x="291.7" y="2.9" font-size="16" font-family="DejaVu Sans,sans-serif">سوريا</text><text x="466.3" y="374.9" font-size="16" font-family="DejaVu Sans,sans-serif">المنورة</text></g>
<use href="#pin" x="360.1" y="121.7"/><use href="#pin" x="381.3" y="118.8"/><use href="#pin" x="256.8" y="177.0"/><use href="#pin" x="184.0" y="287.6"/>
<g font-family="Liberation Sans,sans-serif" font-size="19.500" fill="#fff" stroke="#fff" stroke-width=".5"><text x="20.400" y="302" textLength="272.700">For development purposes only</text><text x="382" y="302" textLength="272.700">For development purposes only</text></g>
</svg>
<div class="abs nw" style="left:1116px;top:1396px;font-size:26px;line-height:30px;color:#fff;letter-spacing:-0.600px;font-weight:500" id="s_goog">Google</div>
<!-- grey area right of map -->
<div class="abs" style="left:1666px;top:1010px;width:290px;height:420px;background:#b9b9b9"></div>
<!-- zoom control -->
<div class="abs" style="left:1596px;top:1285px;width:57px;height:113px;background:#f4f4f2;border-radius:2px;box-shadow:0 1px 4px rgba(0,0,0,.35)"></div>
<svg class="abs" style="left:1596px;top:1285px" width="57" height="113" viewBox="0 0 57 113"><path d="M17 28h24M29 16v24M17 86h24" stroke="#666" stroke-width="5.200"/><path d="M10 56.500h37" stroke="#e2e2e2" stroke-width="1"/></svg>
<!-- attribution strip -->
<div class="abs" style="left:1090px;top:1415px;width:866px;height:15px;background:rgba(232,232,232,.66)"></div><div class="abs" style="left:1166px;top:1417px;width:24px;height:11px;border:1px solid #999;border-radius:2px;background:rgba(240,240,240,.7)"></div>
<div class="abs nw" style="left:1202px;top:1413px;font-size:14.600px;line-height:18px;color:#6f6f6f" id="s_attr">Map data ©2023 Google Imagery ©2023 TerraMetrics &nbsp;|&nbsp; Terms of Use</div>
<!-- ===== geo chart side ===== -->
<div class="abs" style="left:1961px;top:915px;width:846px;height:67px;background:#17171b"></div>
<div class="abs nw" style="left:2217px;top:929px;font-size:22px;line-height:38px;font-weight:bold;color:#f4f4f4" id="s_gc">Egypt <span style="display:inline-block;width:24px;height:15px;vertical-align:2px;margin:0 2px;background:linear-gradient(#d8353a 0 33%,#f3f3f3 33% 66%,#222 66%);border-radius:2px"></span> Nearby TimeZone Pl...</div>
<div class="abs" style="left:2741px;top:917px;width:43px;height:57px;background:#3a9a3e;clip-path:polygon(0 0,100% 0,100% 82%,0 100%)"></div>
<svg class="abs" style="left:2744px;top:920px" width="40" height="48" viewBox="0 0 40 48"><rect x="2" y="2" width="32" height="40" rx="2" fill="#eeeee6" stroke="#b8b8a8"/><path d="M6 9h22M6 14h24M6 19h20M6 24h24M6 29h18M6 34h22" stroke="#a0a090" stroke-width="1.600" stroke-dasharray="4 1.500"/><path d="M34 22l4 4-16 17-6 2 2-6z" fill="#e8a23a" stroke="#a86a1a" stroke-width="1"/><path d="M34 22l4 4-2.500 2.500-4-4z" fill="#e06a7a"/></svg>
<div class="abs" style="left:1961px;top:1000px;width:846px;height:1.500px;background:#2a2a2a"></div>
<!-- faint map outlines -->
<svg class="abs" style="left:1961px;top:1002px" width="870" height="428" viewBox="0 0 870 428">
 <g fill="none" stroke="#dadad8" stroke-width="1.100" stroke-linejoin="round">
  <path d="M0 40l60 8 100 6 50-4 45 7 24 8 18 5 42 15 27-12 32-19 26-4 26 7 16 10 21 7 32-3 29-14"/>
  <path d="M430 50l10 14 12-2-6-10zM480 66l14 6 12-4"/>
  <path d="M548 57l6 10 8 30 10 30 7 24"/><path d="M559 74l20 77"/><path d="M602 77l-8 30-8 26-4 18"/>
  <path d="M572 40l8-14 14-2 8 4-2 20-8 14-6 10" stroke-dasharray="2 1.500"/>
  <path d="M582 151l45 9 76-61-38-47 83-27 59 13"/>
  <path d="M476 140l12-4 10 22 20 60 27 54 31 50 32 72-9 27"/>
  <path d="M582 151l-18 58 36 14 40 72 5 22 27 32 27 40 27 32"/>
  <path d="M640 360l10-6 8 12-6 10zM600 400l30-4 8 30"/>
 </g>
 <path d="M180 195v233M0 404h836a8 8 0 010 16" fill="none" stroke="#dcdcda" stroke-width="1.500"/>
 <path d="M806 18v400" stroke="#f6f5c6" stroke-width="3.500"/>
 <path d="M828 18v400" stroke="#e6e6e4" stroke-width="1"/>
</svg>
<!-- markers on geo chart -->
<svg class="abs" style="left:2505px;top:1036px" width="70" height="40" viewBox="0 0 70 40"><clipPath id="pfc"><circle cx="17" cy="20" r="12"/></clipPath><g clip-path="url(#pfc)"><rect x="5" y="8" width="24" height="8" fill="#111"/><rect x="5" y="16" width="24" height="8" fill="#f2f2f2"/><rect x="5" y="24" width="24" height="8" fill="#1f8a3c"/><path d="M5 8l12 12-12 12z" fill="#d8232c"/></g><g transform="translate(42,18) rotate(-12)"><path d="M-13-7q7-3 13 1 6-4 13-1v15q-7-3-13 1-6-4-13-1z" fill="#f2e4b4" stroke="#b8862c" stroke-width="2.200"/><path d="M0-6v15" stroke="#b8862c" stroke-width="1.500"/></g></svg>
<svg class="abs" style="left:2376px;top:1104px" width="36" height="34" viewBox="-18 -17 36 34"><g transform="rotate(-12)"><path d="M-13-7q7-3 13 1 6-4 13-1v15q-7-3-13 1-6-4-13-1z" fill="#f2e4b4" stroke="#b8862c" stroke-width="2.200"/><path d="M0-6v15" stroke="#b8862c" stroke-width="1.500"/></g></svg>
<svg class="abs" style="left:2303px;top:1234px" width="30" height="30" viewBox="0 0 30 30"><path d="M2 14L15 2l13 12z" fill="#a0452c"/><rect x="5" y="13" width="20" height="14" fill="#ecd9b0"/><rect x="12" y="17" width="6" height="10" fill="#7a4a2a"/><rect x="6" y="16" width="4" height="5" fill="#7ab0d8"/><rect x="20" y="16" width="4" height="5" fill="#7ab0d8"/><path d="M2 27h26" stroke="#5a8a3a" stroke-width="2"/></svg>
<!-- ===== wikipedia popup window ===== -->
<style>
#wk{left:1600px;top:583px;width:615px;height:614px;border-radius:12px;background:#f1f1ef;box-shadow:0 0 0 1px rgba(90,60,30,.35),0 8px 24px rgba(0,0,0,.35)}
.wl{position:absolute;left:1623px;font-size:14.800px;line-height:22px;color:#2245a8;white-space:nowrap}
.wt{position:absolute;font-size:14.500px;line-height:22px;white-space:nowrap;color:#2245a8}
</style>
<div id="wk" class="win">
 <div class="pc" style="left:-1600px;top:-583px">
  <div class="abs" style="left:1600px;top:583px;width:615px;height:36px;background:#f2f0ee;border-bottom:1.500px solid #ead6d8"></div>
  <div class="abs" style="left:1609px;top:593px;width:16px;height:16px;border-radius:50%;background:#e8443e"></div>
  <div class="abs" style="left:1634px;top:593px;width:16px;height:16px;border-radius:50%;background:#efb02f"></div>
  <div class="abs" style="left:1659px;top:593px;width:16px;height:16px;border-radius:50%;background:#3cb83e"></div>
  <div class="abs nw" style="left:1823px;top:588px;font-family:'Liberation Serif',serif;font-size:17px;line-height:26px;color:#222">W</div>
  <div class="abs nw" style="left:1850px;top:588px;font-size:16.300px;line-height:26px;color:#333" id="w_t">en.wikipedia.org</div>
  <svg class="abs" style="left:1978px;top:592px" width="13" height="17" viewBox="0 0 11 15"><rect x="1" y="6.500" width="9" height="7.500" rx="1" fill="#8a8288"/><path d="M3 7V4.500a2.500 2.500 0 015 0V7" fill="none" stroke="#8a8288" stroke-width="1.500"/></svg>
  <!-- scrollbar thumb -->
  <div class="abs" style="left:2201px;top:622px;width:9px;height:21px;border-radius:4px;background:#bdbdbd"></div>
  <!-- personal bar -->
  <svg class="abs" style="left:1826px;top:630px" width="16" height="18" viewBox="0 0 16 18"><circle cx="8" cy="5" r="4" fill="#555"/><path d="M1 17q0-8 7-8t7 8z" fill="#555"/></svg>
  <div class="wt" style="left:1848px;top:630px;color:#555" id="w_nl">Not logged in</div>
  <div class="wt" style="left:1946px;top:630px">Talk</div>
  <div class="wt" style="left:1983px;top:630px" id="w_co">Contributions</div>
  <div class="wt" style="left:2081px;top:630px">Create account</div>
  <div class="wt" style="left:2141px;top:656px">Log in</div>
  <!-- logo -->
  <svg class="abs" style="left:1634px;top:632px" width="130" height="130" viewBox="0 0 130 130">
   <defs><radialGradient id="wg" cx=".38" cy=".3" r=".8"><stop offset="0" stop-color="#fbfbfb"/><stop offset=".45" stop-color="#d4d4d4"/><stop offset=".8" stop-color="#8e8e8e"/><stop offset="1" stop-color="#5e5e5e"/></radialGradient></defs>
   <circle cx="65" cy="65" r="61" fill="url(#wg)"/>
   <path d="M22 30l22-10 12 6 4 12-18 8-14-4z" fill="#3a3a3a" opacity=".85"/>
   <g fill="none" stroke="#8a8a8a" stroke-width="1.300" opacity=".9"><path d="M10 50q30-14 55-6t58 4M6 78q34-10 60-4t56-2M18 104q26-10 48-6t44-6M40 10q-8 30-4 55t4 58M72 6q-6 30 0 58t-2 60M100 18q-10 28-2 52t-6 46"/></g>
   <g font-family="Liberation Serif,serif" font-weight="bold" fill="#2c2c2c"><text x="30" y="66" font-size="19">Ω</text><text x="68" y="52" font-size="17" transform="rotate(12 75 46)">W</text><text x="84" y="76" font-size="17" transform="rotate(10 90 70)">И</text><text x="38" y="92" font-size="15" font-family="Liberation Serif,Noto Sans CJK SC,serif">維</text><text x="90" y="100" font-size="14">7</text><text x="70" y="24" font-size="11">ψ</text></g>
  </svg>
  <div class="abs nw" style="left:1626px;top:754px;width:146px;text-align:center;font-family:'Liberation Serif',serif;font-size:24.300px;line-height:40px;color:#111;letter-spacing:0.300px" id="w_wp"><span style="font-size:32px">W</span>IKIPEDI<span style="font-size:32px">A</span></div>
  <div class="abs nw" style="left:1626px;top:786px;width:146px;text-align:center;font-family:'Liberation Serif',serif;font-size:15.300px;line-height:22px;color:#222" id="w_fe">The Free Encyclopedia</div>
  <!-- sidebar -->
  <div class="wl" style="top:844px">Main page</div>
  <div class="wl" style="top:867px">Contents</div>
  <div class="wl" style="top:891px">Current events</div>
  <div class="wl" style="top:914px">Random article</div>
  <div class="wl" style="top:938px">About Wikipedia</div>
  <div class="wl" style="top:961px">Contact us</div>
  <div class="wl" style="top:984px">Donate</div>
  <div class="wl" style="top:1026px;color:#54595d;font-size:14.200px">Contribute</div>
  <div class="abs" style="left:1623px;top:1049px;width:146px;height:1px;background:linear-gradient(90deg,#c8ccd1,rgba(200,204,209,0))"></div>
  <div class="wl" style="top:1056px">Help</div>
  <div class="wl" style="top:1079px">Learn to edit</div>
  <div class="wl" style="top:1102px" id="w_cp">Community portal</div>
  <div class="wl" style="top:1126px">Recent changes</div>
  <div class="wl" style="top:1149px">Upload file</div>
  <!-- vertical divider + tabs -->
  <div class="abs" style="left:1796px;top:716px;width:1.500px;height:470px;background:linear-gradient(#e8f0f4,#cddfeb 20%,#cddfeb)"></div>
  <div class="abs" style="left:1860px;top:714px;width:326px;height:1.500px;background:#d2e2ee"></div>
  <div class="wt" style="left:1808px;top:686px;color:#202122;font-size:15.700px">Article</div>
  <div class="wt" style="left:1872px;top:686px;font-size:15.700px">Talk</div>
  <div class="abs" style="left:1861px;top:690px;width:58px;height:26px;background:linear-gradient(rgba(241,241,239,0),#dbe8f2);z-index:0;opacity:.7"></div>
  <div class="wt" style="left:1931px;top:686px;color:#202122;font-size:15.700px">Read</div>
  <div class="wt" style="left:1989px;top:686px;color:#54595d;font-size:15.700px">More</div>
  <svg class="abs" style="left:2032px;top:692px" width="12" height="10" viewBox="0 0 12 10"><path d="M1.500 2l4.500 5 4.500-5" fill="none" stroke="#54595d" stroke-width="1.800"/></svg>
  <div class="abs" style="left:2063px;top:677px;width:123px;height:34px;border:1.500px solid #a7adb4;background:#f4f4f2;border-radius:2px"></div>
  <div class="abs nw" style="left:2071px;top:682px;font-size:15px;line-height:24px;color:#72777d">Search Wik</div>
  <svg class="abs" style="left:2158px;top:684px" width="20" height="20" viewBox="0 0 20 20"><circle cx="8" cy="8" r="5.800" fill="none" stroke="#54595d" stroke-width="1.900"/><path d="M12.500 12.500l6 6" stroke="#54595d" stroke-width="2.200"/></svg>
  <!-- article -->
  <div class="abs nw" style="left:1817px;top:734px;font-family:'Liberation Serif',serif;font-size:38px;line-height:50px;color:#0a0a0a" id="w_cairo">Cairo</div>
  <div class="abs" style="left:1817px;top:781px;width:359px;height:1.500px;background:#a9adb3"></div>
  <div class="abs nw" style="left:1939px;top:789px;font-size:12.800px;letter-spacing:0.700px;line-height:20px;color:#3a5fc0" id="w_coord">Coordinates: <span style="display:inline-block;width:15px;height:15px;border-radius:50%;background:radial-gradient(circle at 40% 35%,#e4f0fa,#6fa4d4 70%,#3a6aa4);vertical-align:-3px"></span> 30°2′40″N 31°14′9″E</div>
  <div class="abs nw" style="left:1817px;top:791px;font-size:15.900px;line-height:22px;color:#1c1c1c" id="w_from">From Wikipedia, the free encyclopedia</div>
  <div class="abs nw" style="left:1847px;top:838px;font-size:17.050px;line-height:24px;font-style:italic;color:#202122" id="w_it1">This article is about the Egyptian capital.</div>
  <div class="abs nw" style="left:1847px;top:865px;font-size:17.050px;line-height:24px;font-style:italic;color:#202122">For other uses, see <span style="color:#2245a8">Cairo (disambiguation)</span>.</div>
  <!-- infobox -->
  <div class="abs" style="left:1829px;top:906px;width:347px;height:300px;border:1.500px solid #bcc1c8;background:#f3f3f1"></div>
  <div class="abs nw" style="left:1829px;top:914px;width:347px;text-align:center;font-size:17.500px;line-height:26px;font-weight:bold;color:#111">Cairo</div>
  <div class="abs nw" style="left:1829px;top:942px;width:347px;text-align:center;font-size:15px;line-height:26px;color:#222;font-family:'DejaVu Sans',sans-serif">القاهرة</div>
  <div class="abs nw" style="left:1830px;top:976px;width:345px;height:31px;background:#cddcec;border-top:1px solid #a8c0da;border-bottom:1px solid #a8c0da;text-align:center;font-size:13.500px;line-height:29px;font-weight:bold;color:#1c3f9e">Capital city</div>
  <svg class="abs" style="left:1849px;top:1021px" width="306" height="153" viewBox="0 0 306 153"><defs><linearGradient id="ns" x1="0" y1="0" x2="0" y2="1"><stop offset="0" stop-color="#0b0e16"/><stop offset=".3" stop-color="#151a24"/><stop offset=".6" stop-color="#1a1e2c"/><stop offset="1" stop-color="#0d0b10"/></linearGradient><filter id="nb"><feGaussianBlur stdDeviation=".900"/></filter><filter id="nb2"><feGaussianBlur stdDeviation="3"/></filter></defs><rect width="306" height="153" fill="url(#ns)"/><g filter="url(#nb2)"><path d="M0 96q60-16 120-8t186-34v30q-110 34-190 38t-116 8z" fill="#1e2a58"/><rect x="108" y="36" width="34" height="44" fill="#2038c0" opacity=".75"/><rect x="100" y="84" width="60" height="10" fill="#5a3ad8" opacity=".5"/><rect x="20" y="44" width="50" height="8" fill="#2a9a4a" opacity=".5"/><path d="M120 80l120-22v10l-120 26z" fill="#6a4a30" opacity=".7"/><rect x="200" y="96" width="90" height="18" fill="#c8c8e8" opacity=".5"/><rect x="0" y="100" width="60" height="16" fill="#a03828" opacity=".5"/></g><g filter="url(#nb)"><path d="M0 66l306-30" stroke="#e8a848" stroke-width="1.400" opacity=".7"/><path d="M14 140l292-72" stroke="#f4cc70" stroke-width="2.600" opacity=".95"/><path d="M150 153l156-40" stroke="#e0983c" stroke-width="2" opacity=".8"/><path d="M0 112l130-22" stroke="#f0d080" stroke-width="1.400" opacity=".75"/><rect x="114" y="40" width="18" height="32" fill="#2a56e0" opacity="0.95"/><rect x="136" y="52" width="12" height="18" fill="#3c80f0" opacity="0.90"/><rect x="150" y="60" width="8" height="10" fill="#58a0ff" opacity="0.90"/><rect x="120" y="28" width="14" height="44" fill="#d8c8a0" opacity="0.55"/><rect x="150" y="20" width="11" height="48" fill="#b8a890" opacity="0.50"/><rect x="28" y="38" width="12" height="36" fill="#c8a870" opacity="0.50"/><rect x="8" y="52" width="10" height="24" fill="#a89070" opacity="0.45"/><rect x="180" y="40" width="14" height="26" fill="#98886c" opacity="0.50"/><rect x="214" y="30" width="12" height="30" fill="#c0b090" opacity="0.50"/><rect x="246" y="36" width="16" height="22" fill="#a09078" opacity="0.45"/><rect x="272" y="28" width="10" height="28" fill="#b8a888" opacity="0.45"/><circle cx="190.6" cy="112.7" r="1.0" fill="#70f090" opacity="0.90"/><circle cx="288.7" cy="100.3" r="0.5" fill="#ffb850" opacity="0.95"/><circle cx="223.7" cy="68.3" r="1.2" fill="#ffb850" opacity="0.66"/><rect x="38.8" y="14.2" width="11.8" height="2.3" fill="#ffe8a0" opacity="0.62"/><rect x="294.2" y="85.7" width="11.5" height="2.0" fill="#ff5aa8" opacity="0.89"/><rect x="273.5" y="53.7" width="4.3" height="1.1" fill="#fff" opacity="0.62"/><circle cx="103.4" cy="55.2" r="0.7" fill="#f04840" opacity="0.73"/><circle cx="147.3" cy="107.7" r="0.7" fill="#fff2c0" opacity="0.61"/><circle cx="229.4" cy="126.4" r="0.9" fill="#fff2c0" opacity="0.75"/><circle cx="55.4" cy="141.0" r="0.5" fill="#ffe8a0" opacity="0.97"/><circle cx="288.3" cy="59.8" r="0.9" fill="#fff" opacity="0.79"/><circle cx="180.5" cy="117.9" r="1.2" fill="#fff" opacity="0.77"/><circle cx="299.4" cy="41.7" r="0.9" fill="#fff6d0" opacity="0.66"/><circle cx="84.4" cy="107.4" r="0.7" fill="#ffd880" opacity="0.72"/><circle cx="244.4" cy="97.4" r="1.0" fill="#50d0f0" opacity="0.79"/><circle cx="282.6" cy="18.2" r="1.2" fill="#fff" opacity="0.86"/><circle cx="44.6" cy="144.2" r="0.5" fill="#ff5aa8" opacity="0.73"/><circle cx="63.4" cy="144.5" r="0.6" fill="#ffd070" opacity="0.92"/><circle cx="32.6" cy="71.8" r="0.5" fill="#ffb850" opacity="0.72"/><circle cx="138.7" cy="146.9" r="0.6" fill="#f04840" opacity="0.78"/><circle cx="149.4" cy="111.0" r="0.7" fill="#ffc060" opacity="0.76"/><circle cx="44.8" cy="64.1" r="0.6" fill="#fff6d0" opacity="0.80"/><circle cx="239.3" cy="129.4" r="0.5" fill="#fff" opacity="0.91"/><circle cx="212.5" cy="102.3" r="0.7" fill="#70f090" opacity="0.88"/><circle cx="85.9" cy="78.6" r="1.0" fill="#70f090" opacity="0.98"/><circle cx="104.1" cy="37.8" r="0.5" fill="#f04840" opacity="0.91"/><circle cx="99.7" cy="50.4" r="1.2" fill="#e8f0ff" opacity="0.87"/><circle cx="109.1" cy="50.4" r="1.0" fill="#fff" opacity="0.76"/><circle cx="282.2" cy="36.9" r="1.0" fill="#f04840" opacity="0.75"/><circle cx="102.3" cy="32.9" r="1.2" fill="#ffe8a0" opacity="0.94"/><circle cx="127.5" cy="96.0" r="0.9" fill="#ffd070" opacity="0.77"/><circle cx="190.9" cy="117.0" r="0.7" fill="#ff5aa8" opacity="0.61"/><rect x="49.0" y="72.7" width="9.2" height="1.9" fill="#ff5aa8" opacity="0.52"/><rect x="144.3" y="44.1" width="11.7" height="1.7" fill="#fff2c0" opacity="0.72"/><rect x="127.1" y="60.7" width="4.8" height="2.1" fill="#ff5aa8" opacity="0.65"/><circle cx="107.3" cy="140.6" r="0.8" fill="#f04840" opacity="0.88"/><circle cx="167.5" cy="142.3" r="0.9" fill="#fff6d0" opacity="0.72"/><circle cx="156.9" cy="140.5" r="0.7" fill="#e8f0ff" opacity="0.77"/><rect x="248.8" y="99.4" width="8.4" height="1.8" fill="#fff" opacity="0.88"/><circle cx="296.2" cy="94.9" r="1.2" fill="#fff" opacity="0.60"/><rect x="33.0" y="89.3" width="8.7" height="2.3" fill="#ffd070" opacity="0.65"/><circle cx="132.1" cy="44.1" r="0.8" fill="#e8f0ff" opacity="0.75"/><circle cx="294.1" cy="135.5" r="0.9" fill="#ffd070" opacity="0.99"/><circle cx="151.9" cy="69.3" r="0.7" fill="#fff" opacity="0.71"/><circle cx="135.7" cy="53.0" r="0.6" fill="#70f090" opacity="0.61"/><rect x="163.0" y="50.4" width="7.4" height="2.3" fill="#ffc060" opacity="0.79"/><circle cx="87.4" cy="79.5" r="0.9" fill="#ffc060" opacity="0.84"/><circle cx="227.5" cy="29.7" r="0.7" fill="#e8f0ff" opacity="0.73"/><circle cx="90.8" cy="84.5" r="0.7" fill="#ffc060" opacity="0.90"/><rect x="139.4" y="135.9" width="6.9" height="2.2" fill="#ff5aa8" opacity="0.74"/><circle cx="210.8" cy="140.8" r="0.8" fill="#ff5aa8" opacity="0.94"/><circle cx="145.6" cy="104.7" r="0.6" fill="#50d0f0" opacity="0.79"/><circle cx="232.0" cy="54.4" r="1.0" fill="#fff2c0" opacity="0.83"/><rect x="198.4" y="76.8" width="9.3" height="2.3" fill="#e8f0ff" opacity="0.89"/><rect x="164.6" y="70.6" width="9.6" height="1.4" fill="#fff6d0" opacity="0.53"/><circle cx="19.3" cy="139.3" r="1.0" fill="#fff" opacity="0.63"/><rect x="124.0" y="78.7" width="8.5" height="2.2" fill="#ffd880" opacity="0.54"/><rect x="273.8" y="146.2" width="8.5" height="1.6" fill="#50d0f0" opacity="0.56"/><rect x="176.0" y="112.7" width="3.8" height="2.0" fill="#ffd070" opacity="0.70"/><circle cx="108.1" cy="101.3" r="0.6" fill="#fff2c0" opacity="0.66"/><circle cx="193.2" cy="81.3" r="0.9" fill="#fff6d0" opacity="0.71"/><circle cx="168.8" cy="47.8" r="0.7" fill="#70f090" opacity="0.65"/><rect x="71.7" y="63.4" width="9.4" height="2.0" fill="#50d0f0" opacity="0.53"/><circle cx="181.8" cy="45.7" r="0.8" fill="#ffc060" opacity="0.64"/><circle cx="162.4" cy="86.1" r="0.5" fill="#ffe8a0" opacity="0.98"/><rect x="131.4" y="119.7" width="11.2" height="1.7" fill="#50d0f0" opacity="0.58"/><circle cx="214.7" cy="64.0" r="0.6" fill="#f04840" opacity="0.97"/><circle cx="215.8" cy="119.9" r="0.6" fill="#ffe8a0" opacity="0.74"/><circle cx="90.5" cy="98.0" r="0.7" fill="#f04840" opacity="0.84"/><rect x="175.4" y="112.4" width="3.3" height="1.3" fill="#ffe8a0" opacity="0.52"/><rect x="272.1" y="78.0" width="7.2" height="2.3" fill="#70f090" opacity="0.75"/><rect x="131.2" y="75.9" width="4.4" height="1.6" fill="#ffd880" opacity="0.65"/><circle cx="269.4" cy="34.2" r="0.5" fill="#e8f0ff" opacity="0.66"/><circle cx="87.8" cy="45.3" r="0.5" fill="#ffc060" opacity="0.90"/><circle cx="139.7" cy="126.9" r="0.5" fill="#ffb850" opacity="0.73"/><rect x="138.9" y="45.9" width="3.2" height="1.3" fill="#ffb850" opacity="0.53"/><circle cx="122.7" cy="143.5" r="1.0" fill="#fff" opacity="0.79"/><rect x="86.6" y="111.4" width="5.2" height="2.0" fill="#50d0f0" opacity="0.88"/><circle cx="197.6" cy="71.3" r="0.5" fill="#e8f0ff" opacity="0.78"/><circle cx="208.5" cy="36.6" r="0.9" fill="#fff2c0" opacity="0.93"/><rect x="173.0" y="139.0" width="10.2" height="1.1" fill="#50d0f0" opacity="0.69"/><circle cx="208.9" cy="99.7" r="0.8" fill="#ffc060" opacity="0.62"/><circle cx="255.0" cy="73.3" r="0.5" fill="#ff5aa8" opacity="0.98"/><rect x="59.5" y="106.5" width="5.1" height="2.4" fill="#ff5aa8" opacity="0.82"/><rect x="26.6" y="145.0" width="9.6" height="1.9" fill="#ffb850" opacity="0.68"/><circle cx="109.4" cy="70.3" r="0.8" fill="#70f090" opacity="0.65"/><circle cx="3.8" cy="114.6" r="0.8" fill="#50d0f0" opacity="1.00"/><rect x="238.7" y="49.0" width="7.8" height="1.7" fill="#ffe8a0" opacity="0.78"/><circle cx="244.4" cy="142.7" r="0.6" fill="#ff5aa8" opacity="0.80"/><circle cx="76.1" cy="107.6" r="0.7" fill="#70f090" opacity="0.95"/><circle cx="22.0" cy="116.3" r="1.2" fill="#ffe8a0" opacity="0.60"/><rect x="87.5" y="139.1" width="4.3" height="2.0" fill="#ffb850" opacity="0.81"/><circle cx="32.6" cy="121.1" r="0.6" fill="#fff6d0" opacity="0.72"/><rect x="42.0" y="80.2" width="7.9" height="2.1" fill="#fff" opacity="0.51"/><circle cx="37.2" cy="142.9" r="0.7" fill="#f04840" opacity="0.70"/><rect x="38.3" y="40.8" width="8.6" height="1.2" fill="#fff" opacity="0.89"/><rect x="82.1" y="94.6" width="9.9" height="1.7" fill="#ff5aa8" opacity="0.67"/><circle cx="102.0" cy="73.3" r="0.8" fill="#ffe8a0" opacity="0.67"/><circle cx="14.8" cy="102.8" r="0.9" fill="#ffb850" opacity="0.80"/><rect x="0.5" y="30.9" width="3.0" height="2.4" fill="#ff5aa8" opacity="0.59"/><rect x="215.7" y="61.1" width="10.4" height="1.5" fill="#ffc060" opacity="0.71"/><circle cx="234.0" cy="118.4" r="0.7" fill="#fff" opacity="0.93"/><circle cx="202.9" cy="134.8" r="0.9" fill="#fff2c0" opacity="0.74"/><rect x="43.7" y="45.7" width="6.6" height="2.1" fill="#ffe8a0" opacity="0.61"/><circle cx="281.8" cy="119.9" r="0.7" fill="#70f090" opacity="0.79"/><circle cx="190.0" cy="122.2" r="0.7" fill="#fff2c0" opacity="0.84"/><circle cx="157.2" cy="80.7" r="1.0" fill="#fff6d0" opacity="0.78"/><circle cx="241.0" cy="91.1" r="0.9" fill="#50d0f0" opacity="0.81"/><circle cx="244.4" cy="62.3" r="0.5" fill="#ffd070" opacity="0.81"/><circle cx="108.9" cy="91.2" r="1.0" fill="#70f090" opacity="0.99"/><rect x="4.4" y="137.6" width="3.8" height="2.4" fill="#ffe8a0" opacity="0.62"/><circle cx="107.5" cy="120.6" r="0.9" fill="#50d0f0" opacity="0.68"/><circle cx="158.1" cy="133.2" r="0.7" fill="#ffe8a0" opacity="0.82"/><circle cx="54.5" cy="100.9" r="1.0" fill="#ffe8a0" opacity="0.75"/><circle cx="33.3" cy="105.6" r="1.0" fill="#fff6d0" opacity="0.75"/><circle cx="271.4" cy="42.3" r="1.2" fill="#e8f0ff" opacity="0.85"/><circle cx="274.6" cy="36.3" r="0.8" fill="#ff5aa8" opacity="0.69"/><circle cx="19.2" cy="89.3" r="1.0" fill="#f04840" opacity="0.89"/><circle cx="127.6" cy="70.6" r="0.9" fill="#fff6d0" opacity="0.72"/><circle cx="85.9" cy="94.5" r="0.6" fill="#fff" opacity="0.66"/><circle cx="90.5" cy="87.8" r="0.6" fill="#ffd070" opacity="0.73"/><rect x="31.3" y="118.6" width="11.6" height="1.2" fill="#fff" opacity="0.71"/><circle cx="22.3" cy="39.2" r="1.0" fill="#ffc060" opacity="0.96"/><circle cx="273.4" cy="95.8" r="0.8" fill="#70f090" opacity="0.60"/><circle cx="112.5" cy="115.1" r="1.2" fill="#ffd070" opacity="0.73"/><circle cx="235.5" cy="38.3" r="0.9" fill="#fff6d0" opacity="0.99"/><circle cx="63.2" cy="63.8" r="1.0" fill="#ffc060" opacity="0.91"/><rect x="75.2" y="139.2" width="11.8" height="2.4" fill="#ffc060" opacity="0.55"/><rect x="1.0" y="64.7" width="9.8" height="2.1" fill="#fff" opacity="0.62"/><circle cx="35.8" cy="77.7" r="1.2" fill="#fff" opacity="0.97"/><circle cx="116.9" cy="52.6" r="1.0" fill="#ffc060" opacity="0.92"/><rect x="176.2" y="53.4" width="6.9" height="1.3" fill="#fff" opacity="0.89"/><circle cx="82.9" cy="109.8" r="0.7" fill="#ffb850" opacity="0.82"/><circle cx="132.3" cy="37.9" r="0.8" fill="#f04840" opacity="0.70"/><circle cx="250.3" cy="32.7" r="0.7" fill="#fff2c0" opacity="0.98"/><circle cx="265.7" cy="24.4" r="1.2" fill="#ffe8a0" opacity="0.79"/><circle cx="26.1" cy="51.1" r="1.0" fill="#f04840" opacity="0.61"/><circle cx="49.0" cy="116.5" r="0.8" fill="#fff6d0" opacity="0.98"/><rect x="202.3" y="96.2" width="6.8" height="2.1" fill="#ffd070" opacity="0.82"/><circle cx="252.0" cy="71.5" r="0.5" fill="#ffe8a0" opacity="0.90"/><circle cx="272.9" cy="33.7" r="1.2" fill="#ffe8a0" opacity="1.00"/><circle cx="66.3" cy="70.0" r="0.6" fill="#e8f0ff" opacity="0.71"/><rect x="274.6" y="131.7" width="10.5" height="2.4" fill="#ffe8a0" opacity="0.74"/><rect x="41.7" y="45.5" width="4.7" height="1.6" fill="#fff" opacity="0.61"/><rect x="230.7" y="63.6" width="7.7" height="2.5" fill="#70f090" opacity="0.78"/><circle cx="114.7" cy="63.0" r="0.9" fill="#ffc060" opacity="0.99"/><circle cx="73.7" cy="89.6" r="0.5" fill="#e8f0ff" opacity="0.89"/><rect x="40.9" y="78.0" width="9.9" height="1.6" fill="#50d0f0" opacity="0.70"/><circle cx="186.8" cy="119.5" r="1.2" fill="#fff2c0" opacity="0.62"/><circle cx="118.0" cy="60.0" r="0.9" fill="#fff2c0" opacity="0.78"/><circle cx="200.4" cy="137.0" r="0.9" fill="#fff" opacity="0.89"/><circle cx="286.8" cy="140.3" r="0.7" fill="#ffe8a0" opacity="0.84"/><rect x="208.8" y="99.7" width="8.6" height="1.1" fill="#fff2c0" opacity="0.71"/><circle cx="250.1" cy="63.6" r="0.6" fill="#ffe8a0" opacity="0.63"/><rect x="1.2" y="89.1" width="9.7" height="1.2" fill="#ffd070" opacity="0.85"/><circle cx="114.5" cy="59.3" r="0.7" fill="#f04840" opacity="0.66"/><circle cx="38.1" cy="47.4" r="1.0" fill="#fff2c0" opacity="0.67"/><circle cx="241.5" cy="107.4" r="0.8" fill="#ffd070" opacity="0.93"/><circle cx="181.7" cy="89.2" r="0.7" fill="#50d0f0" opacity="0.60"/><circle cx="13.2" cy="123.6" r="1.0" fill="#ffc060" opacity="0.62"/><circle cx="180.2" cy="29.6" r="0.8" fill="#ffd070" opacity="0.69"/><circle cx="140.8" cy="100.3" r="1.0" fill="#fff6d0" opacity="0.98"/><circle cx="208.0" cy="50.4" r="1.2" fill="#ffe8a0" opacity="0.78"/><circle cx="91.5" cy="130.9" r="0.9" fill="#fff" opacity="0.80"/><circle cx="116.5" cy="101.2" r="0.7" fill="#e8f0ff" opacity="0.68"/><circle cx="27.0" cy="60.9" r="1.0" fill="#ffd880" opacity="0.85"/><rect x="199.1" y="37.2" width="7.5" height="2.4" fill="#ffb850" opacity="0.64"/><circle cx="5.2" cy="71.7" r="0.8" fill="#ffd070" opacity="0.98"/><circle cx="66.3" cy="45.9" r="0.8" fill="#ffb850" opacity="0.70"/><circle cx="95.9" cy="96.1" r="0.7" fill="#ffe8a0" opacity="0.94"/><rect x="158.0" y="78.7" width="10.3" height="2.0" fill="#50d0f0" opacity="0.54"/><circle cx="29.4" cy="129.8" r="1.2" fill="#e8f0ff" opacity="0.67"/><circle cx="237.6" cy="86.2" r="1.0" fill="#ffb850" opacity="0.91"/><rect x="30.6" y="128.1" width="9.5" height="1.6" fill="#ffd880" opacity="0.85"/><circle cx="19.2" cy="54.1" r="0.5" fill="#ffb850" opacity="0.92"/><circle cx="274.3" cy="81.3" r="0.8" fill="#ffd880" opacity="0.69"/><rect x="8.2" y="89.1" width="7.6" height="2.4" fill="#e8f0ff" opacity="0.88"/><circle cx="142.6" cy="27.7" r="0.9" fill="#ffd880" opacity="0.63"/><circle cx="302.1" cy="86.2" r="0.5" fill="#ffe8a0" opacity="0.82"/><circle cx="297.7" cy="70.9" r="0.9" fill="#ffe8a0" opacity="0.65"/><circle cx="200.8" cy="38.1" r="0.7" fill="#ffe8a0" opacity="0.88"/><circle cx="21.8" cy="54.7" r="1.0" fill="#f04840" opacity="0.78"/><circle cx="280.8" cy="90.3" r="0.7" fill="#fff6d0" opacity="0.90"/><circle cx="78.4" cy="76.6" r="1.0" fill="#70f090" opacity="0.65"/><rect x="62.0" y="106.4" width="12.0" height="1.2" fill="#50d0f0" opacity="0.57"/><circle cx="27.5" cy="73.4" r="0.8" fill="#ffd070" opacity="0.67"/><circle cx="77.1" cy="61.4" r="0.9" fill="#fff2c0" opacity="0.65"/><circle cx="233.8" cy="58.8" r="0.8" fill="#ffd070" opacity="0.80"/><circle cx="267.4" cy="136.3" r="0.9" fill="#e8f0ff" opacity="0.95"/><circle cx="40.6" cy="69.9" r="0.7" fill="#ffe8a0" opacity="0.65"/><rect x="200.5" y="114.7" width="11.5" height="1.5" fill="#50d0f0" opacity="0.84"/><circle cx="202.4" cy="70.0" r="0.9" fill="#f04840" opacity="0.74"/><circle cx="223.9" cy="81.2" r="1.0" fill="#50d0f0" opacity="0.92"/><circle cx="48.7" cy="79.8" r="0.9" fill="#fff2c0" opacity="0.91"/><circle cx="298.2" cy="127.4" r="1.0" fill="#ffe8a0" opacity="0.86"/><circle cx="117.8" cy="99.7" r="1.0" fill="#ffe8a0" opacity="0.60"/><circle cx="200.9" cy="91.3" r="0.9" fill="#50d0f0" opacity="0.83"/><circle cx="168.6" cy="121.0" r="1.0" fill="#70f090" opacity="0.96"/><rect x="141.8" y="39.2" width="11.0" height="2.3" fill="#ffe8a0" opacity="0.69"/><circle cx="88.5" cy="23.9" r="1.2" fill="#50d0f0" opacity="0.79"/><circle cx="189.2" cy="94.4" r="1.2" fill="#f04840" opacity="0.61"/><circle cx="270.7" cy="145.6" r="0.5" fill="#ffe8a0" opacity="0.68"/><circle cx="163.4" cy="132.1" r="0.6" fill="#ffb850" opacity="0.61"/><circle cx="17.7" cy="38.9" r="0.8" fill="#f04840" opacity="0.91"/><rect x="35.0" y="65.1" width="11.1" height="1.2" fill="#ffe8a0" opacity="0.88"/><circle cx="83.8" cy="83.8" r="1.0" fill="#ffe8a0" opacity="0.94"/><circle cx="129.3" cy="122.1" r="1.0" fill="#f04840" opacity="0.82"/><rect x="252.6" y="111.8" width="8.2" height="2.1" fill="#50d0f0" opacity="0.85"/><circle cx="14.1" cy="123.2" r="0.6" fill="#f04840" opacity="0.64"/><circle cx="185.3" cy="62.2" r="1.0" fill="#ffb850" opacity="0.60"/><rect x="45.6" y="70.6" width="7.9" height="2.4" fill="#ffd880" opacity="0.83"/><rect x="99.8" y="137.0" width="3.1" height="1.1" fill="#ffd880" opacity="0.74"/><circle cx="231.6" cy="77.5" r="0.9" fill="#70f090" opacity="0.97"/><circle cx="186.1" cy="85.4" r="0.8" fill="#ffb850" opacity="0.78"/><circle cx="251.8" cy="44.5" r="0.5" fill="#e8f0ff" opacity="0.63"/><circle cx="164.3" cy="43.2" r="1.0" fill="#ff5aa8" opacity="0.64"/><circle cx="223.5" cy="68.2" r="0.7" fill="#fff" opacity="0.91"/><circle cx="94.7" cy="104.1" r="0.9" fill="#ffd880" opacity="0.91"/><circle cx="266.5" cy="104.6" r="0.5" fill="#ffd880" opacity="0.95"/><circle cx="66.2" cy="54.4" r="0.7" fill="#ffe8a0" opacity="0.83"/><rect x="296.8" y="82.7" width="5.7" height="2.4" fill="#e8f0ff" opacity="0.62"/><circle cx="29.4" cy="60.0" r="0.5" fill="#ffe8a0" opacity="0.95"/><circle cx="254.0" cy="80.0" r="1.0" fill="#fff2c0" opacity="0.88"/><circle cx="284.8" cy="93.1" r="0.7" fill="#e8f0ff" opacity="0.93"/><circle cx="153.7" cy="60.1" r="0.5" fill="#fff6d0" opacity="0.83"/><circle cx="138.1" cy="101.4" r="1.0" fill="#ffd070" opacity="0.77"/><circle cx="40.3" cy="72.4" r="0.7" fill="#fff2c0" opacity="0.77"/><circle cx="43.8" cy="54.6" r="0.5" fill="#ffd070" opacity="0.88"/><circle cx="14.6" cy="136.7" r="1.0" fill="#e8f0ff" opacity="0.77"/><circle cx="71.0" cy="71.7" r="0.6" fill="#e8f0ff" opacity="0.81"/><circle cx="305.0" cy="89.0" r="1.2" fill="#ffe8a0" opacity="0.79"/><circle cx="11.8" cy="62.6" r="1.2" fill="#fff" opacity="0.64"/><circle cx="270.9" cy="63.3" r="0.7" fill="#70f090" opacity="0.98"/><rect x="119.4" y="128.0" width="10.2" height="1.8" fill="#e8f0ff" opacity="0.64"/><circle cx="55.4" cy="144.9" r="1.0" fill="#fff2c0" opacity="0.70"/><circle cx="189.5" cy="72.2" r="0.9" fill="#ffd070" opacity="0.71"/><rect x="10.9" y="122.8" width="7.5" height="1.9" fill="#ff5aa8" opacity="0.70"/><circle cx="275.7" cy="117.6" r="0.5" fill="#e8f0ff" opacity="0.84"/><circle cx="49.7" cy="138.2" r="0.6" fill="#fff2c0" opacity="0.71"/><circle cx="302.6" cy="118.8" r="0.7" fill="#ffe8a0" opacity="0.61"/><rect x="37.3" y="39.5" width="11.1" height="2.0" fill="#50d0f0" opacity="0.81"/><circle cx="273.9" cy="91.7" r="0.7" fill="#f04840" opacity="0.70"/><rect x="51.7" y="49.9" width="9.5" height="1.7" fill="#ffd880" opacity="0.50"/><circle cx="93.2" cy="127.0" r="0.5" fill="#f04840" opacity="0.89"/><circle cx="279.0" cy="88.1" r="1.0" fill="#ffe8a0" opacity="0.71"/><rect x="11.2" y="48.6" width="3.7" height="1.4" fill="#ffc060" opacity="0.65"/><circle cx="292.9" cy="78.8" r="1.0" fill="#f04840" opacity="0.84"/><circle cx="98.6" cy="66.2" r="0.7" fill="#fff" opacity="0.94"/><rect x="241.9" y="53.3" width="8.3" height="1.3" fill="#ffb850" opacity="0.50"/><circle cx="92.4" cy="44.4" r="0.8" fill="#ffe8a0" opacity="0.83"/><circle cx="86.2" cy="111.2" r="1.2" fill="#ffe8a0" opacity="0.65"/><circle cx="181.2" cy="107.8" r="0.9" fill="#50d0f0" opacity="0.95"/><rect x="192.5" y="105.9" width="7.2" height="1.8" fill="#ffd880" opacity="0.54"/><circle cx="227.0" cy="60.1" r="0.9" fill="#ffc060" opacity="0.61"/><circle cx="4.2" cy="36.0" r="1.0" fill="#ffb850" opacity="0.75"/><circle cx="256.5" cy="127.3" r="1.0" fill="#ffd070" opacity="0.68"/><circle cx="167.7" cy="97.9" r="0.5" fill="#50d0f0" opacity="0.94"/><rect x="279.5" y="38.0" width="9.4" height="1.4" fill="#fff6d0" opacity="0.83"/><rect x="82.8" y="99.1" width="5.2" height="1.9" fill="#e8f0ff" opacity="0.88"/><rect x="246.7" y="64.4" width="6.6" height="2.5" fill="#70f090" opacity="0.66"/><circle cx="272.8" cy="145.2" r="0.5" fill="#fff6d0" opacity="0.98"/><circle cx="202.7" cy="58.0" r="0.6" fill="#ff5aa8" opacity="0.85"/><circle cx="187.9" cy="103.1" r="1.0" fill="#ffe8a0" opacity="0.94"/><circle cx="282.7" cy="89.3" r="0.9" fill="#70f090" opacity="0.71"/><circle cx="300.1" cy="69.5" r="0.9" fill="#ffc060" opacity="0.67"/><circle cx="248.3" cy="78.0" r="0.8" fill="#ffc060" opacity="0.70"/><rect x="72.3" y="108.5" width="10.0" height="2.0" fill="#ffe8a0" opacity="0.72"/><circle cx="241.6" cy="128.4" r="0.5" fill="#ffb850" opacity="0.85"/><circle cx="213.8" cy="141.5" r="0.5" fill="#70f090" opacity="0.63"/><rect x="130.5" y="135.5" width="10.1" height="1.7" fill="#ffd880" opacity="0.90"/><rect x="159.1" y="114.5" width="4.5" height="1.8" fill="#fff" opacity="0.84"/><circle cx="273.4" cy="57.0" r="0.9" fill="#70f090" opacity="0.80"/><circle cx="13.0" cy="39.3" r="0.7" fill="#e8f0ff" opacity="0.69"/><circle cx="204.8" cy="73.0" r="0.9" fill="#ffd880" opacity="0.97"/><circle cx="71.4" cy="69.1" r="0.7" fill="#ffe8a0" opacity="0.73"/><rect x="242.1" y="45.6" width="11.2" height="2.1" fill="#e8f0ff" opacity="0.90"/><circle cx="31.9" cy="88.3" r="0.5" fill="#e8f0ff" opacity="0.85"/><rect x="13.3" y="102.7" width="5.7" height="1.2" fill="#f04840" opacity="0.87"/><circle cx="67.7" cy="57.4" r="0.5" fill="#ffb850" opacity="0.86"/><circle cx="117.2" cy="29.2" r="1.0" fill="#fff6d0" opacity="0.64"/><rect x="29.4" y="55.8" width="9.5" height="1.9" fill="#fff6d0" opacity="0.65"/><circle cx="294.8" cy="129.2" r="0.5" fill="#e8f0ff" opacity="0.99"/><rect x="2.2" y="77.8" width="7.7" height="1.1" fill="#50d0f0" opacity="0.90"/><circle cx="33.6" cy="91.5" r="0.9" fill="#ff5aa8" opacity="0.81"/><circle cx="206.0" cy="103.4" r="0.9" fill="#fff6d0" opacity="0.66"/><rect x="3.1" y="103.7" width="5.8" height="1.7" fill="#fff" opacity="0.58"/><rect x="260.8" y="78.2" width="11.0" height="1.9" fill="#ffd880" opacity="0.62"/><rect x="218.2" y="20.1" width="5.1" height="1.8" fill="#fff2c0" opacity="0.85"/><circle cx="46.0" cy="60.7" r="0.5" fill="#ff5aa8" opacity="0.77"/><circle cx="68.2" cy="139.7" r="0.8" fill="#ff5aa8" opacity="0.95"/><rect x="136.1" y="35.7" width="7.2" height="1.1" fill="#fff" opacity="0.68"/><rect x="204.5" y="61.9" width="7.6" height="2.0" fill="#ffd070" opacity="0.65"/><circle cx="93.8" cy="83.0" r="0.7" fill="#50d0f0" opacity="0.91"/><circle cx="260.1" cy="64.7" r="0.7" fill="#ffe8a0" opacity="0.77"/><circle cx="255.9" cy="43.3" r="1.2" fill="#ffb850" opacity="0.97"/><circle cx="104.6" cy="19.9" r="0.8" fill="#50d0f0" opacity="0.85"/><circle cx="145.7" cy="110.0" r="0.6" fill="#ffe8a0" opacity="0.76"/><circle cx="172.5" cy="64.3" r="0.6" fill="#fff" opacity="0.76"/><rect x="85.3" y="117.9" width="11.0" height="2.4" fill="#ffc060" opacity="0.52"/><circle cx="140.5" cy="43.4" r="0.8" fill="#ff5aa8" opacity="0.72"/><circle cx="92.5" cy="94.8" r="1.0" fill="#fff6d0" opacity="0.87"/><circle cx="144.8" cy="139.9" r="1.2" fill="#ffc060" opacity="0.86"/><rect x="276.1" y="17.5" width="9.8" height="1.8" fill="#ffd070" opacity="0.78"/><circle cx="175.7" cy="107.0" r="0.5" fill="#70f090" opacity="0.95"/><circle cx="171.2" cy="139.4" r="1.0" fill="#ff5aa8" opacity="0.65"/><circle cx="160.8" cy="102.6" r="0.6" fill="#70f090" opacity="0.99"/><circle cx="97.5" cy="106.9" r="0.9" fill="#ffe8a0" opacity="0.66"/><circle cx="185.2" cy="78.4" r="0.8" fill="#ffd070" opacity="0.73"/><circle cx="81.2" cy="57.9" r="1.0" fill="#e8f0ff" opacity="0.84"/><circle cx="237.4" cy="45.5" r="0.5" fill="#70f090" opacity="0.63"/><rect x="31.9" y="68.2" width="6.2" height="1.2" fill="#ff5aa8" opacity="0.85"/><circle cx="11.2" cy="94.0" r="1.2" fill="#fff" opacity="0.70"/><circle cx="259.1" cy="145.7" r="1.0" fill="#70f090" opacity="0.68"/><circle cx="289.8" cy="108.4" r="0.6" fill="#ffc060" opacity="0.63"/><rect x="86.1" y="97.2" width="3.5" height="1.2" fill="#ffd070" opacity="0.68"/><rect x="23.8" y="134.9" width="9.7" height="1.1" fill="#ffc060" opacity="0.71"/><circle cx="64.1" cy="94.5" r="0.6" fill="#ff5aa8" opacity="0.96"/><rect x="154.2" y="80.1" width="7.4" height="1.6" fill="#ffd880" opacity="0.76"/><rect x="264.1" y="97.9" width="9.8" height="1.6" fill="#ffb850" opacity="0.90"/><circle cx="180.5" cy="74.9" r="0.8" fill="#ffc060" opacity="0.69"/><rect x="250.6" y="77.3" width="9.5" height="2.4" fill="#ff5aa8" opacity="0.80"/><circle cx="220.0" cy="73.4" r="0.7" fill="#ffb850" opacity="0.96"/><circle cx="205.6" cy="82.5" r="0.6" fill="#ffd880" opacity="0.97"/><circle cx="133.7" cy="125.2" r="0.6" fill="#ffe8a0" opacity="0.68"/><circle cx="298.4" cy="55.3" r="1.0" fill="#fff2c0" opacity="0.92"/><circle cx="118.4" cy="130.3" r="0.6" fill="#fff" opacity="0.66"/><rect x="61.9" y="97.8" width="6.4" height="1.4" fill="#fff2c0" opacity="0.70"/><circle cx="22.5" cy="88.4" r="1.2" fill="#ff5aa8" opacity="0.83"/><circle cx="161.3" cy="119.0" r="0.5" fill="#ffd070" opacity="0.83"/><circle cx="264.9" cy="124.9" r="0.9" fill="#fff2c0" opacity="0.84"/><rect x="261.9" y="107.3" width="9.9" height="2.1" fill="#ffe8a0" opacity="0.69"/><circle cx="82.9" cy="62.4" r="0.8" fill="#ffd070" opacity="0.69"/><circle cx="59.0" cy="138.2" r="0.5" fill="#ffe8a0" opacity="0.75"/><circle cx="145.0" cy="105.0" r="0.9" fill="#e8f0ff" opacity="0.61"/><circle cx="5.9" cy="113.5" r="0.6" fill="#ffb850" opacity="0.95"/><circle cx="53.2" cy="85.4" r="0.7" fill="#50d0f0" opacity="0.68"/><circle cx="199.1" cy="85.9" r="1.0" fill="#ff5aa8" opacity="0.91"/><rect x="221.7" y="79.2" width="11.7" height="2.4" fill="#70f090" opacity="0.72"/><circle cx="304.7" cy="120.4" r="0.8" fill="#ffd880" opacity="0.65"/><rect x="38.4" y="112.2" width="7.0" height="2.3" fill="#fff" opacity="0.89"/><circle cx="201.6" cy="129.2" r="0.6" fill="#70f090" opacity="0.82"/><circle cx="79.2" cy="114.7" r="1.0" fill="#fff" opacity="0.88"/><circle cx="127.7" cy="63.3" r="0.5" fill="#ffd070" opacity="0.89"/><circle cx="176.6" cy="57.0" r="1.0" fill="#fff6d0" opacity="0.65"/><circle cx="104.5" cy="118.5" r="0.8" fill="#50d0f0" opacity="0.91"/><circle cx="24.3" cy="109.9" r="1.0" fill="#f04840" opacity="0.93"/><rect x="65.1" y="70.7" width="3.7" height="1.5" fill="#e8f0ff" opacity="0.83"/><circle cx="170.8" cy="48.2" r="0.7" fill="#ffd880" opacity="0.70"/><circle cx="113.6" cy="23.5" r="1.0" fill="#fff6d0" opacity="0.70"/><rect x="177.2" y="124.1" width="5.6" height="2.5" fill="#ff5aa8" opacity="0.68"/><rect x="75.0" y="142.7" width="8.2" height="2.2" fill="#ffd880" opacity="0.59"/><circle cx="76.4" cy="64.1" r="0.7" fill="#ffc060" opacity="0.97"/><circle cx="186.1" cy="51.0" r="0.5" fill="#fff" opacity="0.66"/><circle cx="265.4" cy="133.5" r="0.9" fill="#ffd070" opacity="0.82"/><circle cx="170.0" cy="37.5" r="1.0" fill="#fff6d0" opacity="0.68"/><circle cx="135.5" cy="125.2" r="0.7" fill="#ff5aa8" opacity="0.70"/><circle cx="192.9" cy="87.5" r="0.6" fill="#e8f0ff" opacity="0.76"/><rect x="191.9" y="130.8" width="11.0" height="1.4" fill="#fff" opacity="0.75"/><rect x="55.7" y="134.7" width="6.8" height="2.0" fill="#50d0f0" opacity="0.79"/><circle cx="300.1" cy="69.0" r="0.5" fill="#fff6d0" opacity="0.67"/><circle cx="241.2" cy="92.5" r="1.2" fill="#fff2c0" opacity="0.97"/><circle cx="260.1" cy="142.6" r="0.9" fill="#ffd070" opacity="0.91"/><circle cx="3.6" cy="98.5" r="1.0" fill="#e8f0ff" opacity="0.96"/><rect x="219.5" y="74.5" width="7.9" height="2.2" fill="#fff" opacity="0.59"/><circle cx="259.4" cy="137.1" r="1.0" fill="#ffe8a0" opacity="0.74"/><circle cx="140.7" cy="91.9" r="0.7" fill="#50d0f0" opacity="0.97"/><circle cx="131.1" cy="75.6" r="1.2" fill="#ffe8a0" opacity="0.87"/><circle cx="145.2" cy="122.6" r="0.8" fill="#ffd880" opacity="0.72"/><rect x="75.2" y="15.1" width="10.6" height="1.4" fill="#70f090" opacity="0.87"/><circle cx="185.9" cy="92.1" r="1.0" fill="#ffc060" opacity="0.69"/><circle cx="25.8" cy="87.8" r="1.0" fill="#ffd070" opacity="0.80"/><circle cx="102.4" cy="71.9" r="0.6" fill="#ffe8a0" opacity="0.73"/><circle cx="261.7" cy="136.3" r="0.8" fill="#ffe8a0" opacity="0.63"/><circle cx="289.8" cy="99.1" r="0.9" fill="#ffe8a0" opacity="0.66"/><circle cx="81.2" cy="111.0" r="0.7" fill="#fff" opacity="0.99"/><rect x="173.5" y="39.3" width="9.0" height="1.9" fill="#fff2c0" opacity="0.85"/><circle cx="42.7" cy="143.7" r="0.8" fill="#fff" opacity="0.73"/><circle cx="121.1" cy="46.8" r="0.7" fill="#ffd070" opacity="1.00"/><circle cx="161.2" cy="101.2" r="0.5" fill="#ff5aa8" opacity="0.88"/><circle cx="155.4" cy="71.1" r="0.5" fill="#ff5aa8" opacity="0.71"/><circle cx="232.5" cy="59.1" r="1.2" fill="#f04840" opacity="0.88"/><circle cx="229.8" cy="107.4" r="0.7" fill="#70f090" opacity="0.81"/><circle cx="119.6" cy="129.9" r="0.7" fill="#ffb850" opacity="0.95"/><circle cx="133.3" cy="85.4" r="0.9" fill="#e8f0ff" opacity="0.76"/><circle cx="277.6" cy="121.8" r="1.0" fill="#e8f0ff" opacity="0.67"/><rect x="116.5" y="120.9" width="4.9" height="1.9" fill="#fff" opacity="0.54"/><circle cx="79.1" cy="116.6" r="1.2" fill="#70f090" opacity="0.94"/><circle cx="286.9" cy="138.9" r="0.8" fill="#fff2c0" opacity="0.67"/><circle cx="88.6" cy="30.7" r="0.6" fill="#fff" opacity="0.89"/><circle cx="215.6" cy="46.2" r="0.9" fill="#ff5aa8" opacity="0.83"/><rect x="241.7" y="81.0" width="11.3" height="2.4" fill="#50d0f0" opacity="0.82"/><circle cx="43.3" cy="110.5" r="0.9" fill="#f04840" opacity="0.72"/><circle cx="153.8" cy="133.3" r="0.8" fill="#fff6d0" opacity="0.61"/><circle cx="196.3" cy="146.2" r="0.7" fill="#ff5aa8" opacity="0.78"/><circle cx="193.0" cy="95.8" r="0.7" fill="#ffc060" opacity="0.95"/><rect x="239.3" y="110.5" width="7.4" height="1.4" fill="#50d0f0" opacity="0.58"/><circle cx="290.7" cy="44.7" r="0.7" fill="#f04840" opacity="0.76"/><circle cx="7.5" cy="37.6" r="0.6" fill="#ff5aa8" opacity="0.74"/><circle cx="183.4" cy="35.7" r="0.6" fill="#ff5aa8" opacity="0.91"/><circle cx="172.2" cy="90.3" r="0.8" fill="#fff2c0" opacity="0.76"/><circle cx="22.2" cy="23.8" r="1.0" fill="#ff5aa8" opacity="0.88"/><circle cx="265.9" cy="98.4" r="0.6" fill="#ffe8a0" opacity="0.99"/><circle cx="292.0" cy="34.2" r="0.8" fill="#f04840" opacity="0.74"/><circle cx="212.5" cy="50.5" r="0.7" fill="#50d0f0" opacity="0.83"/><circle cx="17.3" cy="134.1" r="1.2" fill="#fff6d0" opacity="0.73"/><rect x="28.6" y="33.4" width="3.4" height="1.3" fill="#ffc060" opacity="0.70"/><rect x="271.5" y="114.7" width="9.2" height="1.5" fill="#fff2c0" opacity="0.60"/><rect x="104.8" y="96.7" width="6.3" height="2.2" fill="#ff5aa8" opacity="0.79"/><circle cx="282.2" cy="61.1" r="0.7" fill="#ffd070" opacity="0.82"/><circle cx="248.0" cy="129.1" r="1.0" fill="#ffb850" opacity="0.68"/><circle cx="263.5" cy="82.1" r="0.7" fill="#e8f0ff" opacity="0.85"/><circle cx="125.9" cy="47.3" r="0.9" fill="#e8f0ff" opacity="0.72"/><circle cx="184.2" cy="115.4" r="0.7" fill="#70f090" opacity="0.92"/><circle cx="59.0" cy="99.0" r="0.7" fill="#e8f0ff" opacity="0.83"/><circle cx="145.1" cy="98.4" r="1.0" fill="#ffd070" opacity="0.99"/><circle cx="241.7" cy="105.8" r="1.0" fill="#fff6d0" opacity="0.82"/><circle cx="90.4" cy="132.2" r="0.6" fill="#f04840" opacity="0.86"/><rect x="194.8" y="145.4" width="8.3" height="1.5" fill="#ffe8a0" opacity="0.54"/><circle cx="239.6" cy="71.7" r="0.6" fill="#ff5aa8" opacity="0.89"/><circle cx="143.0" cy="67.3" r="0.6" fill="#ff5aa8" opacity="0.86"/><circle cx="248.7" cy="87.5" r="0.9" fill="#fff2c0" opacity="0.81"/><circle cx="214.4" cy="108.0" r="1.2" fill="#ffe8a0" opacity="0.94"/><circle cx="174.8" cy="138.4" r="1.0" fill="#ffe8a0" opacity="0.63"/><circle cx="194.6" cy="109.2" r="1.0" fill="#fff" opacity="0.94"/><circle cx="249.5" cy="129.3" r="1.2" fill="#ffd880" opacity="0.67"/><circle cx="281.0" cy="84.1" r="0.8" fill="#ff5aa8" opacity="0.62"/><circle cx="288.2" cy="119.2" r="0.8" fill="#50d0f0" opacity="0.74"/><rect x="50.7" y="116.3" width="8.2" height="2.0" fill="#ffe8a0" opacity="0.58"/><circle cx="77.6" cy="37.7" r="0.8" fill="#ffe8a0" opacity="0.82"/><circle cx="287.8" cy="142.7" r="0.8" fill="#ffc060" opacity="0.69"/><circle cx="289.8" cy="109.5" r="1.2" fill="#ffd880" opacity="0.87"/><circle cx="24.8" cy="80.4" r="0.7" fill="#ffd070" opacity="0.81"/><circle cx="96.7" cy="112.9" r="0.9" fill="#ff5aa8" opacity="0.79"/><rect x="302.1" y="58.3" width="3.2" height="2.1" fill="#ffb850" opacity="0.66"/><circle cx="251.1" cy="125.1" r="1.0" fill="#fff2c0" opacity="0.71"/><circle cx="104.0" cy="74.2" r="1.0" fill="#fff6d0" opacity="0.64"/><circle cx="41.0" cy="134.1" r="1.2" fill="#e8f0ff" opacity="0.72"/><rect x="274.0" y="138.3" width="6.3" height="2.1" fill="#ffd070" opacity="0.73"/><circle cx="85.8" cy="66.8" r="0.9" fill="#fff2c0" opacity="0.93"/><rect x="118.5" y="76.0" width="10.8" height="2.3" fill="#ffb850" opacity="0.53"/><circle cx="103.1" cy="125.6" r="1.0" fill="#fff2c0" opacity="0.74"/><rect x="110.0" y="118.6" width="4.8" height="1.5" fill="#fff6d0" opacity="0.59"/><rect x="30.6" y="91.7" width="6.1" height="1.5" fill="#ffe8a0" opacity="0.52"/><circle cx="24.9" cy="135.2" r="0.6" fill="#fff" opacity="0.65"/><circle cx="240.0" cy="111.9" r="0.6" fill="#ffc060" opacity="0.62"/><circle cx="234.0" cy="47.7" r="1.0" fill="#ffd880" opacity="0.65"/><circle cx="241.0" cy="134.3" r="0.5" fill="#f04840" opacity="0.66"/><circle cx="219.5" cy="23.3" r="1.2" fill="#e8f0ff" opacity="0.90"/><circle cx="151.6" cy="45.8" r="0.8" fill="#ffc060" opacity="0.92"/><circle cx="117.9" cy="76.1" r="0.7" fill="#fff6d0" opacity="0.89"/><circle cx="51.3" cy="19.3" r="0.6" fill="#50d0f0" opacity="0.81"/><circle cx="13.5" cy="38.1" r="0.6" fill="#ffd070" opacity="0.76"/><circle cx="292.3" cy="130.5" r="0.8" fill="#ffd880" opacity="0.73"/><circle cx="256.7" cy="135.8" r="0.9" fill="#f04840" opacity="0.92"/><circle cx="89.2" cy="88.8" r="1.0" fill="#ffb850" opacity="0.80"/><rect x="54.0" y="144.9" width="10.6" height="1.9" fill="#ffd070" opacity="0.75"/><circle cx="268.6" cy="56.0" r="0.9" fill="#e8f0ff" opacity="0.77"/><circle cx="75.1" cy="44.7" r="0.5" fill="#fff" opacity="0.92"/></g></svg>
  <!-- bottom h scrollbar -->
  <div class="abs" style="left:1600px;top:1181px;width:615px;height:16px;background:#f3f3f1"></div>
  <div class="abs" style="left:1604px;top:1185px;width:290px;height:9px;border-radius:5px;background:#c2c2c2"></div>
 </div>
</div>
<!-- inner desktop strip + dock of the embedded screenshot -->
<div class="abs" style="left:1080px;top:1430px;width:1770px;height:56px;background:linear-gradient(rgba(0,0,0,0) 60%,rgba(20,30,110,.35)),linear-gradient(90deg,#16234e,#1b2c66 30%,#2a2a6a 62%,#3a2466 85%,#371f5c)"></div>
<div class="abs" style="left:2735px;top:1430px;width:115px;height:18px;background:linear-gradient(#7e7e86,#b4b4b8 30%,#e2e2e2)"></div>
<div class="abs" style="left:1190px;top:1431px;width:1551px;height:47px;border-radius:11px;background:rgba(118,114,168,.93);box-shadow:0 0 0 1px rgba(200,200,230,.3)"></div>
<svg class="abs" style="left:1080px;top:1430px" width="1770" height="56" viewBox="1080 1430 1770 56"><use href="#i_finder" x="1195.0" y="1437.5" width="30" height="30"/><circle cx="1210.0" cy="1473.500" r="1.600" fill="#16162a"/><use href="#i_launchpad" x="1233.0" y="1437.5" width="30" height="30"/><use href="#i_safari" x="1269.0" y="1437.5" width="30" height="30"/><circle cx="1284.0" cy="1473.500" r="1.600" fill="#16162a"/><use href="#i_messages" x="1306.0" y="1437.5" width="30" height="30"/><use href="#i_mail" x="1343.0" y="1437.5" width="30" height="30"/><use href="#i_operadark" x="1379.6" y="1437.5" width="30" height="30"/><circle cx="1394.6" cy="1473.500" r="1.600" fill="#16162a"/><use href="#i_facetime" x="1416.0" y="1437.5" width="30" height="30"/><use href="#i_photos" x="1453.0" y="1437.5" width="30" height="30"/><use href="#i_calendar4" x="1490.0" y="1437.5" width="30" height="30"/><use href="#i_reminders" x="1527.0" y="1437.5" width="30" height="30"/><use href="#i_notes" x="1564.0" y="1437.5" width="30" height="30"/><use href="#i_music" x="1600.6" y="1437.5" width="30" height="30"/><use href="#i_news" x="1637.0" y="1437.5" width="30" height="30"/><use href="#i_appstore" x="1674.0" y="1437.5" width="30" height="30"/><use href="#i_appletv" x="1711.0" y="1437.5" width="30" height="30"/><use href="#i_paintbrush" x="1748.0" y="1437.5" width="30" height="30"/><circle cx="1763.0" cy="1473.500" r="1.600" fill="#16162a"/><use href="#i_firefox" x="1785.0" y="1437.5" width="30" height="30"/><circle cx="1800.0" cy="1473.500" r="1.600" fill="#16162a"/><use href="#i_calculator" x="1821.7" y="1437.5" width="30" height="30"/><use href="#i_filezilla" x="1858.5" y="1437.5" width="30" height="30"/><circle cx="1873.5" cy="1473.500" r="1.600" fill="#16162a"/><use href="#i_bbedit" x="1895.0" y="1437.5" width="30" height="30"/><circle cx="1910.0" cy="1473.500" r="1.600" fill="#16162a"/><use href="#i_xcode" x="1932.0" y="1437.5" width="30" height="30"/><use href="#i_sysprefs" x="1969.0" y="1437.5" width="30" height="30"/><use href="#i_elephant" x="2006.0" y="1437.5" width="30" height="30"/><circle cx="2021.0" cy="1473.500" r="1.600" fill="#16162a"/><use href="#i_preview" x="2043.0" y="1437.5" width="30" height="30"/><use href="#i_doc" x="2079.6" y="1437.5" width="30" height="30"/><use href="#i_podcasts" x="2116.0" y="1437.5" width="30" height="30"/><use href="#i_gimp" x="2153.0" y="1437.5" width="30" height="30"/><use href="#i_zoom" x="2190.0" y="1437.5" width="30" height="30"/><use href="#i_contacts" x="2227.0" y="1437.5" width="30" height="30"/><use href="#i_terminal" x="2264.0" y="1437.5" width="30" height="30"/><circle cx="2279.0" cy="1473.500" r="1.600" fill="#16162a"/><use href="#i_intellij" x="2300.6" y="1437.5" width="30" height="30"/><use href="#i_quicktime" x="2337.5" y="1437.5" width="30" height="30"/><use href="#i_chrome" x="2374.0" y="1437.5" width="30" height="30"/><circle cx="2389.0" cy="1473.500" r="1.600" fill="#16162a"/><use href="#i_darkwin" x="2427.0" y="1437.5" width="30" height="30"/><use href="#i_xcode" x="2464.5" y="1437.5" width="30" height="30"/><circle cx="2479.5" cy="1473.500" r="1.600" fill="#16162a"/><use href="#i_script" x="2502.0" y="1437.5" width="30" height="30"/><circle cx="2517.0" cy="1473.500" r="1.600" fill="#16162a"/><use href="#i_doc" x="2556.0" y="1437.5" width="30" height="30"/><use href="#i_thumbl" x="2594.0" y="1437.5" width="30" height="30"/><use href="#i_thumbl" x="2630.0" y="1437.5" width="30" height="30"/><use href="#i_thumbl" x="2667.0" y="1437.5" width="30" height="30"/><use href="#i_trash" x="2703.6" y="1437.5" width="30" height="30"/><path d="M2417 1438v32M2545 1438v32" stroke="#5a5690" stroke-width="1.200"/><circle cx="1332" cy="1440" r="5.500" fill="#ea3b35"/><circle cx="1995" cy="1440" r="5.500" fill="#ea3b35"/></svg>
  </div></div><!-- /shot -->
  <!-- outer scrollbars -->
  <div class="abs" style="left:2852px;top:174px;width:28px;height:1545px;background:#f4f4f2;border-left:1px solid #e6e6e4"></div>
  <div class="abs" style="left:2858px;top:183px;width:15.500px;height:1256px;border-radius:8px;background:#c1c1c1"></div>
  <div class="abs" style="left:1080px;top:1688px;width:1772px;height:30px;background:#f4f4f2;border-top:1px solid #e6e6e4"></div>
  <div class="abs" style="left:1087px;top:1694px;width:1076px;height:16px;border-radius:8px;background:#c1c1c1"></div>
 </div>
</div>
<!-- ================= DOCK ================= -->
<div class="abs" style="left:33px;top:1723px;width:2814px;height:67px;border-radius:17px;background:rgba(78,82,79,.93);box-shadow:0 0 0 1px rgba(150,155,150,.35),0 0 0 2px rgba(0,0,0,.35)"></div>
<svg class="abs" style="left:0;top:1720px" width="2880" height="80" viewBox="0 1720 2880 80"><use href="#i_finder" x="43.0" y="1733.0" width="40" height="40"/><circle cx="63.0" cy="1782.500" r="2.300" fill="#0c0c0c"/><use href="#i_reminders" x="93.0" y="1733.0" width="40" height="40"/><use href="#i_mail" x="143.0" y="1733.0" width="40" height="40"/><use href="#i_messages" x="193.0" y="1733.0" width="40" height="40"/><use href="#i_notes" x="243.0" y="1733.0" width="40" height="40"/><use href="#i_launchpad" x="293.0" y="1733.0" width="40" height="40"/><use href="#i_freeform" x="344.0" y="1733.0" width="40" height="40"/><use href="#i_facetime" x="395.0" y="1733.0" width="40" height="40"/><use href="#i_darkterm" x="445.0" y="1733.0" width="40" height="40"/><use href="#i_calculator" x="495.0" y="1733.0" width="40" height="40"/><use href="#i_doc" x="545.0" y="1733.0" width="40" height="40"/><use href="#i_appstore" x="595.0" y="1733.0" width="40" height="40"/><use href="#i_filezilla" x="645.0" y="1733.0" width="40" height="40"/><circle cx="665.0" cy="1782.500" r="2.300" fill="#0c0c0c"/><use href="#i_contacts" x="696.0" y="1733.0" width="40" height="40"/><use href="#i_news" x="745.0" y="1733.0" width="40" height="40"/><use href="#i_gimp" x="795.0" y="1733.0" width="40" height="40"/><use href="#i_appletv" x="845.0" y="1733.0" width="40" height="40"/><use href="#i_firefox" x="895.0" y="1733.0" width="40" height="40"/><circle cx="915.0" cy="1782.500" r="2.300" fill="#0c0c0c"/><use href="#i_noslash" x="946.0" y="1733.0" width="40" height="40"/><use href="#i_music" x="997.0" y="1733.0" width="40" height="40"/><use href="#i_bbedit" x="1046.0" y="1733.0" width="40" height="40"/><circle cx="1066.0" cy="1782.500" r="2.300" fill="#0c0c0c"/><use href="#i_safari" x="1097.0" y="1733.0" width="40" height="40"/><circle cx="1117.0" cy="1782.500" r="2.300" fill="#0c0c0c"/><use href="#i_preview" x="1147.0" y="1733.0" width="40" height="40"/><use href="#i_podcasts" x="1197.0" y="1733.0" width="40" height="40"/><use href="#i_darkterm" x="1247.0" y="1733.0" width="40" height="40"/><use href="#i_calendar" x="1296.0" y="1733.0" width="40" height="40"/><use href="#i_terminal" x="1347.5" y="1733.0" width="40" height="40"/><circle cx="1367.5" cy="1782.500" r="2.300" fill="#0c0c0c"/><use href="#i_quicktime" x="1397.0" y="1733.0" width="40" height="40"/><use href="#i_intellij" x="1448.0" y="1733.0" width="40" height="40"/><use href="#i_doc" x="1495.5" y="1733.0" width="40" height="40"/><use href="#i_paintbrush" x="1547.0" y="1733.0" width="40" height="40"/><circle cx="1567.0" cy="1782.500" r="2.300" fill="#0c0c0c"/><use href="#i_chrome" x="1597.0" y="1733.0" width="40" height="40"/><circle cx="1617.0" cy="1782.500" r="2.300" fill="#0c0c0c"/><use href="#i_zoom" x="1649.0" y="1733.0" width="40" height="40"/><use href="#i_sysprefs" x="1699.0" y="1733.0" width="40" height="40"/><circle cx="1719.0" cy="1782.500" r="2.300" fill="#0c0c0c"/><use href="#i_inkscape" x="1749.5" y="1733.0" width="40" height="40"/><use href="#i_bear" x="1799.0" y="1733.0" width="40" height="40"/><use href="#i_opera" x="1849.0" y="1733.0" width="40" height="40"/><circle cx="1869.0" cy="1782.500" r="2.300" fill="#0c0c0c"/><use href="#i_elephant" x="1898.0" y="1733.0" width="40" height="40"/><circle cx="1918.0" cy="1782.500" r="2.300" fill="#0c0c0c"/><use href="#i_redcompass" x="1949.5" y="1733.0" width="40" height="40"/><use href="#i_xcode" x="1999.0" y="1733.0" width="40" height="40"/><use href="#i_bluetooth" x="2070.5" y="1733.0" width="40" height="40"/><use href="#i_script" x="2122.0" y="1733.0" width="40" height="40"/><use href="#i_access" x="2173.0" y="1733.0" width="40" height="40"/><use href="#i_folder" x="2244.0" y="1733.0" width="40" height="40"/><use href="#i_thumb" x="2295.0" y="1733.0" width="40" height="40"/><use href="#i_thumb" x="2345.0" y="1733.0" width="40" height="40"/><use href="#i_thumb" x="2395.0" y="1733.0" width="40" height="40"/><use href="#i_thumb" x="2445.0" y="1733.0" width="40" height="40"/><use href="#i_thumb" x="2495.0" y="1733.0" width="40" height="40"/><use href="#i_thumb" x="2545.0" y="1733.0" width="40" height="40"/><use href="#i_talldoc" x="2597.0" y="1733.0" width="40" height="40"/><use href="#i_thumbp" x="2647.0" y="1733.0" width="40" height="40"/><use href="#i_thumbp" x="2697.0" y="1733.0" width="40" height="40"/><use href="#i_docblue" x="2747.0" y="1733.0" width="40" height="40"/><use href="#i_trash" x="2797.0" y="1733.0" width="40" height="40"/><path d="M2057 1734v44M2229 1734v44" stroke="#2a2c2a" stroke-width="1.500"/><rect x="120.5" y="1729" width="17" height="17" rx="8.500" fill="#ea3b35"/><text x="129.0" y="1742" text-anchor="middle" font-family="Liberation Sans,sans-serif" font-size="11.500" fill="#fff">3</text><rect x="219.0" y="1729" width="26" height="17" rx="8.500" fill="#ea3b35"/><text x="232.0" y="1742" text-anchor="middle" font-family="Liberation Sans,sans-serif" font-size="11.500" fill="#fff">209</text><rect x="1729.5" y="1729" width="15" height="17" rx="8.500" fill="#ea3b35"/><text x="1737.0" y="1742" text-anchor="middle" font-family="Liberation Sans,sans-serif" font-size="11.500" fill="#fff">2</text></svg>
</body>
</html>
